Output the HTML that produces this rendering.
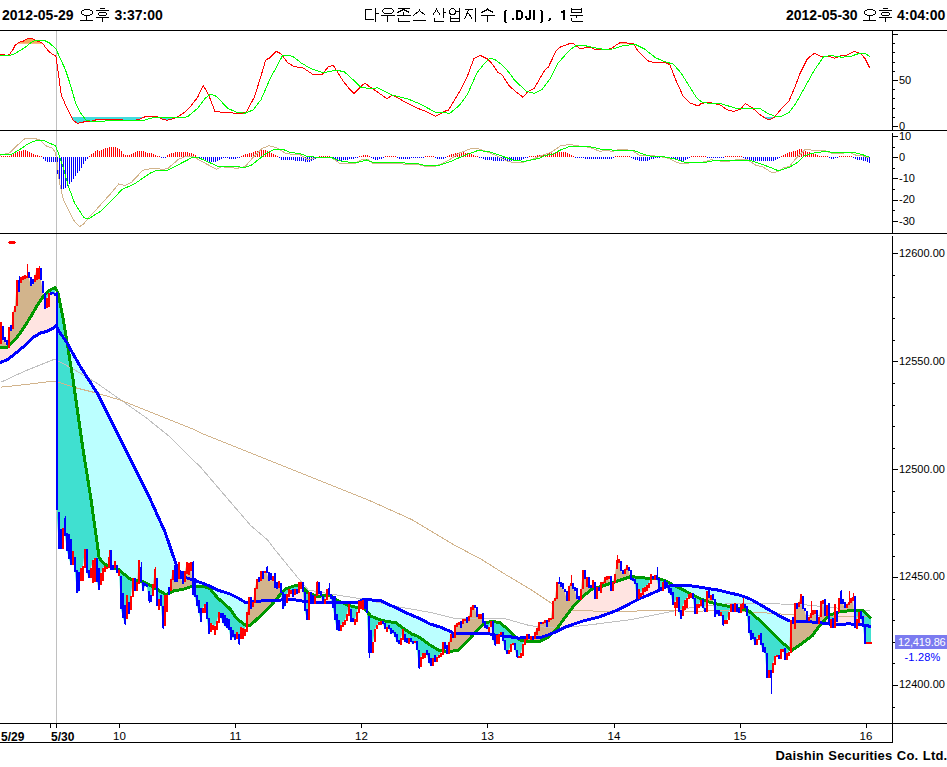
<!DOCTYPE html>
<html><head><meta charset="utf-8">
<style>
html,body{margin:0;padding:0;background:#fff;}
body{width:947px;height:767px;position:relative;overflow:hidden;font-family:"Liberation Sans",sans-serif;}
svg{position:absolute;left:0;top:0;}
.t{position:absolute;white-space:nowrap;line-height:1;}
.c{text-align:center;}
</style></head><body>
<svg width="947" height="767" viewBox="0 0 947 767">
<polygon points="0.0,54.8 0.5,54.8 1.0,54.7 1.5,54.7 2.0,54.6 2.5,54.6 3.0,54.6 3.5,54.5 4.0,54.5 4.5,54.8 5.0,55.0 5.5,55.2 6.0,55.5 6.5,55.7 7.0,55.9 7.5,55.8 8.0,55.4 8.5,55.0 9.0,54.6 9.5,54.2 10.0,53.7 10.5,53.0 11.0,52.4 11.5,51.7 12.0,51.0 12.5,50.3 13.0,49.6 13.5,48.6 14.0,47.6 14.5,46.6 15.0,45.6 15.5,45.1 16.0,44.7 16.5,44.2 17.0,43.8 17.0,43.8 16.5,43.8 16.0,43.8 15.5,43.8 15.0,43.8 14.5,43.8 14.0,43.8 13.5,43.8 13.0,43.8 12.5,43.8 12.0,43.8 11.5,43.8 11.0,43.8 10.5,43.8 10.0,43.8 9.5,43.8 9.0,43.8 8.5,43.8 8.0,43.8 7.5,43.8 7.0,43.8 6.5,43.8 6.0,43.8 5.5,43.8 5.0,43.8 4.5,43.8 4.0,43.8 3.5,43.8 3.0,43.8 2.5,43.8 2.0,43.8 1.5,43.8 1.0,43.8 0.5,43.8 0.0,43.8" fill="none" stroke="none"/>
<polygon points="17.0,43.8 17.0,43.8 17.5,43.3 18.0,42.9 18.5,42.5 19.0,42.4 19.5,42.2 20.0,42.1 20.5,41.9 21.0,41.8 21.5,41.6 22.0,41.5 22.5,41.3 23.0,41.2 23.5,41.0 24.0,40.7 24.5,40.4 25.0,40.2 25.5,39.9 26.0,39.6 26.5,39.3 27.0,39.1 27.5,38.8 28.0,38.5 28.5,38.5 29.0,38.5 29.5,38.5 30.0,38.5 30.5,38.5 31.0,38.5 31.5,38.5 32.0,38.5 32.5,38.5 33.0,38.8 33.5,39.2 34.0,39.5 34.5,39.9 35.0,40.3 35.5,40.5 36.0,40.6 36.5,40.8 37.0,40.9 37.5,41.0 38.0,41.2 38.5,41.3 39.0,41.5 39.5,41.6 40.0,41.8 40.5,42.1 41.0,42.5 41.5,42.8 42.0,43.1 42.5,43.4 43.0,43.7 43.1,43.8 43.1,43.8 43.0,43.8 42.5,43.8 42.0,43.8 41.5,43.8 41.0,43.8 40.5,43.8 40.0,43.8 39.5,43.8 39.0,43.8 38.5,43.8 38.0,43.8 37.5,43.8 37.0,43.8 36.5,43.8 36.0,43.8 35.5,43.8 35.0,43.8 34.5,43.8 34.0,43.8 33.5,43.8 33.0,43.8 32.5,43.8 32.0,43.8 31.5,43.8 31.0,43.8 30.5,43.8 30.0,43.8 29.5,43.8 29.0,43.8 28.5,43.8 28.0,43.8 27.5,43.8 27.0,43.8 26.5,43.8 26.0,43.8 25.5,43.8 25.0,43.8 24.5,43.8 24.0,43.8 23.5,43.8 23.0,43.8 22.5,43.8 22.0,43.8 21.5,43.8 21.0,43.8 20.5,43.8 20.0,43.8 19.5,43.8 19.0,43.8 18.5,43.8 18.0,43.8 17.5,43.8 17.0,43.8 17.0,43.8" fill="#F8A65C"/>
<polygon points="43.1,43.8 43.5,44.5 44.0,45.2 44.5,46.0 45.0,46.7 45.5,47.5 46.0,48.1 46.5,48.7 47.0,49.3 47.5,49.8 48.0,50.4 48.5,51.0 49.0,51.6 49.5,52.2 50.0,52.5 50.5,52.9 51.0,53.2 51.5,53.5 52.0,53.8 52.5,54.1 53.0,54.5 53.5,54.8 54.0,55.1 54.5,55.3 55.0,55.6 55.5,55.8 56.0,57.3 56.5,60.6 57.0,63.9 57.5,67.2 58.0,70.9 58.5,74.6 59.0,78.3 59.5,82.0 60.0,85.6 60.5,89.3 61.0,93.0 61.5,95.7 62.0,96.8 62.5,97.9 63.0,99.1 63.5,100.2 64.0,101.3 64.5,102.5 65.0,103.6 65.5,104.7 66.0,105.9 66.5,107.0 67.0,108.0 67.5,109.0 68.0,110.0 68.5,111.0 69.0,112.0 69.5,113.0 70.0,114.0 70.5,115.0 71.0,116.0 71.5,117.0 72.0,118.0 72.5,119.0 73.0,120.0 73.5,120.4 74.0,120.8 74.5,121.2 75.0,121.6 75.5,122.0 76.0,122.4 76.5,122.8 77.0,123.2 77.5,123.1 78.0,123.1 78.5,123.0 79.0,123.0 79.5,122.9 80.0,122.9 80.5,122.8 81.0,122.7 81.5,122.6 82.0,122.5 82.5,122.3 83.0,122.2 83.5,122.0 84.0,121.9 84.5,121.7 85.0,121.6 85.5,121.4 86.0,121.3 86.5,121.3 87.0,121.3 87.5,121.3 88.0,121.3 88.5,121.3 89.0,121.3 89.5,121.3 90.0,121.3 90.5,121.3 91.0,121.3 91.5,121.2 92.0,121.1 92.5,120.9 93.0,120.8 93.5,120.6 94.0,120.5 94.5,120.3 95.0,120.2 95.5,120.0 96.0,119.9 96.5,119.7 97.0,119.7 97.5,119.7 98.0,119.7 98.5,119.7 99.0,119.7 99.5,119.7 100.0,119.7 100.5,119.7 101.0,119.7 101.5,119.7 102.0,119.7 102.5,119.7 103.0,119.7 103.5,119.7 104.0,119.7 104.5,119.7 105.0,119.7 105.5,119.8 106.0,119.8 106.5,119.8 107.0,119.9 107.5,119.9 108.0,119.9 108.5,119.9 109.0,120.0 109.5,120.0 110.0,120.0 110.5,120.0 111.0,119.9 111.5,119.9 112.0,119.9 112.5,119.9 113.0,119.8 113.5,119.8 114.0,119.8 114.5,119.8 115.0,119.7 115.5,119.7 116.0,119.7 116.5,119.7 117.0,119.6 117.5,119.6 118.0,119.6 118.5,119.6 119.0,119.5 119.5,119.5 120.0,119.5 120.5,119.6 121.0,119.7 121.5,119.7 122.0,119.8 122.5,119.9 123.0,120.0 123.5,120.1 124.0,120.1 124.5,120.2 125.0,120.3 125.5,120.4 126.0,120.4 126.5,120.5 127.0,120.6 127.5,120.7 128.0,120.8 128.5,120.8 129.0,120.9 129.5,121.0 130.0,120.9 130.5,120.8 131.0,120.8 131.5,120.7 132.0,120.6 132.5,120.5 133.0,120.4 133.5,120.4 134.0,120.3 134.5,120.2 135.0,120.1 135.5,120.1 136.0,120.0 136.5,119.9 137.0,119.8 137.5,119.7 138.0,119.7 138.5,119.6 139.0,119.5 139.5,119.3 140.0,119.0 140.5,118.8 141.0,118.6 141.5,118.3 142.0,118.1 142.5,117.9 143.0,117.7 143.5,117.4 144.0,117.2 144.5,117.0 145.0,116.7 145.5,116.6 146.0,116.6 146.5,116.6 147.0,116.6 147.5,116.5 148.0,116.5 148.5,116.5 149.0,116.5 149.5,116.5 150.0,116.5 150.5,116.5 151.0,116.4 151.5,116.4 152.0,116.4 152.5,116.4 153.0,116.4 153.5,116.4 154.0,116.4 154.5,116.4 155.0,116.3 155.5,116.3 156.0,116.3 156.5,116.3 157.0,116.6 157.5,116.8 158.0,117.1 158.5,117.3 159.0,117.6 159.5,117.9 160.0,118.1 160.5,118.4 161.0,118.6 161.5,118.8 162.0,118.9 162.5,119.1 163.0,119.2 163.5,119.4 164.0,119.5 164.5,119.7 165.0,119.8 165.5,120.0 166.0,120.1 166.5,120.2 167.0,120.2 167.5,120.1 168.0,120.0 168.5,119.9 169.0,119.8 169.5,119.7 170.0,119.5 170.5,119.4 171.0,119.3 171.5,119.2 172.0,119.1 172.5,118.9 173.0,118.7 173.5,118.5 174.0,118.3 174.5,118.1 175.0,117.9 175.5,117.7 176.0,117.5 176.5,117.3 177.0,117.1 177.5,116.8 178.0,116.5 178.5,116.2 179.0,115.9 179.5,115.6 180.0,115.3 180.5,115.0 181.0,114.7 181.5,114.4 182.0,114.1 182.5,113.7 183.0,113.4 183.5,113.1 184.0,112.7 184.5,112.2 185.0,111.8 185.5,111.3 186.0,110.9 186.5,110.4 187.0,110.0 187.5,109.6 188.0,109.1 188.5,108.7 189.0,108.2 189.5,107.8 190.0,107.2 190.5,106.6 191.0,105.9 191.5,105.3 192.0,104.6 192.5,103.9 193.0,103.3 193.5,102.6 194.0,102.0 194.5,101.3 195.0,100.7 195.5,100.0 196.0,99.4 196.5,98.7 197.0,98.1 197.5,97.4 198.0,96.4 198.5,95.4 199.0,94.3 199.5,93.3 200.0,92.2 200.5,91.1 201.0,90.1 201.5,89.0 202.0,87.9 202.5,86.9 203.0,85.8 203.5,85.9 204.0,86.8 204.5,87.7 205.0,88.5 205.5,89.4 206.0,90.3 206.5,91.2 207.0,92.0 207.5,92.9 208.0,93.8 208.5,94.7 209.0,95.8 209.5,97.1 210.0,98.4 210.5,99.7 211.0,101.1 211.5,102.4 212.0,103.7 212.5,105.0 213.0,106.3 213.5,107.6 214.0,109.0 214.5,110.3 215.0,111.6 215.5,111.6 216.0,111.7 216.5,111.7 217.0,111.8 217.5,111.8 218.0,111.9 218.5,111.9 219.0,111.9 219.5,112.0 220.0,112.0 220.5,112.1 221.0,112.1 221.5,112.2 222.0,112.2 222.5,112.2 223.0,112.3 223.5,112.3 224.0,112.4 224.5,112.4 225.0,112.5 225.5,112.5 226.0,112.6 226.5,112.6 227.0,112.6 227.5,112.7 228.0,112.7 228.5,112.8 229.0,112.8 229.5,112.8 230.0,112.8 230.5,112.9 231.0,112.9 231.5,112.9 232.0,113.0 232.5,113.0 233.0,113.0 233.5,113.1 234.0,113.1 234.5,113.1 235.0,113.2 235.5,113.2 236.0,113.2 236.5,113.3 237.0,113.3 237.5,113.3 238.0,113.3 238.5,113.4 239.0,113.4 239.5,113.4 240.0,113.5 240.5,113.5 241.0,113.5 241.5,113.6 242.0,113.6 242.5,113.4 243.0,113.2 243.5,113.0 244.0,112.7 244.5,112.5 245.0,112.3 245.5,112.1 246.0,111.9 246.5,111.7 247.0,111.0 247.5,110.1 248.0,109.1 248.5,108.2 249.0,107.2 249.5,106.2 250.0,105.3 250.5,104.3 251.0,103.4 251.5,102.4 252.0,101.5 252.5,100.5 253.0,99.6 253.5,98.6 254.0,97.6 254.5,96.7 255.0,95.2 255.5,93.6 256.0,92.0 256.5,90.4 257.0,88.8 257.5,87.2 258.0,85.6 258.5,84.0 259.0,82.4 259.5,80.8 260.0,79.2 260.5,77.6 261.0,76.0 261.5,74.3 262.0,72.6 262.5,70.9 263.0,69.2 263.5,67.5 264.0,65.8 264.5,64.1 265.0,62.4 265.5,60.7 266.0,59.8 266.5,59.6 267.0,59.3 267.5,59.0 268.0,58.8 268.5,58.5 269.0,58.2 269.5,58.0 270.0,57.7 270.5,57.2 271.0,56.7 271.5,56.2 272.0,55.7 272.5,55.2 273.0,54.7 273.5,54.2 274.0,53.7 274.5,53.2 275.0,52.7 275.5,52.2 276.0,51.7 276.5,51.5 277.0,51.8 277.5,52.0 278.0,52.3 278.5,52.5 279.0,52.8 279.5,53.0 280.0,53.3 280.5,53.5 281.0,53.8 281.5,54.5 282.0,55.2 282.5,55.8 283.0,56.5 283.5,57.2 284.0,57.9 284.5,58.6 285.0,59.2 285.5,59.9 286.0,60.6 286.5,61.3 287.0,62.0 287.5,62.6 288.0,62.9 288.5,63.2 289.0,63.5 289.5,63.8 290.0,64.1 290.5,64.4 291.0,64.7 291.5,65.0 292.0,65.3 292.5,65.6 293.0,65.9 293.5,66.2 294.0,66.4 294.5,66.5 295.0,66.6 295.5,66.7 296.0,66.8 296.5,66.9 297.0,66.9 297.5,67.0 298.0,67.1 298.5,67.2 299.0,67.3 299.5,67.4 300.0,67.4 300.5,67.5 301.0,67.6 301.5,67.7 302.0,67.8 302.5,67.9 303.0,67.9 303.5,68.1 304.0,68.5 304.5,68.8 305.0,69.1 305.5,69.5 306.0,69.8 306.5,70.2 307.0,70.5 307.5,70.8 308.0,71.2 308.5,71.5 309.0,71.8 309.5,72.2 310.0,72.5 310.5,72.9 311.0,73.2 311.5,73.5 312.0,73.9 312.5,74.2 313.0,74.4 313.5,74.4 314.0,74.4 314.5,74.4 315.0,74.4 315.5,74.4 316.0,74.4 316.5,74.4 317.0,74.4 317.5,74.4 318.0,74.4 318.5,74.4 319.0,74.4 319.5,74.4 320.0,74.4 320.5,74.4 321.0,74.4 321.5,74.4 322.0,74.4 322.5,74.1 323.0,73.5 323.5,72.9 324.0,72.2 324.5,71.6 325.0,71.0 325.5,70.3 326.0,69.7 326.5,69.1 327.0,68.4 327.5,67.8 328.0,67.2 328.5,66.5 329.0,66.3 329.5,66.2 330.0,66.2 330.5,66.1 331.0,66.0 331.5,65.9 332.0,65.8 332.5,65.8 333.0,65.7 333.5,65.8 334.0,66.5 334.5,67.3 335.0,68.1 335.5,68.9 336.0,69.7 336.5,70.5 337.0,71.2 337.5,72.0 338.0,72.8 338.5,73.6 339.0,74.4 339.5,75.2 340.0,76.0 340.5,76.8 341.0,77.6 341.5,78.4 342.0,79.2 342.5,80.1 343.0,80.8 343.5,81.5 344.0,82.1 344.5,82.7 345.0,83.3 345.5,84.0 346.0,84.6 346.5,85.2 347.0,85.8 347.5,86.5 348.0,87.1 348.5,87.7 349.0,88.3 349.5,88.9 350.0,89.4 350.5,89.9 351.0,90.4 351.5,90.9 352.0,91.4 352.5,91.9 353.0,92.4 353.5,92.9 354.0,93.4 354.5,92.9 355.0,92.4 355.5,91.9 356.0,91.4 356.5,90.9 357.0,90.4 357.5,89.8 358.0,89.3 358.5,88.8 359.0,88.3 359.5,87.8 360.0,87.3 360.5,86.8 361.0,86.4 361.5,86.0 362.0,85.6 362.5,85.1 363.0,84.7 363.5,84.3 364.0,83.9 364.5,83.4 365.0,83.0 365.5,83.4 366.0,83.8 366.5,84.2 367.0,84.7 367.5,85.1 368.0,85.5 368.5,85.9 369.0,86.3 369.5,86.7 370.0,87.1 370.5,87.4 371.0,87.8 371.5,88.1 372.0,88.4 372.5,88.7 373.0,89.0 373.5,89.3 374.0,89.7 374.5,90.0 375.0,90.3 375.5,90.6 376.0,90.9 376.5,91.3 377.0,91.6 377.5,92.0 378.0,92.4 378.5,92.7 379.0,93.1 379.5,93.4 380.0,93.8 380.5,94.1 381.0,94.5 381.5,94.8 382.0,95.2 382.5,95.6 383.0,95.9 383.5,96.3 384.0,96.6 384.5,97.0 385.0,97.3 385.5,97.7 386.0,98.0 386.5,98.4 387.0,98.8 387.5,98.7 388.0,98.2 388.5,97.8 389.0,97.4 389.5,97.0 390.0,96.6 390.5,96.2 391.0,95.8 391.5,95.4 392.0,95.0 392.5,95.2 393.0,95.5 393.5,95.7 394.0,96.0 394.5,96.2 395.0,96.5 395.5,96.7 396.0,97.0 396.5,97.2 397.0,97.5 397.5,97.7 398.0,98.0 398.5,98.3 399.0,98.6 399.5,98.9 400.0,99.1 400.5,99.4 401.0,99.7 401.5,100.0 402.0,100.3 402.5,100.5 403.0,100.8 403.5,101.1 404.0,101.4 404.5,101.7 405.0,101.9 405.5,102.2 406.0,102.5 406.5,102.8 407.0,103.1 407.5,103.3 408.0,103.6 408.5,103.9 409.0,104.2 409.5,104.4 410.0,104.7 410.5,104.9 411.0,105.1 411.5,105.4 412.0,105.6 412.5,105.8 413.0,106.0 413.5,106.3 414.0,106.5 414.5,106.7 415.0,106.9 415.5,107.2 416.0,107.4 416.5,107.6 417.0,107.8 417.5,108.1 418.0,108.3 418.5,108.5 419.0,108.7 419.5,109.0 420.0,109.2 420.5,109.4 421.0,109.6 421.5,109.8 422.0,110.0 422.5,110.2 423.0,110.3 423.5,110.5 424.0,110.7 424.5,110.9 425.0,111.1 425.5,111.3 426.0,111.5 426.5,111.7 427.0,111.9 427.5,112.2 428.0,112.4 428.5,112.7 429.0,112.9 429.5,113.2 430.0,113.4 430.5,113.7 431.0,113.9 431.5,114.2 432.0,114.4 432.5,114.7 433.0,114.9 433.5,115.2 434.0,115.4 434.5,115.7 435.0,115.9 435.5,116.2 436.0,116.2 436.5,115.9 437.0,115.6 437.5,115.3 438.0,115.0 438.5,114.7 439.0,114.4 439.5,114.1 440.0,113.8 440.5,113.5 441.0,113.2 441.5,113.0 442.0,112.7 442.5,112.4 443.0,112.1 443.5,111.8 444.0,111.5 444.5,111.4 445.0,111.2 445.5,111.0 446.0,110.9 446.5,110.7 447.0,110.5 447.5,110.3 448.0,110.2 448.5,110.0 449.0,109.2 449.5,108.4 450.0,107.5 450.5,106.7 451.0,105.9 451.5,105.1 452.0,104.3 452.5,103.5 453.0,102.6 453.5,101.8 454.0,101.0 454.5,100.2 455.0,99.4 455.5,98.5 456.0,97.6 456.5,96.8 457.0,95.9 457.5,95.0 458.0,94.2 458.5,93.3 459.0,92.4 459.5,91.5 460.0,90.7 460.5,89.8 461.0,88.9 461.5,88.0 462.0,87.0 462.5,86.0 463.0,85.0 463.5,84.0 464.0,83.0 464.5,82.0 465.0,81.0 465.5,80.0 466.0,79.0 466.5,78.0 467.0,77.0 467.5,76.0 468.0,74.6 468.5,73.3 469.0,71.9 469.5,70.5 470.0,69.2 470.5,67.8 471.0,66.4 471.5,65.1 472.0,63.7 472.5,62.3 473.0,61.0 473.5,59.6 474.0,58.4 474.5,58.2 475.0,57.9 475.5,57.7 476.0,57.4 476.5,57.2 477.0,56.9 477.5,56.7 478.0,56.4 478.5,56.2 479.0,55.9 479.5,55.7 480.0,55.4 480.5,55.5 481.0,55.7 481.5,56.0 482.0,56.2 482.5,56.5 483.0,56.7 483.5,57.0 484.0,57.2 484.5,57.5 485.0,57.7 485.5,58.0 486.0,58.2 486.5,58.5 487.0,58.7 487.5,59.0 488.0,59.2 488.5,59.8 489.0,60.3 489.5,60.9 490.0,61.5 490.5,62.0 491.0,62.6 491.5,63.2 492.0,63.8 492.5,64.3 493.0,65.0 493.5,65.7 494.0,66.5 494.5,67.3 495.0,68.0 495.5,68.8 496.0,69.5 496.5,70.3 497.0,71.1 497.5,71.8 498.0,72.3 498.5,72.6 499.0,72.9 499.5,73.2 500.0,73.5 500.5,73.9 501.0,74.2 501.5,74.5 502.0,74.8 502.5,75.3 503.0,76.1 503.5,76.9 504.0,77.7 504.5,78.5 505.0,79.4 505.5,80.2 506.0,81.0 506.5,81.8 507.0,82.6 507.5,83.4 508.0,84.3 508.5,85.1 509.0,85.7 509.5,86.1 510.0,86.6 510.5,87.0 511.0,87.4 511.5,87.9 512.0,88.3 512.5,88.8 513.0,89.2 513.5,89.7 514.0,90.1 514.5,90.6 515.0,91.0 515.5,91.4 516.0,91.8 516.5,92.2 517.0,92.6 517.5,93.0 518.0,93.4 518.5,93.8 519.0,94.2 519.5,94.5 520.0,94.9 520.5,95.3 521.0,95.7 521.5,96.1 522.0,96.5 522.5,96.9 523.0,97.3 523.5,96.7 524.0,96.1 524.5,95.5 525.0,95.0 525.5,94.4 526.0,93.8 526.5,93.2 527.0,92.6 527.5,92.0 528.0,91.6 528.5,91.4 529.0,91.1 529.5,90.9 530.0,90.6 530.5,90.4 531.0,90.1 531.5,89.9 532.0,89.6 532.5,89.4 533.0,89.1 533.5,88.9 534.0,88.6 534.5,87.7 535.0,86.9 535.5,86.0 536.0,85.2 536.5,84.3 537.0,83.5 537.5,82.6 538.0,81.8 538.5,80.9 539.0,80.0 539.5,79.2 540.0,78.3 540.5,77.5 541.0,76.6 541.5,75.8 542.0,74.9 542.5,74.1 543.0,73.2 543.5,72.3 544.0,71.5 544.5,70.6 545.0,69.8 545.5,69.3 546.0,68.9 546.5,68.5 547.0,68.2 547.5,67.8 548.0,67.4 548.5,66.8 549.0,65.7 549.5,64.7 550.0,63.6 550.5,62.6 551.0,61.5 551.5,60.5 552.0,59.4 552.5,58.4 553.0,57.3 553.5,56.3 554.0,55.2 554.5,54.2 555.0,53.1 555.5,52.1 556.0,51.0 556.5,50.4 557.0,49.9 557.5,49.5 558.0,49.1 558.5,48.7 559.0,48.3 559.5,47.9 560.0,47.4 560.5,47.0 561.0,46.6 561.5,46.4 562.0,46.3 562.5,46.1 563.0,45.9 563.5,45.7 564.0,45.6 564.5,45.4 565.0,45.2 565.5,45.1 566.0,44.9 566.5,44.7 567.0,44.5 567.5,44.4 568.0,44.2 568.5,44.0 569.0,43.8 569.1,43.8 569.1,43.8 569.0,43.8 568.5,43.8 568.0,43.8 567.5,43.8 567.0,43.8 566.5,43.8 566.0,43.8 565.5,43.8 565.0,43.8 564.5,43.8 564.0,43.8 563.5,43.8 563.0,43.8 562.5,43.8 562.0,43.8 561.5,43.8 561.0,43.8 560.5,43.8 560.0,43.8 559.5,43.8 559.0,43.8 558.5,43.8 558.0,43.8 557.5,43.8 557.0,43.8 556.5,43.8 556.0,43.8 555.5,43.8 555.0,43.8 554.5,43.8 554.0,43.8 553.5,43.8 553.0,43.8 552.5,43.8 552.0,43.8 551.5,43.8 551.0,43.8 550.5,43.8 550.0,43.8 549.5,43.8 549.0,43.8 548.5,43.8 548.0,43.8 547.5,43.8 547.0,43.8 546.5,43.8 546.0,43.8 545.5,43.8 545.0,43.8 544.5,43.8 544.0,43.8 543.5,43.8 543.0,43.8 542.5,43.8 542.0,43.8 541.5,43.8 541.0,43.8 540.5,43.8 540.0,43.8 539.5,43.8 539.0,43.8 538.5,43.8 538.0,43.8 537.5,43.8 537.0,43.8 536.5,43.8 536.0,43.8 535.5,43.8 535.0,43.8 534.5,43.8 534.0,43.8 533.5,43.8 533.0,43.8 532.5,43.8 532.0,43.8 531.5,43.8 531.0,43.8 530.5,43.8 530.0,43.8 529.5,43.8 529.0,43.8 528.5,43.8 528.0,43.8 527.5,43.8 527.0,43.8 526.5,43.8 526.0,43.8 525.5,43.8 525.0,43.8 524.5,43.8 524.0,43.8 523.5,43.8 523.0,43.8 522.5,43.8 522.0,43.8 521.5,43.8 521.0,43.8 520.5,43.8 520.0,43.8 519.5,43.8 519.0,43.8 518.5,43.8 518.0,43.8 517.5,43.8 517.0,43.8 516.5,43.8 516.0,43.8 515.5,43.8 515.0,43.8 514.5,43.8 514.0,43.8 513.5,43.8 513.0,43.8 512.5,43.8 512.0,43.8 511.5,43.8 511.0,43.8 510.5,43.8 510.0,43.8 509.5,43.8 509.0,43.8 508.5,43.8 508.0,43.8 507.5,43.8 507.0,43.8 506.5,43.8 506.0,43.8 505.5,43.8 505.0,43.8 504.5,43.8 504.0,43.8 503.5,43.8 503.0,43.8 502.5,43.8 502.0,43.8 501.5,43.8 501.0,43.8 500.5,43.8 500.0,43.8 499.5,43.8 499.0,43.8 498.5,43.8 498.0,43.8 497.5,43.8 497.0,43.8 496.5,43.8 496.0,43.8 495.5,43.8 495.0,43.8 494.5,43.8 494.0,43.8 493.5,43.8 493.0,43.8 492.5,43.8 492.0,43.8 491.5,43.8 491.0,43.8 490.5,43.8 490.0,43.8 489.5,43.8 489.0,43.8 488.5,43.8 488.0,43.8 487.5,43.8 487.0,43.8 486.5,43.8 486.0,43.8 485.5,43.8 485.0,43.8 484.5,43.8 484.0,43.8 483.5,43.8 483.0,43.8 482.5,43.8 482.0,43.8 481.5,43.8 481.0,43.8 480.5,43.8 480.0,43.8 479.5,43.8 479.0,43.8 478.5,43.8 478.0,43.8 477.5,43.8 477.0,43.8 476.5,43.8 476.0,43.8 475.5,43.8 475.0,43.8 474.5,43.8 474.0,43.8 473.5,43.8 473.0,43.8 472.5,43.8 472.0,43.8 471.5,43.8 471.0,43.8 470.5,43.8 470.0,43.8 469.5,43.8 469.0,43.8 468.5,43.8 468.0,43.8 467.5,43.8 467.0,43.8 466.5,43.8 466.0,43.8 465.5,43.8 465.0,43.8 464.5,43.8 464.0,43.8 463.5,43.8 463.0,43.8 462.5,43.8 462.0,43.8 461.5,43.8 461.0,43.8 460.5,43.8 460.0,43.8 459.5,43.8 459.0,43.8 458.5,43.8 458.0,43.8 457.5,43.8 457.0,43.8 456.5,43.8 456.0,43.8 455.5,43.8 455.0,43.8 454.5,43.8 454.0,43.8 453.5,43.8 453.0,43.8 452.5,43.8 452.0,43.8 451.5,43.8 451.0,43.8 450.5,43.8 450.0,43.8 449.5,43.8 449.0,43.8 448.5,43.8 448.0,43.8 447.5,43.8 447.0,43.8 446.5,43.8 446.0,43.8 445.5,43.8 445.0,43.8 444.5,43.8 444.0,43.8 443.5,43.8 443.0,43.8 442.5,43.8 442.0,43.8 441.5,43.8 441.0,43.8 440.5,43.8 440.0,43.8 439.5,43.8 439.0,43.8 438.5,43.8 438.0,43.8 437.5,43.8 437.0,43.8 436.5,43.8 436.0,43.8 435.5,43.8 435.0,43.8 434.5,43.8 434.0,43.8 433.5,43.8 433.0,43.8 432.5,43.8 432.0,43.8 431.5,43.8 431.0,43.8 430.5,43.8 430.0,43.8 429.5,43.8 429.0,43.8 428.5,43.8 428.0,43.8 427.5,43.8 427.0,43.8 426.5,43.8 426.0,43.8 425.5,43.8 425.0,43.8 424.5,43.8 424.0,43.8 423.5,43.8 423.0,43.8 422.5,43.8 422.0,43.8 421.5,43.8 421.0,43.8 420.5,43.8 420.0,43.8 419.5,43.8 419.0,43.8 418.5,43.8 418.0,43.8 417.5,43.8 417.0,43.8 416.5,43.8 416.0,43.8 415.5,43.8 415.0,43.8 414.5,43.8 414.0,43.8 413.5,43.8 413.0,43.8 412.5,43.8 412.0,43.8 411.5,43.8 411.0,43.8 410.5,43.8 410.0,43.8 409.5,43.8 409.0,43.8 408.5,43.8 408.0,43.8 407.5,43.8 407.0,43.8 406.5,43.8 406.0,43.8 405.5,43.8 405.0,43.8 404.5,43.8 404.0,43.8 403.5,43.8 403.0,43.8 402.5,43.8 402.0,43.8 401.5,43.8 401.0,43.8 400.5,43.8 400.0,43.8 399.5,43.8 399.0,43.8 398.5,43.8 398.0,43.8 397.5,43.8 397.0,43.8 396.5,43.8 396.0,43.8 395.5,43.8 395.0,43.8 394.5,43.8 394.0,43.8 393.5,43.8 393.0,43.8 392.5,43.8 392.0,43.8 391.5,43.8 391.0,43.8 390.5,43.8 390.0,43.8 389.5,43.8 389.0,43.8 388.5,43.8 388.0,43.8 387.5,43.8 387.0,43.8 386.5,43.8 386.0,43.8 385.5,43.8 385.0,43.8 384.5,43.8 384.0,43.8 383.5,43.8 383.0,43.8 382.5,43.8 382.0,43.8 381.5,43.8 381.0,43.8 380.5,43.8 380.0,43.8 379.5,43.8 379.0,43.8 378.5,43.8 378.0,43.8 377.5,43.8 377.0,43.8 376.5,43.8 376.0,43.8 375.5,43.8 375.0,43.8 374.5,43.8 374.0,43.8 373.5,43.8 373.0,43.8 372.5,43.8 372.0,43.8 371.5,43.8 371.0,43.8 370.5,43.8 370.0,43.8 369.5,43.8 369.0,43.8 368.5,43.8 368.0,43.8 367.5,43.8 367.0,43.8 366.5,43.8 366.0,43.8 365.5,43.8 365.0,43.8 364.5,43.8 364.0,43.8 363.5,43.8 363.0,43.8 362.5,43.8 362.0,43.8 361.5,43.8 361.0,43.8 360.5,43.8 360.0,43.8 359.5,43.8 359.0,43.8 358.5,43.8 358.0,43.8 357.5,43.8 357.0,43.8 356.5,43.8 356.0,43.8 355.5,43.8 355.0,43.8 354.5,43.8 354.0,43.8 353.5,43.8 353.0,43.8 352.5,43.8 352.0,43.8 351.5,43.8 351.0,43.8 350.5,43.8 350.0,43.8 349.5,43.8 349.0,43.8 348.5,43.8 348.0,43.8 347.5,43.8 347.0,43.8 346.5,43.8 346.0,43.8 345.5,43.8 345.0,43.8 344.5,43.8 344.0,43.8 343.5,43.8 343.0,43.8 342.5,43.8 342.0,43.8 341.5,43.8 341.0,43.8 340.5,43.8 340.0,43.8 339.5,43.8 339.0,43.8 338.5,43.8 338.0,43.8 337.5,43.8 337.0,43.8 336.5,43.8 336.0,43.8 335.5,43.8 335.0,43.8 334.5,43.8 334.0,43.8 333.5,43.8 333.0,43.8 332.5,43.8 332.0,43.8 331.5,43.8 331.0,43.8 330.5,43.8 330.0,43.8 329.5,43.8 329.0,43.8 328.5,43.8 328.0,43.8 327.5,43.8 327.0,43.8 326.5,43.8 326.0,43.8 325.5,43.8 325.0,43.8 324.5,43.8 324.0,43.8 323.5,43.8 323.0,43.8 322.5,43.8 322.0,43.8 321.5,43.8 321.0,43.8 320.5,43.8 320.0,43.8 319.5,43.8 319.0,43.8 318.5,43.8 318.0,43.8 317.5,43.8 317.0,43.8 316.5,43.8 316.0,43.8 315.5,43.8 315.0,43.8 314.5,43.8 314.0,43.8 313.5,43.8 313.0,43.8 312.5,43.8 312.0,43.8 311.5,43.8 311.0,43.8 310.5,43.8 310.0,43.8 309.5,43.8 309.0,43.8 308.5,43.8 308.0,43.8 307.5,43.8 307.0,43.8 306.5,43.8 306.0,43.8 305.5,43.8 305.0,43.8 304.5,43.8 304.0,43.8 303.5,43.8 303.0,43.8 302.5,43.8 302.0,43.8 301.5,43.8 301.0,43.8 300.5,43.8 300.0,43.8 299.5,43.8 299.0,43.8 298.5,43.8 298.0,43.8 297.5,43.8 297.0,43.8 296.5,43.8 296.0,43.8 295.5,43.8 295.0,43.8 294.5,43.8 294.0,43.8 293.5,43.8 293.0,43.8 292.5,43.8 292.0,43.8 291.5,43.8 291.0,43.8 290.5,43.8 290.0,43.8 289.5,43.8 289.0,43.8 288.5,43.8 288.0,43.8 287.5,43.8 287.0,43.8 286.5,43.8 286.0,43.8 285.5,43.8 285.0,43.8 284.5,43.8 284.0,43.8 283.5,43.8 283.0,43.8 282.5,43.8 282.0,43.8 281.5,43.8 281.0,43.8 280.5,43.8 280.0,43.8 279.5,43.8 279.0,43.8 278.5,43.8 278.0,43.8 277.5,43.8 277.0,43.8 276.5,43.8 276.0,43.8 275.5,43.8 275.0,43.8 274.5,43.8 274.0,43.8 273.5,43.8 273.0,43.8 272.5,43.8 272.0,43.8 271.5,43.8 271.0,43.8 270.5,43.8 270.0,43.8 269.5,43.8 269.0,43.8 268.5,43.8 268.0,43.8 267.5,43.8 267.0,43.8 266.5,43.8 266.0,43.8 265.5,43.8 265.0,43.8 264.5,43.8 264.0,43.8 263.5,43.8 263.0,43.8 262.5,43.8 262.0,43.8 261.5,43.8 261.0,43.8 260.5,43.8 260.0,43.8 259.5,43.8 259.0,43.8 258.5,43.8 258.0,43.8 257.5,43.8 257.0,43.8 256.5,43.8 256.0,43.8 255.5,43.8 255.0,43.8 254.5,43.8 254.0,43.8 253.5,43.8 253.0,43.8 252.5,43.8 252.0,43.8 251.5,43.8 251.0,43.8 250.5,43.8 250.0,43.8 249.5,43.8 249.0,43.8 248.5,43.8 248.0,43.8 247.5,43.8 247.0,43.8 246.5,43.8 246.0,43.8 245.5,43.8 245.0,43.8 244.5,43.8 244.0,43.8 243.5,43.8 243.0,43.8 242.5,43.8 242.0,43.8 241.5,43.8 241.0,43.8 240.5,43.8 240.0,43.8 239.5,43.8 239.0,43.8 238.5,43.8 238.0,43.8 237.5,43.8 237.0,43.8 236.5,43.8 236.0,43.8 235.5,43.8 235.0,43.8 234.5,43.8 234.0,43.8 233.5,43.8 233.0,43.8 232.5,43.8 232.0,43.8 231.5,43.8 231.0,43.8 230.5,43.8 230.0,43.8 229.5,43.8 229.0,43.8 228.5,43.8 228.0,43.8 227.5,43.8 227.0,43.8 226.5,43.8 226.0,43.8 225.5,43.8 225.0,43.8 224.5,43.8 224.0,43.8 223.5,43.8 223.0,43.8 222.5,43.8 222.0,43.8 221.5,43.8 221.0,43.8 220.5,43.8 220.0,43.8 219.5,43.8 219.0,43.8 218.5,43.8 218.0,43.8 217.5,43.8 217.0,43.8 216.5,43.8 216.0,43.8 215.5,43.8 215.0,43.8 214.5,43.8 214.0,43.8 213.5,43.8 213.0,43.8 212.5,43.8 212.0,43.8 211.5,43.8 211.0,43.8 210.5,43.8 210.0,43.8 209.5,43.8 209.0,43.8 208.5,43.8 208.0,43.8 207.5,43.8 207.0,43.8 206.5,43.8 206.0,43.8 205.5,43.8 205.0,43.8 204.5,43.8 204.0,43.8 203.5,43.8 203.0,43.8 202.5,43.8 202.0,43.8 201.5,43.8 201.0,43.8 200.5,43.8 200.0,43.8 199.5,43.8 199.0,43.8 198.5,43.8 198.0,43.8 197.5,43.8 197.0,43.8 196.5,43.8 196.0,43.8 195.5,43.8 195.0,43.8 194.5,43.8 194.0,43.8 193.5,43.8 193.0,43.8 192.5,43.8 192.0,43.8 191.5,43.8 191.0,43.8 190.5,43.8 190.0,43.8 189.5,43.8 189.0,43.8 188.5,43.8 188.0,43.8 187.5,43.8 187.0,43.8 186.5,43.8 186.0,43.8 185.5,43.8 185.0,43.8 184.5,43.8 184.0,43.8 183.5,43.8 183.0,43.8 182.5,43.8 182.0,43.8 181.5,43.8 181.0,43.8 180.5,43.8 180.0,43.8 179.5,43.8 179.0,43.8 178.5,43.8 178.0,43.8 177.5,43.8 177.0,43.8 176.5,43.8 176.0,43.8 175.5,43.8 175.0,43.8 174.5,43.8 174.0,43.8 173.5,43.8 173.0,43.8 172.5,43.8 172.0,43.8 171.5,43.8 171.0,43.8 170.5,43.8 170.0,43.8 169.5,43.8 169.0,43.8 168.5,43.8 168.0,43.8 167.5,43.8 167.0,43.8 166.5,43.8 166.0,43.8 165.5,43.8 165.0,43.8 164.5,43.8 164.0,43.8 163.5,43.8 163.0,43.8 162.5,43.8 162.0,43.8 161.5,43.8 161.0,43.8 160.5,43.8 160.0,43.8 159.5,43.8 159.0,43.8 158.5,43.8 158.0,43.8 157.5,43.8 157.0,43.8 156.5,43.8 156.0,43.8 155.5,43.8 155.0,43.8 154.5,43.8 154.0,43.8 153.5,43.8 153.0,43.8 152.5,43.8 152.0,43.8 151.5,43.8 151.0,43.8 150.5,43.8 150.0,43.8 149.5,43.8 149.0,43.8 148.5,43.8 148.0,43.8 147.5,43.8 147.0,43.8 146.5,43.8 146.0,43.8 145.5,43.8 145.0,43.8 144.5,43.8 144.0,43.8 143.5,43.8 143.0,43.8 142.5,43.8 142.0,43.8 141.5,43.8 141.0,43.8 140.5,43.8 140.0,43.8 139.5,43.8 139.0,43.8 138.5,43.8 138.0,43.8 137.5,43.8 137.0,43.8 136.5,43.8 136.0,43.8 135.5,43.8 135.0,43.8 134.5,43.8 134.0,43.8 133.5,43.8 133.0,43.8 132.5,43.8 132.0,43.8 131.5,43.8 131.0,43.8 130.5,43.8 130.0,43.8 129.5,43.8 129.0,43.8 128.5,43.8 128.0,43.8 127.5,43.8 127.0,43.8 126.5,43.8 126.0,43.8 125.5,43.8 125.0,43.8 124.5,43.8 124.0,43.8 123.5,43.8 123.0,43.8 122.5,43.8 122.0,43.8 121.5,43.8 121.0,43.8 120.5,43.8 120.0,43.8 119.5,43.8 119.0,43.8 118.5,43.8 118.0,43.8 117.5,43.8 117.0,43.8 116.5,43.8 116.0,43.8 115.5,43.8 115.0,43.8 114.5,43.8 114.0,43.8 113.5,43.8 113.0,43.8 112.5,43.8 112.0,43.8 111.5,43.8 111.0,43.8 110.5,43.8 110.0,43.8 109.5,43.8 109.0,43.8 108.5,43.8 108.0,43.8 107.5,43.8 107.0,43.8 106.5,43.8 106.0,43.8 105.5,43.8 105.0,43.8 104.5,43.8 104.0,43.8 103.5,43.8 103.0,43.8 102.5,43.8 102.0,43.8 101.5,43.8 101.0,43.8 100.5,43.8 100.0,43.8 99.5,43.8 99.0,43.8 98.5,43.8 98.0,43.8 97.5,43.8 97.0,43.8 96.5,43.8 96.0,43.8 95.5,43.8 95.0,43.8 94.5,43.8 94.0,43.8 93.5,43.8 93.0,43.8 92.5,43.8 92.0,43.8 91.5,43.8 91.0,43.8 90.5,43.8 90.0,43.8 89.5,43.8 89.0,43.8 88.5,43.8 88.0,43.8 87.5,43.8 87.0,43.8 86.5,43.8 86.0,43.8 85.5,43.8 85.0,43.8 84.5,43.8 84.0,43.8 83.5,43.8 83.0,43.8 82.5,43.8 82.0,43.8 81.5,43.8 81.0,43.8 80.5,43.8 80.0,43.8 79.5,43.8 79.0,43.8 78.5,43.8 78.0,43.8 77.5,43.8 77.0,43.8 76.5,43.8 76.0,43.8 75.5,43.8 75.0,43.8 74.5,43.8 74.0,43.8 73.5,43.8 73.0,43.8 72.5,43.8 72.0,43.8 71.5,43.8 71.0,43.8 70.5,43.8 70.0,43.8 69.5,43.8 69.0,43.8 68.5,43.8 68.0,43.8 67.5,43.8 67.0,43.8 66.5,43.8 66.0,43.8 65.5,43.8 65.0,43.8 64.5,43.8 64.0,43.8 63.5,43.8 63.0,43.8 62.5,43.8 62.0,43.8 61.5,43.8 61.0,43.8 60.5,43.8 60.0,43.8 59.5,43.8 59.0,43.8 58.5,43.8 58.0,43.8 57.5,43.8 57.0,43.8 56.5,43.8 56.0,43.8 55.5,43.8 55.0,43.8 54.5,43.8 54.0,43.8 53.5,43.8 53.0,43.8 52.5,43.8 52.0,43.8 51.5,43.8 51.0,43.8 50.5,43.8 50.0,43.8 49.5,43.8 49.0,43.8 48.5,43.8 48.0,43.8 47.5,43.8 47.0,43.8 46.5,43.8 46.0,43.8 45.5,43.8 45.0,43.8 44.5,43.8 44.0,43.8 43.5,43.8 43.1,43.8" fill="none" stroke="none"/>
<polygon points="569.1,43.8 569.5,43.7 570.0,43.5 570.5,43.5 571.0,43.5 571.5,43.5 572.0,43.5 572.5,43.5 573.0,43.5 573.5,43.7 573.6,43.8 573.6,43.8 573.5,43.8 573.0,43.8 572.5,43.8 572.0,43.8 571.5,43.8 571.0,43.8 570.5,43.8 570.0,43.8 569.5,43.8 569.1,43.8" fill="#F8A65C"/>
<polygon points="573.6,43.8 574.0,44.1 574.5,44.5 575.0,44.9 575.5,45.3 576.0,45.7 576.5,46.1 577.0,46.4 577.5,46.8 578.0,47.2 578.5,47.6 579.0,48.0 579.5,48.4 580.0,48.8 580.5,48.9 581.0,48.8 581.5,48.7 582.0,48.5 582.5,48.4 583.0,48.2 583.5,48.1 584.0,47.9 584.5,47.8 585.0,47.6 585.5,47.5 586.0,47.4 586.5,47.4 587.0,47.4 587.5,47.4 588.0,47.4 588.5,47.4 589.0,47.4 589.5,47.4 590.0,47.4 590.5,47.4 591.0,47.6 591.5,47.9 592.0,48.1 592.5,48.4 593.0,48.6 593.5,48.9 594.0,49.1 594.5,49.4 595.0,49.6 595.5,49.8 596.0,49.8 596.5,49.8 597.0,49.8 597.5,49.8 598.0,49.8 598.5,49.8 599.0,49.8 599.5,49.8 600.0,49.8 600.5,49.8 601.0,49.8 601.5,49.8 602.0,49.8 602.5,49.8 603.0,49.8 603.5,49.8 604.0,49.8 604.5,49.7 605.0,49.6 605.5,49.6 606.0,49.5 606.5,49.4 607.0,49.3 607.5,49.3 608.0,49.2 608.5,49.1 609.0,49.0 609.5,49.0 610.0,48.9 610.5,48.8 611.0,48.7 611.5,48.5 612.0,48.1 612.5,47.7 613.0,47.3 613.5,46.9 614.0,46.5 614.5,46.2 615.0,45.8 615.5,45.4 616.0,45.0 616.5,44.7 617.0,44.4 617.5,44.2 618.0,43.9 618.2,43.8 618.2,43.8 618.0,43.8 617.5,43.8 617.0,43.8 616.5,43.8 616.0,43.8 615.5,43.8 615.0,43.8 614.5,43.8 614.0,43.8 613.5,43.8 613.0,43.8 612.5,43.8 612.0,43.8 611.5,43.8 611.0,43.8 610.5,43.8 610.0,43.8 609.5,43.8 609.0,43.8 608.5,43.8 608.0,43.8 607.5,43.8 607.0,43.8 606.5,43.8 606.0,43.8 605.5,43.8 605.0,43.8 604.5,43.8 604.0,43.8 603.5,43.8 603.0,43.8 602.5,43.8 602.0,43.8 601.5,43.8 601.0,43.8 600.5,43.8 600.0,43.8 599.5,43.8 599.0,43.8 598.5,43.8 598.0,43.8 597.5,43.8 597.0,43.8 596.5,43.8 596.0,43.8 595.5,43.8 595.0,43.8 594.5,43.8 594.0,43.8 593.5,43.8 593.0,43.8 592.5,43.8 592.0,43.8 591.5,43.8 591.0,43.8 590.5,43.8 590.0,43.8 589.5,43.8 589.0,43.8 588.5,43.8 588.0,43.8 587.5,43.8 587.0,43.8 586.5,43.8 586.0,43.8 585.5,43.8 585.0,43.8 584.5,43.8 584.0,43.8 583.5,43.8 583.0,43.8 582.5,43.8 582.0,43.8 581.5,43.8 581.0,43.8 580.5,43.8 580.0,43.8 579.5,43.8 579.0,43.8 578.5,43.8 578.0,43.8 577.5,43.8 577.0,43.8 576.5,43.8 576.0,43.8 575.5,43.8 575.0,43.8 574.5,43.8 574.0,43.8 573.6,43.8" fill="none" stroke="none"/>
<polygon points="618.2,43.8 618.5,43.6 619.0,43.3 619.5,43.1 620.0,42.8 620.5,42.5 621.0,42.4 621.5,42.5 622.0,42.5 622.5,42.6 623.0,42.6 623.5,42.7 624.0,42.7 624.5,42.8 625.0,42.8 625.5,42.9 626.0,42.9 626.5,43.0 627.0,43.0 627.5,43.0 628.0,43.1 628.5,43.1 629.0,43.2 629.5,43.2 630.0,43.2 630.5,43.3 631.0,43.3 631.5,43.4 632.0,43.4 632.5,43.4 633.0,43.5 633.5,43.7 633.6,43.8 633.6,43.8 633.5,43.8 633.0,43.8 632.5,43.8 632.0,43.8 631.5,43.8 631.0,43.8 630.5,43.8 630.0,43.8 629.5,43.8 629.0,43.8 628.5,43.8 628.0,43.8 627.5,43.8 627.0,43.8 626.5,43.8 626.0,43.8 625.5,43.8 625.0,43.8 624.5,43.8 624.0,43.8 623.5,43.8 623.0,43.8 622.5,43.8 622.0,43.8 621.5,43.8 621.0,43.8 620.5,43.8 620.0,43.8 619.5,43.8 619.0,43.8 618.5,43.8 618.2,43.8" fill="#F8A65C"/>
<polygon points="633.6,43.8 634.0,44.5 634.5,45.3 635.0,46.2 635.5,47.0 636.0,47.9 636.5,48.7 637.0,49.6 637.5,50.4 638.0,51.2 638.5,51.8 639.0,52.3 639.5,52.8 640.0,53.3 640.5,53.8 641.0,54.2 641.5,54.7 642.0,55.2 642.5,55.7 643.0,56.2 643.5,56.6 644.0,57.1 644.5,57.5 645.0,58.0 645.5,58.4 646.0,58.9 646.5,59.3 647.0,59.7 647.5,60.2 648.0,60.6 648.5,61.1 649.0,61.5 649.5,61.7 650.0,61.8 650.5,61.9 651.0,61.9 651.5,62.0 652.0,62.1 652.5,62.1 653.0,62.2 653.5,62.2 654.0,62.3 654.5,62.4 655.0,62.4 655.5,62.5 656.0,62.5 656.5,62.5 657.0,62.6 657.5,62.6 658.0,62.6 658.5,62.6 659.0,62.7 659.5,62.7 660.0,62.7 660.5,62.7 661.0,62.7 661.5,62.8 662.0,62.8 662.5,62.8 663.0,62.8 663.5,62.9 664.0,62.9 664.5,62.9 665.0,62.9 665.5,63.0 666.0,63.0 666.5,63.0 667.0,63.2 667.5,63.5 668.0,63.8 668.5,64.1 669.0,64.4 669.5,64.6 670.0,65.3 670.5,66.6 671.0,67.8 671.5,69.1 672.0,70.4 672.5,71.6 673.0,72.9 673.5,74.1 674.0,75.4 674.5,76.7 675.0,77.9 675.5,79.2 676.0,80.4 676.5,81.6 677.0,82.7 677.5,83.8 678.0,84.9 678.5,86.0 679.0,87.1 679.5,88.2 680.0,89.3 680.5,90.4 681.0,91.5 681.5,92.6 682.0,93.6 682.5,94.7 683.0,95.8 683.5,96.7 684.0,97.2 684.5,97.6 685.0,98.1 685.5,98.6 686.0,99.0 686.5,99.5 687.0,100.0 687.5,100.5 688.0,100.9 688.5,101.4 689.0,101.9 689.5,102.4 690.0,102.8 690.5,103.2 691.0,103.4 691.5,103.6 692.0,103.8 692.5,103.9 693.0,104.1 693.5,104.3 694.0,104.5 694.5,104.7 695.0,104.8 695.5,105.0 696.0,105.2 696.5,105.4 697.0,105.5 697.5,105.7 698.0,105.9 698.5,105.8 699.0,105.4 699.5,104.9 700.0,104.5 700.5,104.1 701.0,103.6 701.5,103.2 702.0,103.2 702.5,103.1 703.0,103.1 703.5,103.0 704.0,103.0 704.5,102.9 705.0,102.9 705.5,102.8 706.0,102.8 706.5,102.8 707.0,102.7 707.5,102.7 708.0,102.6 708.5,102.6 709.0,102.5 709.5,102.5 710.0,102.6 710.5,102.7 711.0,102.8 711.5,103.0 712.0,103.1 712.5,103.2 713.0,103.3 713.5,103.4 714.0,103.5 714.5,103.6 715.0,103.7 715.5,103.8 716.0,103.9 716.5,104.0 717.0,104.1 717.5,104.3 718.0,104.4 718.5,104.5 719.0,104.6 719.5,104.7 720.0,104.8 720.5,105.1 721.0,105.5 721.5,105.8 722.0,106.2 722.5,106.5 723.0,106.9 723.5,107.2 724.0,107.6 724.5,107.9 725.0,108.3 725.5,108.6 726.0,109.0 726.5,109.3 727.0,109.7 727.5,109.9 728.0,110.1 728.5,110.2 729.0,110.3 729.5,110.4 730.0,110.5 730.5,110.7 731.0,110.8 731.5,110.9 732.0,111.0 732.5,111.1 733.0,111.3 733.5,111.4 734.0,111.3 734.5,111.1 735.0,111.0 735.5,110.8 736.0,110.7 736.5,110.5 737.0,110.4 737.5,110.2 738.0,110.1 738.5,109.9 739.0,109.8 739.5,109.6 740.0,109.5 740.5,109.0 741.0,108.4 741.5,107.9 742.0,107.3 742.5,106.8 743.0,106.2 743.5,105.7 744.0,105.1 744.5,104.6 745.0,104.0 745.5,103.7 746.0,104.0 746.5,104.3 747.0,104.6 747.5,104.9 748.0,105.2 748.5,105.5 749.0,105.8 749.5,106.1 750.0,106.4 750.5,106.7 751.0,107.1 751.5,107.4 752.0,107.7 752.5,108.0 753.0,108.4 753.5,108.9 754.0,109.3 754.5,109.8 755.0,110.3 755.5,110.7 756.0,111.2 756.5,111.7 757.0,112.2 757.5,112.6 758.0,113.1 758.5,113.5 759.0,113.9 759.5,114.2 760.0,114.6 760.5,114.9 761.0,115.3 761.5,115.7 762.0,116.0 762.5,116.4 763.0,116.8 763.5,117.1 764.0,117.4 764.5,117.7 765.0,117.9 765.5,118.2 766.0,118.4 766.5,118.7 767.0,119.0 767.5,119.2 768.0,119.5 768.5,119.7 769.0,120.0 769.5,119.7 770.0,119.5 770.5,119.2 771.0,119.0 771.5,118.7 772.0,118.5 772.5,118.2 773.0,118.0 773.5,117.7 774.0,117.5 774.5,117.2 775.0,116.6 775.5,116.0 776.0,115.3 776.5,114.7 777.0,114.1 777.5,113.5 778.0,112.8 778.5,112.2 779.0,111.6 779.5,111.0 780.0,110.3 780.5,109.7 781.0,109.1 781.5,108.5 782.0,107.9 782.5,107.4 783.0,106.9 783.5,106.4 784.0,105.9 784.5,105.4 785.0,104.9 785.5,104.3 786.0,103.8 786.5,103.3 787.0,102.8 787.5,102.3 788.0,101.8 788.5,101.3 789.0,100.8 789.5,99.6 790.0,98.5 790.5,97.3 791.0,96.2 791.5,95.0 792.0,93.9 792.5,92.7 793.0,91.6 793.5,90.4 794.0,89.3 794.5,88.1 795.0,86.8 795.5,85.5 796.0,84.1 796.5,82.8 797.0,81.5 797.5,80.2 798.0,78.9 798.5,77.6 799.0,76.2 799.5,74.9 800.0,73.6 800.5,72.6 801.0,71.6 801.5,70.6 802.0,69.5 802.5,68.5 803.0,67.5 803.5,66.5 804.0,65.5 804.5,64.5 805.0,63.5 805.5,62.4 806.0,61.4 806.5,60.4 807.0,59.4 807.5,58.8 808.0,58.4 808.5,58.0 809.0,57.6 809.5,57.1 810.0,56.7 810.5,56.3 811.0,55.9 811.5,55.5 812.0,55.1 812.5,54.7 813.0,54.3 813.5,53.9 814.0,53.5 814.5,53.3 815.0,53.5 815.5,53.8 816.0,54.0 816.5,54.3 817.0,54.5 817.5,54.8 818.0,55.0 818.5,55.3 819.0,55.5 819.5,55.8 820.0,56.0 820.5,56.3 821.0,56.5 821.5,56.8 822.0,56.9 822.5,56.8 823.0,56.8 823.5,56.8 824.0,56.7 824.5,56.7 825.0,56.6 825.5,56.6 826.0,56.5 826.5,56.5 827.0,56.5 827.5,56.4 828.0,56.4 828.5,56.3 829.0,56.3 829.5,56.5 830.0,56.7 830.5,56.8 831.0,57.0 831.5,57.2 832.0,57.4 832.5,57.5 833.0,57.7 833.5,57.9 834.0,58.1 834.5,58.2 835.0,58.0 835.5,57.8 836.0,57.6 836.5,57.4 837.0,57.2 837.5,57.0 838.0,56.8 838.5,56.6 839.0,56.4 839.5,56.2 840.0,56.1 840.5,55.9 841.0,55.7 841.5,55.5 842.0,55.4 842.5,55.3 843.0,55.3 843.5,55.3 844.0,55.2 844.5,55.2 845.0,55.2 845.5,55.1 846.0,55.1 846.5,55.0 847.0,55.0 847.5,54.8 848.0,54.6 848.5,54.3 849.0,54.1 849.5,53.8 850.0,53.6 850.5,53.3 851.0,53.1 851.5,52.8 852.0,52.6 852.5,52.3 853.0,52.1 853.5,51.8 854.0,51.6 854.5,51.4 855.0,51.6 855.5,51.8 856.0,52.0 856.5,52.1 857.0,52.3 857.5,52.5 858.0,52.6 858.5,52.8 859.0,53.0 859.5,53.2 860.0,53.3 860.5,53.5 861.0,53.8 861.5,54.4 862.0,55.0 862.5,55.6 863.0,56.2 863.5,56.8 864.0,57.4 864.5,58.0 865.0,58.6 865.5,59.4 866.0,60.4 866.5,61.4 867.0,62.4 867.5,63.4 868.0,64.5 868.5,65.5 869.0,66.5 869.5,67.5 869.5,43.8 869.0,43.8 868.5,43.8 868.0,43.8 867.5,43.8 867.0,43.8 866.5,43.8 866.0,43.8 865.5,43.8 865.0,43.8 864.5,43.8 864.0,43.8 863.5,43.8 863.0,43.8 862.5,43.8 862.0,43.8 861.5,43.8 861.0,43.8 860.5,43.8 860.0,43.8 859.5,43.8 859.0,43.8 858.5,43.8 858.0,43.8 857.5,43.8 857.0,43.8 856.5,43.8 856.0,43.8 855.5,43.8 855.0,43.8 854.5,43.8 854.0,43.8 853.5,43.8 853.0,43.8 852.5,43.8 852.0,43.8 851.5,43.8 851.0,43.8 850.5,43.8 850.0,43.8 849.5,43.8 849.0,43.8 848.5,43.8 848.0,43.8 847.5,43.8 847.0,43.8 846.5,43.8 846.0,43.8 845.5,43.8 845.0,43.8 844.5,43.8 844.0,43.8 843.5,43.8 843.0,43.8 842.5,43.8 842.0,43.8 841.5,43.8 841.0,43.8 840.5,43.8 840.0,43.8 839.5,43.8 839.0,43.8 838.5,43.8 838.0,43.8 837.5,43.8 837.0,43.8 836.5,43.8 836.0,43.8 835.5,43.8 835.0,43.8 834.5,43.8 834.0,43.8 833.5,43.8 833.0,43.8 832.5,43.8 832.0,43.8 831.5,43.8 831.0,43.8 830.5,43.8 830.0,43.8 829.5,43.8 829.0,43.8 828.5,43.8 828.0,43.8 827.5,43.8 827.0,43.8 826.5,43.8 826.0,43.8 825.5,43.8 825.0,43.8 824.5,43.8 824.0,43.8 823.5,43.8 823.0,43.8 822.5,43.8 822.0,43.8 821.5,43.8 821.0,43.8 820.5,43.8 820.0,43.8 819.5,43.8 819.0,43.8 818.5,43.8 818.0,43.8 817.5,43.8 817.0,43.8 816.5,43.8 816.0,43.8 815.5,43.8 815.0,43.8 814.5,43.8 814.0,43.8 813.5,43.8 813.0,43.8 812.5,43.8 812.0,43.8 811.5,43.8 811.0,43.8 810.5,43.8 810.0,43.8 809.5,43.8 809.0,43.8 808.5,43.8 808.0,43.8 807.5,43.8 807.0,43.8 806.5,43.8 806.0,43.8 805.5,43.8 805.0,43.8 804.5,43.8 804.0,43.8 803.5,43.8 803.0,43.8 802.5,43.8 802.0,43.8 801.5,43.8 801.0,43.8 800.5,43.8 800.0,43.8 799.5,43.8 799.0,43.8 798.5,43.8 798.0,43.8 797.5,43.8 797.0,43.8 796.5,43.8 796.0,43.8 795.5,43.8 795.0,43.8 794.5,43.8 794.0,43.8 793.5,43.8 793.0,43.8 792.5,43.8 792.0,43.8 791.5,43.8 791.0,43.8 790.5,43.8 790.0,43.8 789.5,43.8 789.0,43.8 788.5,43.8 788.0,43.8 787.5,43.8 787.0,43.8 786.5,43.8 786.0,43.8 785.5,43.8 785.0,43.8 784.5,43.8 784.0,43.8 783.5,43.8 783.0,43.8 782.5,43.8 782.0,43.8 781.5,43.8 781.0,43.8 780.5,43.8 780.0,43.8 779.5,43.8 779.0,43.8 778.5,43.8 778.0,43.8 777.5,43.8 777.0,43.8 776.5,43.8 776.0,43.8 775.5,43.8 775.0,43.8 774.5,43.8 774.0,43.8 773.5,43.8 773.0,43.8 772.5,43.8 772.0,43.8 771.5,43.8 771.0,43.8 770.5,43.8 770.0,43.8 769.5,43.8 769.0,43.8 768.5,43.8 768.0,43.8 767.5,43.8 767.0,43.8 766.5,43.8 766.0,43.8 765.5,43.8 765.0,43.8 764.5,43.8 764.0,43.8 763.5,43.8 763.0,43.8 762.5,43.8 762.0,43.8 761.5,43.8 761.0,43.8 760.5,43.8 760.0,43.8 759.5,43.8 759.0,43.8 758.5,43.8 758.0,43.8 757.5,43.8 757.0,43.8 756.5,43.8 756.0,43.8 755.5,43.8 755.0,43.8 754.5,43.8 754.0,43.8 753.5,43.8 753.0,43.8 752.5,43.8 752.0,43.8 751.5,43.8 751.0,43.8 750.5,43.8 750.0,43.8 749.5,43.8 749.0,43.8 748.5,43.8 748.0,43.8 747.5,43.8 747.0,43.8 746.5,43.8 746.0,43.8 745.5,43.8 745.0,43.8 744.5,43.8 744.0,43.8 743.5,43.8 743.0,43.8 742.5,43.8 742.0,43.8 741.5,43.8 741.0,43.8 740.5,43.8 740.0,43.8 739.5,43.8 739.0,43.8 738.5,43.8 738.0,43.8 737.5,43.8 737.0,43.8 736.5,43.8 736.0,43.8 735.5,43.8 735.0,43.8 734.5,43.8 734.0,43.8 733.5,43.8 733.0,43.8 732.5,43.8 732.0,43.8 731.5,43.8 731.0,43.8 730.5,43.8 730.0,43.8 729.5,43.8 729.0,43.8 728.5,43.8 728.0,43.8 727.5,43.8 727.0,43.8 726.5,43.8 726.0,43.8 725.5,43.8 725.0,43.8 724.5,43.8 724.0,43.8 723.5,43.8 723.0,43.8 722.5,43.8 722.0,43.8 721.5,43.8 721.0,43.8 720.5,43.8 720.0,43.8 719.5,43.8 719.0,43.8 718.5,43.8 718.0,43.8 717.5,43.8 717.0,43.8 716.5,43.8 716.0,43.8 715.5,43.8 715.0,43.8 714.5,43.8 714.0,43.8 713.5,43.8 713.0,43.8 712.5,43.8 712.0,43.8 711.5,43.8 711.0,43.8 710.5,43.8 710.0,43.8 709.5,43.8 709.0,43.8 708.5,43.8 708.0,43.8 707.5,43.8 707.0,43.8 706.5,43.8 706.0,43.8 705.5,43.8 705.0,43.8 704.5,43.8 704.0,43.8 703.5,43.8 703.0,43.8 702.5,43.8 702.0,43.8 701.5,43.8 701.0,43.8 700.5,43.8 700.0,43.8 699.5,43.8 699.0,43.8 698.5,43.8 698.0,43.8 697.5,43.8 697.0,43.8 696.5,43.8 696.0,43.8 695.5,43.8 695.0,43.8 694.5,43.8 694.0,43.8 693.5,43.8 693.0,43.8 692.5,43.8 692.0,43.8 691.5,43.8 691.0,43.8 690.5,43.8 690.0,43.8 689.5,43.8 689.0,43.8 688.5,43.8 688.0,43.8 687.5,43.8 687.0,43.8 686.5,43.8 686.0,43.8 685.5,43.8 685.0,43.8 684.5,43.8 684.0,43.8 683.5,43.8 683.0,43.8 682.5,43.8 682.0,43.8 681.5,43.8 681.0,43.8 680.5,43.8 680.0,43.8 679.5,43.8 679.0,43.8 678.5,43.8 678.0,43.8 677.5,43.8 677.0,43.8 676.5,43.8 676.0,43.8 675.5,43.8 675.0,43.8 674.5,43.8 674.0,43.8 673.5,43.8 673.0,43.8 672.5,43.8 672.0,43.8 671.5,43.8 671.0,43.8 670.5,43.8 670.0,43.8 669.5,43.8 669.0,43.8 668.5,43.8 668.0,43.8 667.5,43.8 667.0,43.8 666.5,43.8 666.0,43.8 665.5,43.8 665.0,43.8 664.5,43.8 664.0,43.8 663.5,43.8 663.0,43.8 662.5,43.8 662.0,43.8 661.5,43.8 661.0,43.8 660.5,43.8 660.0,43.8 659.5,43.8 659.0,43.8 658.5,43.8 658.0,43.8 657.5,43.8 657.0,43.8 656.5,43.8 656.0,43.8 655.5,43.8 655.0,43.8 654.5,43.8 654.0,43.8 653.5,43.8 653.0,43.8 652.5,43.8 652.0,43.8 651.5,43.8 651.0,43.8 650.5,43.8 650.0,43.8 649.5,43.8 649.0,43.8 648.5,43.8 648.0,43.8 647.5,43.8 647.0,43.8 646.5,43.8 646.0,43.8 645.5,43.8 645.0,43.8 644.5,43.8 644.0,43.8 643.5,43.8 643.0,43.8 642.5,43.8 642.0,43.8 641.5,43.8 641.0,43.8 640.5,43.8 640.0,43.8 639.5,43.8 639.0,43.8 638.5,43.8 638.0,43.8 637.5,43.8 637.0,43.8 636.5,43.8 636.0,43.8 635.5,43.8 635.0,43.8 634.5,43.8 634.0,43.8 633.6,43.8" fill="none" stroke="none"/>
<polygon points="0.0,117.0 0.5,117.0 1.0,117.0 1.5,117.0 2.0,117.0 2.5,117.0 3.0,117.0 3.5,117.0 4.0,117.0 4.5,117.0 5.0,117.0 5.5,117.0 6.0,117.0 6.5,117.0 7.0,117.0 7.5,117.0 8.0,117.0 8.5,117.0 9.0,117.0 9.5,117.0 10.0,117.0 10.5,117.0 11.0,117.0 11.5,117.0 12.0,117.0 12.5,117.0 13.0,117.0 13.5,117.0 14.0,117.0 14.5,117.0 15.0,117.0 15.5,117.0 16.0,117.0 16.5,117.0 17.0,117.0 17.5,117.0 18.0,117.0 18.5,117.0 19.0,117.0 19.5,117.0 20.0,117.0 20.5,117.0 21.0,117.0 21.5,117.0 22.0,117.0 22.5,117.0 23.0,117.0 23.5,117.0 24.0,117.0 24.5,117.0 25.0,117.0 25.5,117.0 26.0,117.0 26.5,117.0 27.0,117.0 27.5,117.0 28.0,117.0 28.5,117.0 29.0,117.0 29.5,117.0 30.0,117.0 30.5,117.0 31.0,117.0 31.5,117.0 32.0,117.0 32.5,117.0 33.0,117.0 33.5,117.0 34.0,117.0 34.5,117.0 35.0,117.0 35.5,117.0 36.0,117.0 36.5,117.0 37.0,117.0 37.5,117.0 38.0,117.0 38.5,117.0 39.0,117.0 39.5,117.0 40.0,117.0 40.5,117.0 41.0,117.0 41.5,117.0 42.0,117.0 42.5,117.0 43.0,117.0 43.5,117.0 44.0,117.0 44.5,117.0 45.0,117.0 45.5,117.0 46.0,117.0 46.5,117.0 47.0,117.0 47.5,117.0 48.0,117.0 48.5,117.0 49.0,117.0 49.5,117.0 50.0,117.0 50.5,117.0 51.0,117.0 51.5,117.0 52.0,117.0 52.5,117.0 53.0,117.0 53.5,117.0 54.0,117.0 54.5,117.0 55.0,117.0 55.5,117.0 56.0,117.0 56.5,117.0 57.0,117.0 57.5,117.0 58.0,117.0 58.5,117.0 59.0,117.0 59.5,117.0 60.0,117.0 60.5,117.0 61.0,117.0 61.5,117.0 62.0,117.0 62.5,117.0 63.0,117.0 63.5,117.0 64.0,117.0 64.5,117.0 65.0,117.0 65.5,117.0 66.0,117.0 66.5,117.0 67.0,117.0 67.5,117.0 68.0,117.0 68.5,117.0 69.0,117.0 69.5,117.0 70.0,117.0 70.5,117.0 71.0,117.0 71.5,117.0 71.5,117.0 71.5,117.0 71.5,117.0 71.0,116.0 70.5,115.0 70.0,114.0 69.5,113.0 69.0,112.0 68.5,111.0 68.0,110.0 67.5,109.0 67.0,108.0 66.5,107.0 66.0,105.9 65.5,104.7 65.0,103.6 64.5,102.5 64.0,101.3 63.5,100.2 63.0,99.1 62.5,97.9 62.0,96.8 61.5,95.7 61.0,93.0 60.5,89.3 60.0,85.6 59.5,82.0 59.0,78.3 58.5,74.6 58.0,70.9 57.5,67.2 57.0,63.9 56.5,60.6 56.0,57.3 55.5,55.8 55.0,55.6 54.5,55.3 54.0,55.1 53.5,54.8 53.0,54.5 52.5,54.1 52.0,53.8 51.5,53.5 51.0,53.2 50.5,52.9 50.0,52.5 49.5,52.2 49.0,51.6 48.5,51.0 48.0,50.4 47.5,49.8 47.0,49.3 46.5,48.7 46.0,48.1 45.5,47.5 45.0,46.7 44.5,46.0 44.0,45.2 43.5,44.5 43.0,43.7 42.5,43.4 42.0,43.1 41.5,42.8 41.0,42.5 40.5,42.1 40.0,41.8 39.5,41.6 39.0,41.5 38.5,41.3 38.0,41.2 37.5,41.0 37.0,40.9 36.5,40.8 36.0,40.6 35.5,40.5 35.0,40.3 34.5,39.9 34.0,39.5 33.5,39.2 33.0,38.8 32.5,38.5 32.0,38.5 31.5,38.5 31.0,38.5 30.5,38.5 30.0,38.5 29.5,38.5 29.0,38.5 28.5,38.5 28.0,38.5 27.5,38.8 27.0,39.1 26.5,39.3 26.0,39.6 25.5,39.9 25.0,40.2 24.5,40.4 24.0,40.7 23.5,41.0 23.0,41.2 22.5,41.3 22.0,41.5 21.5,41.6 21.0,41.8 20.5,41.9 20.0,42.1 19.5,42.2 19.0,42.4 18.5,42.5 18.0,42.9 17.5,43.3 17.0,43.8 16.5,44.2 16.0,44.7 15.5,45.1 15.0,45.6 14.5,46.6 14.0,47.6 13.5,48.6 13.0,49.6 12.5,50.3 12.0,51.0 11.5,51.7 11.0,52.4 10.5,53.0 10.0,53.7 9.5,54.2 9.0,54.6 8.5,55.0 8.0,55.4 7.5,55.8 7.0,55.9 6.5,55.7 6.0,55.5 5.5,55.2 5.0,55.0 4.5,54.8 4.0,54.5 3.5,54.5 3.0,54.6 2.5,54.6 2.0,54.6 1.5,54.7 1.0,54.7 0.5,54.8 0.0,54.8" fill="none" stroke="none"/>
<polygon points="71.5,117.0 72.0,117.0 72.5,117.0 73.0,117.0 73.5,117.0 74.0,117.0 74.5,117.0 75.0,117.0 75.5,117.0 76.0,117.0 76.5,117.0 77.0,117.0 77.5,117.0 78.0,117.0 78.5,117.0 79.0,117.0 79.5,117.0 80.0,117.0 80.5,117.0 81.0,117.0 81.5,117.0 82.0,117.0 82.5,117.0 83.0,117.0 83.5,117.0 84.0,117.0 84.5,117.0 85.0,117.0 85.5,117.0 86.0,117.0 86.5,117.0 87.0,117.0 87.5,117.0 88.0,117.0 88.5,117.0 89.0,117.0 89.5,117.0 90.0,117.0 90.5,117.0 91.0,117.0 91.5,117.0 92.0,117.0 92.5,117.0 93.0,117.0 93.5,117.0 94.0,117.0 94.5,117.0 95.0,117.0 95.5,117.0 96.0,117.0 96.5,117.0 97.0,117.0 97.5,117.0 98.0,117.0 98.5,117.0 99.0,117.0 99.5,117.0 100.0,117.0 100.5,117.0 101.0,117.0 101.5,117.0 102.0,117.0 102.5,117.0 103.0,117.0 103.5,117.0 104.0,117.0 104.5,117.0 105.0,117.0 105.5,117.0 106.0,117.0 106.5,117.0 107.0,117.0 107.5,117.0 108.0,117.0 108.5,117.0 109.0,117.0 109.5,117.0 110.0,117.0 110.5,117.0 111.0,117.0 111.5,117.0 112.0,117.0 112.5,117.0 113.0,117.0 113.5,117.0 114.0,117.0 114.5,117.0 115.0,117.0 115.5,117.0 116.0,117.0 116.5,117.0 117.0,117.0 117.5,117.0 118.0,117.0 118.5,117.0 119.0,117.0 119.5,117.0 120.0,117.0 120.5,117.0 121.0,117.0 121.5,117.0 122.0,117.0 122.5,117.0 123.0,117.0 123.5,117.0 124.0,117.0 124.5,117.0 125.0,117.0 125.5,117.0 126.0,117.0 126.5,117.0 127.0,117.0 127.5,117.0 128.0,117.0 128.5,117.0 129.0,117.0 129.5,117.0 130.0,117.0 130.5,117.0 131.0,117.0 131.5,117.0 132.0,117.0 132.5,117.0 133.0,117.0 133.5,117.0 134.0,117.0 134.5,117.0 135.0,117.0 135.5,117.0 136.0,117.0 136.5,117.0 137.0,117.0 137.5,117.0 138.0,117.0 138.5,117.0 139.0,117.0 139.5,117.0 140.0,117.0 140.5,117.0 141.0,117.0 141.5,117.0 142.0,117.0 142.5,117.0 143.0,117.0 143.5,117.0 144.0,117.0 144.4,117.0 144.4,117.0 144.0,117.2 143.5,117.4 143.0,117.7 142.5,117.9 142.0,118.1 141.5,118.3 141.0,118.6 140.5,118.8 140.0,119.0 139.5,119.3 139.0,119.5 138.5,119.6 138.0,119.7 137.5,119.7 137.0,119.8 136.5,119.9 136.0,120.0 135.5,120.1 135.0,120.1 134.5,120.2 134.0,120.3 133.5,120.4 133.0,120.4 132.5,120.5 132.0,120.6 131.5,120.7 131.0,120.8 130.5,120.8 130.0,120.9 129.5,121.0 129.0,120.9 128.5,120.8 128.0,120.8 127.5,120.7 127.0,120.6 126.5,120.5 126.0,120.4 125.5,120.4 125.0,120.3 124.5,120.2 124.0,120.1 123.5,120.1 123.0,120.0 122.5,119.9 122.0,119.8 121.5,119.7 121.0,119.7 120.5,119.6 120.0,119.5 119.5,119.5 119.0,119.5 118.5,119.6 118.0,119.6 117.5,119.6 117.0,119.6 116.5,119.7 116.0,119.7 115.5,119.7 115.0,119.7 114.5,119.8 114.0,119.8 113.5,119.8 113.0,119.8 112.5,119.9 112.0,119.9 111.5,119.9 111.0,119.9 110.5,120.0 110.0,120.0 109.5,120.0 109.0,120.0 108.5,119.9 108.0,119.9 107.5,119.9 107.0,119.9 106.5,119.8 106.0,119.8 105.5,119.8 105.0,119.7 104.5,119.7 104.0,119.7 103.5,119.7 103.0,119.7 102.5,119.7 102.0,119.7 101.5,119.7 101.0,119.7 100.5,119.7 100.0,119.7 99.5,119.7 99.0,119.7 98.5,119.7 98.0,119.7 97.5,119.7 97.0,119.7 96.5,119.7 96.0,119.9 95.5,120.0 95.0,120.2 94.5,120.3 94.0,120.5 93.5,120.6 93.0,120.8 92.5,120.9 92.0,121.1 91.5,121.2 91.0,121.3 90.5,121.3 90.0,121.3 89.5,121.3 89.0,121.3 88.5,121.3 88.0,121.3 87.5,121.3 87.0,121.3 86.5,121.3 86.0,121.3 85.5,121.4 85.0,121.6 84.5,121.7 84.0,121.9 83.5,122.0 83.0,122.2 82.5,122.3 82.0,122.5 81.5,122.6 81.0,122.7 80.5,122.8 80.0,122.9 79.5,122.9 79.0,123.0 78.5,123.0 78.0,123.1 77.5,123.1 77.0,123.2 76.5,122.8 76.0,122.4 75.5,122.0 75.0,121.6 74.5,121.2 74.0,120.8 73.5,120.4 73.0,120.0 72.5,119.0 72.0,118.0 71.5,117.0" fill="#44DCDC"/>
<polygon points="144.4,117.0 144.5,117.0 145.0,117.0 145.5,117.0 146.0,117.0 146.5,117.0 147.0,117.0 147.5,117.0 148.0,117.0 148.5,117.0 149.0,117.0 149.5,117.0 150.0,117.0 150.5,117.0 151.0,117.0 151.5,117.0 152.0,117.0 152.5,117.0 153.0,117.0 153.5,117.0 154.0,117.0 154.5,117.0 155.0,117.0 155.5,117.0 156.0,117.0 156.5,117.0 157.0,117.0 157.5,117.0 157.8,117.0 157.8,117.0 157.5,116.8 157.0,116.6 156.5,116.3 156.0,116.3 155.5,116.3 155.0,116.3 154.5,116.4 154.0,116.4 153.5,116.4 153.0,116.4 152.5,116.4 152.0,116.4 151.5,116.4 151.0,116.4 150.5,116.5 150.0,116.5 149.5,116.5 149.0,116.5 148.5,116.5 148.0,116.5 147.5,116.5 147.0,116.6 146.5,116.6 146.0,116.6 145.5,116.6 145.0,116.7 144.5,117.0 144.4,117.0" fill="none" stroke="none"/>
<polygon points="157.8,117.0 158.0,117.0 158.5,117.0 159.0,117.0 159.5,117.0 160.0,117.0 160.5,117.0 161.0,117.0 161.5,117.0 162.0,117.0 162.5,117.0 163.0,117.0 163.5,117.0 164.0,117.0 164.5,117.0 165.0,117.0 165.5,117.0 166.0,117.0 166.5,117.0 167.0,117.0 167.5,117.0 168.0,117.0 168.5,117.0 169.0,117.0 169.5,117.0 170.0,117.0 170.5,117.0 171.0,117.0 171.5,117.0 172.0,117.0 172.5,117.0 173.0,117.0 173.5,117.0 174.0,117.0 174.5,117.0 175.0,117.0 175.5,117.0 176.0,117.0 176.5,117.0 177.0,117.0 177.2,117.0 177.2,117.0 177.0,117.1 176.5,117.3 176.0,117.5 175.5,117.7 175.0,117.9 174.5,118.1 174.0,118.3 173.5,118.5 173.0,118.7 172.5,118.9 172.0,119.1 171.5,119.2 171.0,119.3 170.5,119.4 170.0,119.5 169.5,119.7 169.0,119.8 168.5,119.9 168.0,120.0 167.5,120.1 167.0,120.2 166.5,120.2 166.0,120.1 165.5,120.0 165.0,119.8 164.5,119.7 164.0,119.5 163.5,119.4 163.0,119.2 162.5,119.1 162.0,118.9 161.5,118.8 161.0,118.6 160.5,118.4 160.0,118.1 159.5,117.9 159.0,117.6 158.5,117.3 158.0,117.1 157.8,117.0" fill="#44DCDC"/>
<polygon points="177.2,117.0 177.5,117.0 178.0,117.0 178.5,117.0 179.0,117.0 179.5,117.0 180.0,117.0 180.5,117.0 181.0,117.0 181.5,117.0 182.0,117.0 182.5,117.0 183.0,117.0 183.5,117.0 184.0,117.0 184.5,117.0 185.0,117.0 185.5,117.0 186.0,117.0 186.5,117.0 187.0,117.0 187.5,117.0 188.0,117.0 188.5,117.0 189.0,117.0 189.5,117.0 190.0,117.0 190.5,117.0 191.0,117.0 191.5,117.0 192.0,117.0 192.5,117.0 193.0,117.0 193.5,117.0 194.0,117.0 194.5,117.0 195.0,117.0 195.5,117.0 196.0,117.0 196.5,117.0 197.0,117.0 197.5,117.0 198.0,117.0 198.5,117.0 199.0,117.0 199.5,117.0 200.0,117.0 200.5,117.0 201.0,117.0 201.5,117.0 202.0,117.0 202.5,117.0 203.0,117.0 203.5,117.0 204.0,117.0 204.5,117.0 205.0,117.0 205.5,117.0 206.0,117.0 206.5,117.0 207.0,117.0 207.5,117.0 208.0,117.0 208.5,117.0 209.0,117.0 209.5,117.0 210.0,117.0 210.5,117.0 211.0,117.0 211.5,117.0 212.0,117.0 212.5,117.0 213.0,117.0 213.5,117.0 214.0,117.0 214.5,117.0 215.0,117.0 215.5,117.0 216.0,117.0 216.5,117.0 217.0,117.0 217.5,117.0 218.0,117.0 218.5,117.0 219.0,117.0 219.5,117.0 220.0,117.0 220.5,117.0 221.0,117.0 221.5,117.0 222.0,117.0 222.5,117.0 223.0,117.0 223.5,117.0 224.0,117.0 224.5,117.0 225.0,117.0 225.5,117.0 226.0,117.0 226.5,117.0 227.0,117.0 227.5,117.0 228.0,117.0 228.5,117.0 229.0,117.0 229.5,117.0 230.0,117.0 230.5,117.0 231.0,117.0 231.5,117.0 232.0,117.0 232.5,117.0 233.0,117.0 233.5,117.0 234.0,117.0 234.5,117.0 235.0,117.0 235.5,117.0 236.0,117.0 236.5,117.0 237.0,117.0 237.5,117.0 238.0,117.0 238.5,117.0 239.0,117.0 239.5,117.0 240.0,117.0 240.5,117.0 241.0,117.0 241.5,117.0 242.0,117.0 242.5,117.0 243.0,117.0 243.5,117.0 244.0,117.0 244.5,117.0 245.0,117.0 245.5,117.0 246.0,117.0 246.5,117.0 247.0,117.0 247.5,117.0 248.0,117.0 248.5,117.0 249.0,117.0 249.5,117.0 250.0,117.0 250.5,117.0 251.0,117.0 251.5,117.0 252.0,117.0 252.5,117.0 253.0,117.0 253.5,117.0 254.0,117.0 254.5,117.0 255.0,117.0 255.5,117.0 256.0,117.0 256.5,117.0 257.0,117.0 257.5,117.0 258.0,117.0 258.5,117.0 259.0,117.0 259.5,117.0 260.0,117.0 260.5,117.0 261.0,117.0 261.5,117.0 262.0,117.0 262.5,117.0 263.0,117.0 263.5,117.0 264.0,117.0 264.5,117.0 265.0,117.0 265.5,117.0 266.0,117.0 266.5,117.0 267.0,117.0 267.5,117.0 268.0,117.0 268.5,117.0 269.0,117.0 269.5,117.0 270.0,117.0 270.5,117.0 271.0,117.0 271.5,117.0 272.0,117.0 272.5,117.0 273.0,117.0 273.5,117.0 274.0,117.0 274.5,117.0 275.0,117.0 275.5,117.0 276.0,117.0 276.5,117.0 277.0,117.0 277.5,117.0 278.0,117.0 278.5,117.0 279.0,117.0 279.5,117.0 280.0,117.0 280.5,117.0 281.0,117.0 281.5,117.0 282.0,117.0 282.5,117.0 283.0,117.0 283.5,117.0 284.0,117.0 284.5,117.0 285.0,117.0 285.5,117.0 286.0,117.0 286.5,117.0 287.0,117.0 287.5,117.0 288.0,117.0 288.5,117.0 289.0,117.0 289.5,117.0 290.0,117.0 290.5,117.0 291.0,117.0 291.5,117.0 292.0,117.0 292.5,117.0 293.0,117.0 293.5,117.0 294.0,117.0 294.5,117.0 295.0,117.0 295.5,117.0 296.0,117.0 296.5,117.0 297.0,117.0 297.5,117.0 298.0,117.0 298.5,117.0 299.0,117.0 299.5,117.0 300.0,117.0 300.5,117.0 301.0,117.0 301.5,117.0 302.0,117.0 302.5,117.0 303.0,117.0 303.5,117.0 304.0,117.0 304.5,117.0 305.0,117.0 305.5,117.0 306.0,117.0 306.5,117.0 307.0,117.0 307.5,117.0 308.0,117.0 308.5,117.0 309.0,117.0 309.5,117.0 310.0,117.0 310.5,117.0 311.0,117.0 311.5,117.0 312.0,117.0 312.5,117.0 313.0,117.0 313.5,117.0 314.0,117.0 314.5,117.0 315.0,117.0 315.5,117.0 316.0,117.0 316.5,117.0 317.0,117.0 317.5,117.0 318.0,117.0 318.5,117.0 319.0,117.0 319.5,117.0 320.0,117.0 320.5,117.0 321.0,117.0 321.5,117.0 322.0,117.0 322.5,117.0 323.0,117.0 323.5,117.0 324.0,117.0 324.5,117.0 325.0,117.0 325.5,117.0 326.0,117.0 326.5,117.0 327.0,117.0 327.5,117.0 328.0,117.0 328.5,117.0 329.0,117.0 329.5,117.0 330.0,117.0 330.5,117.0 331.0,117.0 331.5,117.0 332.0,117.0 332.5,117.0 333.0,117.0 333.5,117.0 334.0,117.0 334.5,117.0 335.0,117.0 335.5,117.0 336.0,117.0 336.5,117.0 337.0,117.0 337.5,117.0 338.0,117.0 338.5,117.0 339.0,117.0 339.5,117.0 340.0,117.0 340.5,117.0 341.0,117.0 341.5,117.0 342.0,117.0 342.5,117.0 343.0,117.0 343.5,117.0 344.0,117.0 344.5,117.0 345.0,117.0 345.5,117.0 346.0,117.0 346.5,117.0 347.0,117.0 347.5,117.0 348.0,117.0 348.5,117.0 349.0,117.0 349.5,117.0 350.0,117.0 350.5,117.0 351.0,117.0 351.5,117.0 352.0,117.0 352.5,117.0 353.0,117.0 353.5,117.0 354.0,117.0 354.5,117.0 355.0,117.0 355.5,117.0 356.0,117.0 356.5,117.0 357.0,117.0 357.5,117.0 358.0,117.0 358.5,117.0 359.0,117.0 359.5,117.0 360.0,117.0 360.5,117.0 361.0,117.0 361.5,117.0 362.0,117.0 362.5,117.0 363.0,117.0 363.5,117.0 364.0,117.0 364.5,117.0 365.0,117.0 365.5,117.0 366.0,117.0 366.5,117.0 367.0,117.0 367.5,117.0 368.0,117.0 368.5,117.0 369.0,117.0 369.5,117.0 370.0,117.0 370.5,117.0 371.0,117.0 371.5,117.0 372.0,117.0 372.5,117.0 373.0,117.0 373.5,117.0 374.0,117.0 374.5,117.0 375.0,117.0 375.5,117.0 376.0,117.0 376.5,117.0 377.0,117.0 377.5,117.0 378.0,117.0 378.5,117.0 379.0,117.0 379.5,117.0 380.0,117.0 380.5,117.0 381.0,117.0 381.5,117.0 382.0,117.0 382.5,117.0 383.0,117.0 383.5,117.0 384.0,117.0 384.5,117.0 385.0,117.0 385.5,117.0 386.0,117.0 386.5,117.0 387.0,117.0 387.5,117.0 388.0,117.0 388.5,117.0 389.0,117.0 389.5,117.0 390.0,117.0 390.5,117.0 391.0,117.0 391.5,117.0 392.0,117.0 392.5,117.0 393.0,117.0 393.5,117.0 394.0,117.0 394.5,117.0 395.0,117.0 395.5,117.0 396.0,117.0 396.5,117.0 397.0,117.0 397.5,117.0 398.0,117.0 398.5,117.0 399.0,117.0 399.5,117.0 400.0,117.0 400.5,117.0 401.0,117.0 401.5,117.0 402.0,117.0 402.5,117.0 403.0,117.0 403.5,117.0 404.0,117.0 404.5,117.0 405.0,117.0 405.5,117.0 406.0,117.0 406.5,117.0 407.0,117.0 407.5,117.0 408.0,117.0 408.5,117.0 409.0,117.0 409.5,117.0 410.0,117.0 410.5,117.0 411.0,117.0 411.5,117.0 412.0,117.0 412.5,117.0 413.0,117.0 413.5,117.0 414.0,117.0 414.5,117.0 415.0,117.0 415.5,117.0 416.0,117.0 416.5,117.0 417.0,117.0 417.5,117.0 418.0,117.0 418.5,117.0 419.0,117.0 419.5,117.0 420.0,117.0 420.5,117.0 421.0,117.0 421.5,117.0 422.0,117.0 422.5,117.0 423.0,117.0 423.5,117.0 424.0,117.0 424.5,117.0 425.0,117.0 425.5,117.0 426.0,117.0 426.5,117.0 427.0,117.0 427.5,117.0 428.0,117.0 428.5,117.0 429.0,117.0 429.5,117.0 430.0,117.0 430.5,117.0 431.0,117.0 431.5,117.0 432.0,117.0 432.5,117.0 433.0,117.0 433.5,117.0 434.0,117.0 434.5,117.0 435.0,117.0 435.5,117.0 436.0,117.0 436.5,117.0 437.0,117.0 437.5,117.0 438.0,117.0 438.5,117.0 439.0,117.0 439.5,117.0 440.0,117.0 440.5,117.0 441.0,117.0 441.5,117.0 442.0,117.0 442.5,117.0 443.0,117.0 443.5,117.0 444.0,117.0 444.5,117.0 445.0,117.0 445.5,117.0 446.0,117.0 446.5,117.0 447.0,117.0 447.5,117.0 448.0,117.0 448.5,117.0 449.0,117.0 449.5,117.0 450.0,117.0 450.5,117.0 451.0,117.0 451.5,117.0 452.0,117.0 452.5,117.0 453.0,117.0 453.5,117.0 454.0,117.0 454.5,117.0 455.0,117.0 455.5,117.0 456.0,117.0 456.5,117.0 457.0,117.0 457.5,117.0 458.0,117.0 458.5,117.0 459.0,117.0 459.5,117.0 460.0,117.0 460.5,117.0 461.0,117.0 461.5,117.0 462.0,117.0 462.5,117.0 463.0,117.0 463.5,117.0 464.0,117.0 464.5,117.0 465.0,117.0 465.5,117.0 466.0,117.0 466.5,117.0 467.0,117.0 467.5,117.0 468.0,117.0 468.5,117.0 469.0,117.0 469.5,117.0 470.0,117.0 470.5,117.0 471.0,117.0 471.5,117.0 472.0,117.0 472.5,117.0 473.0,117.0 473.5,117.0 474.0,117.0 474.5,117.0 475.0,117.0 475.5,117.0 476.0,117.0 476.5,117.0 477.0,117.0 477.5,117.0 478.0,117.0 478.5,117.0 479.0,117.0 479.5,117.0 480.0,117.0 480.5,117.0 481.0,117.0 481.5,117.0 482.0,117.0 482.5,117.0 483.0,117.0 483.5,117.0 484.0,117.0 484.5,117.0 485.0,117.0 485.5,117.0 486.0,117.0 486.5,117.0 487.0,117.0 487.5,117.0 488.0,117.0 488.5,117.0 489.0,117.0 489.5,117.0 490.0,117.0 490.5,117.0 491.0,117.0 491.5,117.0 492.0,117.0 492.5,117.0 493.0,117.0 493.5,117.0 494.0,117.0 494.5,117.0 495.0,117.0 495.5,117.0 496.0,117.0 496.5,117.0 497.0,117.0 497.5,117.0 498.0,117.0 498.5,117.0 499.0,117.0 499.5,117.0 500.0,117.0 500.5,117.0 501.0,117.0 501.5,117.0 502.0,117.0 502.5,117.0 503.0,117.0 503.5,117.0 504.0,117.0 504.5,117.0 505.0,117.0 505.5,117.0 506.0,117.0 506.5,117.0 507.0,117.0 507.5,117.0 508.0,117.0 508.5,117.0 509.0,117.0 509.5,117.0 510.0,117.0 510.5,117.0 511.0,117.0 511.5,117.0 512.0,117.0 512.5,117.0 513.0,117.0 513.5,117.0 514.0,117.0 514.5,117.0 515.0,117.0 515.5,117.0 516.0,117.0 516.5,117.0 517.0,117.0 517.5,117.0 518.0,117.0 518.5,117.0 519.0,117.0 519.5,117.0 520.0,117.0 520.5,117.0 521.0,117.0 521.5,117.0 522.0,117.0 522.5,117.0 523.0,117.0 523.5,117.0 524.0,117.0 524.5,117.0 525.0,117.0 525.5,117.0 526.0,117.0 526.5,117.0 527.0,117.0 527.5,117.0 528.0,117.0 528.5,117.0 529.0,117.0 529.5,117.0 530.0,117.0 530.5,117.0 531.0,117.0 531.5,117.0 532.0,117.0 532.5,117.0 533.0,117.0 533.5,117.0 534.0,117.0 534.5,117.0 535.0,117.0 535.5,117.0 536.0,117.0 536.5,117.0 537.0,117.0 537.5,117.0 538.0,117.0 538.5,117.0 539.0,117.0 539.5,117.0 540.0,117.0 540.5,117.0 541.0,117.0 541.5,117.0 542.0,117.0 542.5,117.0 543.0,117.0 543.5,117.0 544.0,117.0 544.5,117.0 545.0,117.0 545.5,117.0 546.0,117.0 546.5,117.0 547.0,117.0 547.5,117.0 548.0,117.0 548.5,117.0 549.0,117.0 549.5,117.0 550.0,117.0 550.5,117.0 551.0,117.0 551.5,117.0 552.0,117.0 552.5,117.0 553.0,117.0 553.5,117.0 554.0,117.0 554.5,117.0 555.0,117.0 555.5,117.0 556.0,117.0 556.5,117.0 557.0,117.0 557.5,117.0 558.0,117.0 558.5,117.0 559.0,117.0 559.5,117.0 560.0,117.0 560.5,117.0 561.0,117.0 561.5,117.0 562.0,117.0 562.5,117.0 563.0,117.0 563.5,117.0 564.0,117.0 564.5,117.0 565.0,117.0 565.5,117.0 566.0,117.0 566.5,117.0 567.0,117.0 567.5,117.0 568.0,117.0 568.5,117.0 569.0,117.0 569.5,117.0 570.0,117.0 570.5,117.0 571.0,117.0 571.5,117.0 572.0,117.0 572.5,117.0 573.0,117.0 573.5,117.0 574.0,117.0 574.5,117.0 575.0,117.0 575.5,117.0 576.0,117.0 576.5,117.0 577.0,117.0 577.5,117.0 578.0,117.0 578.5,117.0 579.0,117.0 579.5,117.0 580.0,117.0 580.5,117.0 581.0,117.0 581.5,117.0 582.0,117.0 582.5,117.0 583.0,117.0 583.5,117.0 584.0,117.0 584.5,117.0 585.0,117.0 585.5,117.0 586.0,117.0 586.5,117.0 587.0,117.0 587.5,117.0 588.0,117.0 588.5,117.0 589.0,117.0 589.5,117.0 590.0,117.0 590.5,117.0 591.0,117.0 591.5,117.0 592.0,117.0 592.5,117.0 593.0,117.0 593.5,117.0 594.0,117.0 594.5,117.0 595.0,117.0 595.5,117.0 596.0,117.0 596.5,117.0 597.0,117.0 597.5,117.0 598.0,117.0 598.5,117.0 599.0,117.0 599.5,117.0 600.0,117.0 600.5,117.0 601.0,117.0 601.5,117.0 602.0,117.0 602.5,117.0 603.0,117.0 603.5,117.0 604.0,117.0 604.5,117.0 605.0,117.0 605.5,117.0 606.0,117.0 606.5,117.0 607.0,117.0 607.5,117.0 608.0,117.0 608.5,117.0 609.0,117.0 609.5,117.0 610.0,117.0 610.5,117.0 611.0,117.0 611.5,117.0 612.0,117.0 612.5,117.0 613.0,117.0 613.5,117.0 614.0,117.0 614.5,117.0 615.0,117.0 615.5,117.0 616.0,117.0 616.5,117.0 617.0,117.0 617.5,117.0 618.0,117.0 618.5,117.0 619.0,117.0 619.5,117.0 620.0,117.0 620.5,117.0 621.0,117.0 621.5,117.0 622.0,117.0 622.5,117.0 623.0,117.0 623.5,117.0 624.0,117.0 624.5,117.0 625.0,117.0 625.5,117.0 626.0,117.0 626.5,117.0 627.0,117.0 627.5,117.0 628.0,117.0 628.5,117.0 629.0,117.0 629.5,117.0 630.0,117.0 630.5,117.0 631.0,117.0 631.5,117.0 632.0,117.0 632.5,117.0 633.0,117.0 633.5,117.0 634.0,117.0 634.5,117.0 635.0,117.0 635.5,117.0 636.0,117.0 636.5,117.0 637.0,117.0 637.5,117.0 638.0,117.0 638.5,117.0 639.0,117.0 639.5,117.0 640.0,117.0 640.5,117.0 641.0,117.0 641.5,117.0 642.0,117.0 642.5,117.0 643.0,117.0 643.5,117.0 644.0,117.0 644.5,117.0 645.0,117.0 645.5,117.0 646.0,117.0 646.5,117.0 647.0,117.0 647.5,117.0 648.0,117.0 648.5,117.0 649.0,117.0 649.5,117.0 650.0,117.0 650.5,117.0 651.0,117.0 651.5,117.0 652.0,117.0 652.5,117.0 653.0,117.0 653.5,117.0 654.0,117.0 654.5,117.0 655.0,117.0 655.5,117.0 656.0,117.0 656.5,117.0 657.0,117.0 657.5,117.0 658.0,117.0 658.5,117.0 659.0,117.0 659.5,117.0 660.0,117.0 660.5,117.0 661.0,117.0 661.5,117.0 662.0,117.0 662.5,117.0 663.0,117.0 663.5,117.0 664.0,117.0 664.5,117.0 665.0,117.0 665.5,117.0 666.0,117.0 666.5,117.0 667.0,117.0 667.5,117.0 668.0,117.0 668.5,117.0 669.0,117.0 669.5,117.0 670.0,117.0 670.5,117.0 671.0,117.0 671.5,117.0 672.0,117.0 672.5,117.0 673.0,117.0 673.5,117.0 674.0,117.0 674.5,117.0 675.0,117.0 675.5,117.0 676.0,117.0 676.5,117.0 677.0,117.0 677.5,117.0 678.0,117.0 678.5,117.0 679.0,117.0 679.5,117.0 680.0,117.0 680.5,117.0 681.0,117.0 681.5,117.0 682.0,117.0 682.5,117.0 683.0,117.0 683.5,117.0 684.0,117.0 684.5,117.0 685.0,117.0 685.5,117.0 686.0,117.0 686.5,117.0 687.0,117.0 687.5,117.0 688.0,117.0 688.5,117.0 689.0,117.0 689.5,117.0 690.0,117.0 690.5,117.0 691.0,117.0 691.5,117.0 692.0,117.0 692.5,117.0 693.0,117.0 693.5,117.0 694.0,117.0 694.5,117.0 695.0,117.0 695.5,117.0 696.0,117.0 696.5,117.0 697.0,117.0 697.5,117.0 698.0,117.0 698.5,117.0 699.0,117.0 699.5,117.0 700.0,117.0 700.5,117.0 701.0,117.0 701.5,117.0 702.0,117.0 702.5,117.0 703.0,117.0 703.5,117.0 704.0,117.0 704.5,117.0 705.0,117.0 705.5,117.0 706.0,117.0 706.5,117.0 707.0,117.0 707.5,117.0 708.0,117.0 708.5,117.0 709.0,117.0 709.5,117.0 710.0,117.0 710.5,117.0 711.0,117.0 711.5,117.0 712.0,117.0 712.5,117.0 713.0,117.0 713.5,117.0 714.0,117.0 714.5,117.0 715.0,117.0 715.5,117.0 716.0,117.0 716.5,117.0 717.0,117.0 717.5,117.0 718.0,117.0 718.5,117.0 719.0,117.0 719.5,117.0 720.0,117.0 720.5,117.0 721.0,117.0 721.5,117.0 722.0,117.0 722.5,117.0 723.0,117.0 723.5,117.0 724.0,117.0 724.5,117.0 725.0,117.0 725.5,117.0 726.0,117.0 726.5,117.0 727.0,117.0 727.5,117.0 728.0,117.0 728.5,117.0 729.0,117.0 729.5,117.0 730.0,117.0 730.5,117.0 731.0,117.0 731.5,117.0 732.0,117.0 732.5,117.0 733.0,117.0 733.5,117.0 734.0,117.0 734.5,117.0 735.0,117.0 735.5,117.0 736.0,117.0 736.5,117.0 737.0,117.0 737.5,117.0 738.0,117.0 738.5,117.0 739.0,117.0 739.5,117.0 740.0,117.0 740.5,117.0 741.0,117.0 741.5,117.0 742.0,117.0 742.5,117.0 743.0,117.0 743.5,117.0 744.0,117.0 744.5,117.0 745.0,117.0 745.5,117.0 746.0,117.0 746.5,117.0 747.0,117.0 747.5,117.0 748.0,117.0 748.5,117.0 749.0,117.0 749.5,117.0 750.0,117.0 750.5,117.0 751.0,117.0 751.5,117.0 752.0,117.0 752.5,117.0 753.0,117.0 753.5,117.0 754.0,117.0 754.5,117.0 755.0,117.0 755.5,117.0 756.0,117.0 756.5,117.0 757.0,117.0 757.5,117.0 758.0,117.0 758.5,117.0 759.0,117.0 759.5,117.0 760.0,117.0 760.5,117.0 761.0,117.0 761.5,117.0 762.0,117.0 762.5,117.0 763.0,117.0 763.3,117.0 763.3,117.0 763.0,116.8 762.5,116.4 762.0,116.0 761.5,115.7 761.0,115.3 760.5,114.9 760.0,114.6 759.5,114.2 759.0,113.9 758.5,113.5 758.0,113.1 757.5,112.6 757.0,112.2 756.5,111.7 756.0,111.2 755.5,110.7 755.0,110.3 754.5,109.8 754.0,109.3 753.5,108.9 753.0,108.4 752.5,108.0 752.0,107.7 751.5,107.4 751.0,107.1 750.5,106.7 750.0,106.4 749.5,106.1 749.0,105.8 748.5,105.5 748.0,105.2 747.5,104.9 747.0,104.6 746.5,104.3 746.0,104.0 745.5,103.7 745.0,104.0 744.5,104.6 744.0,105.1 743.5,105.7 743.0,106.2 742.5,106.8 742.0,107.3 741.5,107.9 741.0,108.4 740.5,109.0 740.0,109.5 739.5,109.6 739.0,109.8 738.5,109.9 738.0,110.1 737.5,110.2 737.0,110.4 736.5,110.5 736.0,110.7 735.5,110.8 735.0,111.0 734.5,111.1 734.0,111.3 733.5,111.4 733.0,111.3 732.5,111.1 732.0,111.0 731.5,110.9 731.0,110.8 730.5,110.7 730.0,110.5 729.5,110.4 729.0,110.3 728.5,110.2 728.0,110.1 727.5,109.9 727.0,109.7 726.5,109.3 726.0,109.0 725.5,108.6 725.0,108.3 724.5,107.9 724.0,107.6 723.5,107.2 723.0,106.9 722.5,106.5 722.0,106.2 721.5,105.8 721.0,105.5 720.5,105.1 720.0,104.8 719.5,104.7 719.0,104.6 718.5,104.5 718.0,104.4 717.5,104.3 717.0,104.1 716.5,104.0 716.0,103.9 715.5,103.8 715.0,103.7 714.5,103.6 714.0,103.5 713.5,103.4 713.0,103.3 712.5,103.2 712.0,103.1 711.5,103.0 711.0,102.8 710.5,102.7 710.0,102.6 709.5,102.5 709.0,102.5 708.5,102.6 708.0,102.6 707.5,102.7 707.0,102.7 706.5,102.8 706.0,102.8 705.5,102.8 705.0,102.9 704.5,102.9 704.0,103.0 703.5,103.0 703.0,103.1 702.5,103.1 702.0,103.2 701.5,103.2 701.0,103.6 700.5,104.1 700.0,104.5 699.5,104.9 699.0,105.4 698.5,105.8 698.0,105.9 697.5,105.7 697.0,105.5 696.5,105.4 696.0,105.2 695.5,105.0 695.0,104.8 694.5,104.7 694.0,104.5 693.5,104.3 693.0,104.1 692.5,103.9 692.0,103.8 691.5,103.6 691.0,103.4 690.5,103.2 690.0,102.8 689.5,102.4 689.0,101.9 688.5,101.4 688.0,100.9 687.5,100.5 687.0,100.0 686.5,99.5 686.0,99.0 685.5,98.6 685.0,98.1 684.5,97.6 684.0,97.2 683.5,96.7 683.0,95.8 682.5,94.7 682.0,93.6 681.5,92.6 681.0,91.5 680.5,90.4 680.0,89.3 679.5,88.2 679.0,87.1 678.5,86.0 678.0,84.9 677.5,83.8 677.0,82.7 676.5,81.6 676.0,80.4 675.5,79.2 675.0,77.9 674.5,76.7 674.0,75.4 673.5,74.1 673.0,72.9 672.5,71.6 672.0,70.4 671.5,69.1 671.0,67.8 670.5,66.6 670.0,65.3 669.5,64.6 669.0,64.4 668.5,64.1 668.0,63.8 667.5,63.5 667.0,63.2 666.5,63.0 666.0,63.0 665.5,63.0 665.0,62.9 664.5,62.9 664.0,62.9 663.5,62.9 663.0,62.8 662.5,62.8 662.0,62.8 661.5,62.8 661.0,62.7 660.5,62.7 660.0,62.7 659.5,62.7 659.0,62.7 658.5,62.6 658.0,62.6 657.5,62.6 657.0,62.6 656.5,62.5 656.0,62.5 655.5,62.5 655.0,62.4 654.5,62.4 654.0,62.3 653.5,62.2 653.0,62.2 652.5,62.1 652.0,62.1 651.5,62.0 651.0,61.9 650.5,61.9 650.0,61.8 649.5,61.7 649.0,61.5 648.5,61.1 648.0,60.6 647.5,60.2 647.0,59.7 646.5,59.3 646.0,58.9 645.5,58.4 645.0,58.0 644.5,57.5 644.0,57.1 643.5,56.6 643.0,56.2 642.5,55.7 642.0,55.2 641.5,54.7 641.0,54.2 640.5,53.8 640.0,53.3 639.5,52.8 639.0,52.3 638.5,51.8 638.0,51.2 637.5,50.4 637.0,49.6 636.5,48.7 636.0,47.9 635.5,47.0 635.0,46.2 634.5,45.3 634.0,44.5 633.5,43.7 633.0,43.5 632.5,43.4 632.0,43.4 631.5,43.4 631.0,43.3 630.5,43.3 630.0,43.2 629.5,43.2 629.0,43.2 628.5,43.1 628.0,43.1 627.5,43.0 627.0,43.0 626.5,43.0 626.0,42.9 625.5,42.9 625.0,42.8 624.5,42.8 624.0,42.7 623.5,42.7 623.0,42.6 622.5,42.6 622.0,42.5 621.5,42.5 621.0,42.4 620.5,42.5 620.0,42.8 619.5,43.1 619.0,43.3 618.5,43.6 618.0,43.9 617.5,44.2 617.0,44.4 616.5,44.7 616.0,45.0 615.5,45.4 615.0,45.8 614.5,46.2 614.0,46.5 613.5,46.9 613.0,47.3 612.5,47.7 612.0,48.1 611.5,48.5 611.0,48.7 610.5,48.8 610.0,48.9 609.5,49.0 609.0,49.0 608.5,49.1 608.0,49.2 607.5,49.3 607.0,49.3 606.5,49.4 606.0,49.5 605.5,49.6 605.0,49.6 604.5,49.7 604.0,49.8 603.5,49.8 603.0,49.8 602.5,49.8 602.0,49.8 601.5,49.8 601.0,49.8 600.5,49.8 600.0,49.8 599.5,49.8 599.0,49.8 598.5,49.8 598.0,49.8 597.5,49.8 597.0,49.8 596.5,49.8 596.0,49.8 595.5,49.8 595.0,49.6 594.5,49.4 594.0,49.1 593.5,48.9 593.0,48.6 592.5,48.4 592.0,48.1 591.5,47.9 591.0,47.6 590.5,47.4 590.0,47.4 589.5,47.4 589.0,47.4 588.5,47.4 588.0,47.4 587.5,47.4 587.0,47.4 586.5,47.4 586.0,47.4 585.5,47.5 585.0,47.6 584.5,47.8 584.0,47.9 583.5,48.1 583.0,48.2 582.5,48.4 582.0,48.5 581.5,48.7 581.0,48.8 580.5,48.9 580.0,48.8 579.5,48.4 579.0,48.0 578.5,47.6 578.0,47.2 577.5,46.8 577.0,46.4 576.5,46.1 576.0,45.7 575.5,45.3 575.0,44.9 574.5,44.5 574.0,44.1 573.5,43.7 573.0,43.5 572.5,43.5 572.0,43.5 571.5,43.5 571.0,43.5 570.5,43.5 570.0,43.5 569.5,43.7 569.0,43.8 568.5,44.0 568.0,44.2 567.5,44.4 567.0,44.5 566.5,44.7 566.0,44.9 565.5,45.1 565.0,45.2 564.5,45.4 564.0,45.6 563.5,45.7 563.0,45.9 562.5,46.1 562.0,46.3 561.5,46.4 561.0,46.6 560.5,47.0 560.0,47.4 559.5,47.9 559.0,48.3 558.5,48.7 558.0,49.1 557.5,49.5 557.0,49.9 556.5,50.4 556.0,51.0 555.5,52.1 555.0,53.1 554.5,54.2 554.0,55.2 553.5,56.3 553.0,57.3 552.5,58.4 552.0,59.4 551.5,60.5 551.0,61.5 550.5,62.6 550.0,63.6 549.5,64.7 549.0,65.7 548.5,66.8 548.0,67.4 547.5,67.8 547.0,68.2 546.5,68.5 546.0,68.9 545.5,69.3 545.0,69.8 544.5,70.6 544.0,71.5 543.5,72.3 543.0,73.2 542.5,74.1 542.0,74.9 541.5,75.8 541.0,76.6 540.5,77.5 540.0,78.3 539.5,79.2 539.0,80.0 538.5,80.9 538.0,81.8 537.5,82.6 537.0,83.5 536.5,84.3 536.0,85.2 535.5,86.0 535.0,86.9 534.5,87.7 534.0,88.6 533.5,88.9 533.0,89.1 532.5,89.4 532.0,89.6 531.5,89.9 531.0,90.1 530.5,90.4 530.0,90.6 529.5,90.9 529.0,91.1 528.5,91.4 528.0,91.6 527.5,92.0 527.0,92.6 526.5,93.2 526.0,93.8 525.5,94.4 525.0,95.0 524.5,95.5 524.0,96.1 523.5,96.7 523.0,97.3 522.5,96.9 522.0,96.5 521.5,96.1 521.0,95.7 520.5,95.3 520.0,94.9 519.5,94.5 519.0,94.2 518.5,93.8 518.0,93.4 517.5,93.0 517.0,92.6 516.5,92.2 516.0,91.8 515.5,91.4 515.0,91.0 514.5,90.6 514.0,90.1 513.5,89.7 513.0,89.2 512.5,88.8 512.0,88.3 511.5,87.9 511.0,87.4 510.5,87.0 510.0,86.6 509.5,86.1 509.0,85.7 508.5,85.1 508.0,84.3 507.5,83.4 507.0,82.6 506.5,81.8 506.0,81.0 505.5,80.2 505.0,79.4 504.5,78.5 504.0,77.7 503.5,76.9 503.0,76.1 502.5,75.3 502.0,74.8 501.5,74.5 501.0,74.2 500.5,73.9 500.0,73.5 499.5,73.2 499.0,72.9 498.5,72.6 498.0,72.3 497.5,71.8 497.0,71.1 496.5,70.3 496.0,69.5 495.5,68.8 495.0,68.0 494.5,67.3 494.0,66.5 493.5,65.7 493.0,65.0 492.5,64.3 492.0,63.8 491.5,63.2 491.0,62.6 490.5,62.0 490.0,61.5 489.5,60.9 489.0,60.3 488.5,59.8 488.0,59.2 487.5,59.0 487.0,58.7 486.5,58.5 486.0,58.2 485.5,58.0 485.0,57.7 484.5,57.5 484.0,57.2 483.5,57.0 483.0,56.7 482.5,56.5 482.0,56.2 481.5,56.0 481.0,55.7 480.5,55.5 480.0,55.4 479.5,55.7 479.0,55.9 478.5,56.2 478.0,56.4 477.5,56.7 477.0,56.9 476.5,57.2 476.0,57.4 475.5,57.7 475.0,57.9 474.5,58.2 474.0,58.4 473.5,59.6 473.0,61.0 472.5,62.3 472.0,63.7 471.5,65.1 471.0,66.4 470.5,67.8 470.0,69.2 469.5,70.5 469.0,71.9 468.5,73.3 468.0,74.6 467.5,76.0 467.0,77.0 466.5,78.0 466.0,79.0 465.5,80.0 465.0,81.0 464.5,82.0 464.0,83.0 463.5,84.0 463.0,85.0 462.5,86.0 462.0,87.0 461.5,88.0 461.0,88.9 460.5,89.8 460.0,90.7 459.5,91.5 459.0,92.4 458.5,93.3 458.0,94.2 457.5,95.0 457.0,95.9 456.5,96.8 456.0,97.6 455.5,98.5 455.0,99.4 454.5,100.2 454.0,101.0 453.5,101.8 453.0,102.6 452.5,103.5 452.0,104.3 451.5,105.1 451.0,105.9 450.5,106.7 450.0,107.5 449.5,108.4 449.0,109.2 448.5,110.0 448.0,110.2 447.5,110.3 447.0,110.5 446.5,110.7 446.0,110.9 445.5,111.0 445.0,111.2 444.5,111.4 444.0,111.5 443.5,111.8 443.0,112.1 442.5,112.4 442.0,112.7 441.5,113.0 441.0,113.2 440.5,113.5 440.0,113.8 439.5,114.1 439.0,114.4 438.5,114.7 438.0,115.0 437.5,115.3 437.0,115.6 436.5,115.9 436.0,116.2 435.5,116.2 435.0,115.9 434.5,115.7 434.0,115.4 433.5,115.2 433.0,114.9 432.5,114.7 432.0,114.4 431.5,114.2 431.0,113.9 430.5,113.7 430.0,113.4 429.5,113.2 429.0,112.9 428.5,112.7 428.0,112.4 427.5,112.2 427.0,111.9 426.5,111.7 426.0,111.5 425.5,111.3 425.0,111.1 424.5,110.9 424.0,110.7 423.5,110.5 423.0,110.3 422.5,110.2 422.0,110.0 421.5,109.8 421.0,109.6 420.5,109.4 420.0,109.2 419.5,109.0 419.0,108.7 418.5,108.5 418.0,108.3 417.5,108.1 417.0,107.8 416.5,107.6 416.0,107.4 415.5,107.2 415.0,106.9 414.5,106.7 414.0,106.5 413.5,106.3 413.0,106.0 412.5,105.8 412.0,105.6 411.5,105.4 411.0,105.1 410.5,104.9 410.0,104.7 409.5,104.4 409.0,104.2 408.5,103.9 408.0,103.6 407.5,103.3 407.0,103.1 406.5,102.8 406.0,102.5 405.5,102.2 405.0,101.9 404.5,101.7 404.0,101.4 403.5,101.1 403.0,100.8 402.5,100.5 402.0,100.3 401.5,100.0 401.0,99.7 400.5,99.4 400.0,99.1 399.5,98.9 399.0,98.6 398.5,98.3 398.0,98.0 397.5,97.7 397.0,97.5 396.5,97.2 396.0,97.0 395.5,96.7 395.0,96.5 394.5,96.2 394.0,96.0 393.5,95.7 393.0,95.5 392.5,95.2 392.0,95.0 391.5,95.4 391.0,95.8 390.5,96.2 390.0,96.6 389.5,97.0 389.0,97.4 388.5,97.8 388.0,98.2 387.5,98.7 387.0,98.8 386.5,98.4 386.0,98.0 385.5,97.7 385.0,97.3 384.5,97.0 384.0,96.6 383.5,96.3 383.0,95.9 382.5,95.6 382.0,95.2 381.5,94.8 381.0,94.5 380.5,94.1 380.0,93.8 379.5,93.4 379.0,93.1 378.5,92.7 378.0,92.4 377.5,92.0 377.0,91.6 376.5,91.3 376.0,90.9 375.5,90.6 375.0,90.3 374.5,90.0 374.0,89.7 373.5,89.3 373.0,89.0 372.5,88.7 372.0,88.4 371.5,88.1 371.0,87.8 370.5,87.4 370.0,87.1 369.5,86.7 369.0,86.3 368.5,85.9 368.0,85.5 367.5,85.1 367.0,84.7 366.5,84.2 366.0,83.8 365.5,83.4 365.0,83.0 364.5,83.4 364.0,83.9 363.5,84.3 363.0,84.7 362.5,85.1 362.0,85.6 361.5,86.0 361.0,86.4 360.5,86.8 360.0,87.3 359.5,87.8 359.0,88.3 358.5,88.8 358.0,89.3 357.5,89.8 357.0,90.4 356.5,90.9 356.0,91.4 355.5,91.9 355.0,92.4 354.5,92.9 354.0,93.4 353.5,92.9 353.0,92.4 352.5,91.9 352.0,91.4 351.5,90.9 351.0,90.4 350.5,89.9 350.0,89.4 349.5,88.9 349.0,88.3 348.5,87.7 348.0,87.1 347.5,86.5 347.0,85.8 346.5,85.2 346.0,84.6 345.5,84.0 345.0,83.3 344.5,82.7 344.0,82.1 343.5,81.5 343.0,80.8 342.5,80.1 342.0,79.2 341.5,78.4 341.0,77.6 340.5,76.8 340.0,76.0 339.5,75.2 339.0,74.4 338.5,73.6 338.0,72.8 337.5,72.0 337.0,71.2 336.5,70.5 336.0,69.7 335.5,68.9 335.0,68.1 334.5,67.3 334.0,66.5 333.5,65.8 333.0,65.7 332.5,65.8 332.0,65.8 331.5,65.9 331.0,66.0 330.5,66.1 330.0,66.2 329.5,66.2 329.0,66.3 328.5,66.5 328.0,67.2 327.5,67.8 327.0,68.4 326.5,69.1 326.0,69.7 325.5,70.3 325.0,71.0 324.5,71.6 324.0,72.2 323.5,72.9 323.0,73.5 322.5,74.1 322.0,74.4 321.5,74.4 321.0,74.4 320.5,74.4 320.0,74.4 319.5,74.4 319.0,74.4 318.5,74.4 318.0,74.4 317.5,74.4 317.0,74.4 316.5,74.4 316.0,74.4 315.5,74.4 315.0,74.4 314.5,74.4 314.0,74.4 313.5,74.4 313.0,74.4 312.5,74.2 312.0,73.9 311.5,73.5 311.0,73.2 310.5,72.9 310.0,72.5 309.5,72.2 309.0,71.8 308.5,71.5 308.0,71.2 307.5,70.8 307.0,70.5 306.5,70.2 306.0,69.8 305.5,69.5 305.0,69.1 304.5,68.8 304.0,68.5 303.5,68.1 303.0,67.9 302.5,67.9 302.0,67.8 301.5,67.7 301.0,67.6 300.5,67.5 300.0,67.4 299.5,67.4 299.0,67.3 298.5,67.2 298.0,67.1 297.5,67.0 297.0,66.9 296.5,66.9 296.0,66.8 295.5,66.7 295.0,66.6 294.5,66.5 294.0,66.4 293.5,66.2 293.0,65.9 292.5,65.6 292.0,65.3 291.5,65.0 291.0,64.7 290.5,64.4 290.0,64.1 289.5,63.8 289.0,63.5 288.5,63.2 288.0,62.9 287.5,62.6 287.0,62.0 286.5,61.3 286.0,60.6 285.5,59.9 285.0,59.2 284.5,58.6 284.0,57.9 283.5,57.2 283.0,56.5 282.5,55.8 282.0,55.2 281.5,54.5 281.0,53.8 280.5,53.5 280.0,53.3 279.5,53.0 279.0,52.8 278.5,52.5 278.0,52.3 277.5,52.0 277.0,51.8 276.5,51.5 276.0,51.7 275.5,52.2 275.0,52.7 274.5,53.2 274.0,53.7 273.5,54.2 273.0,54.7 272.5,55.2 272.0,55.7 271.5,56.2 271.0,56.7 270.5,57.2 270.0,57.7 269.5,58.0 269.0,58.2 268.5,58.5 268.0,58.8 267.5,59.0 267.0,59.3 266.5,59.6 266.0,59.8 265.5,60.7 265.0,62.4 264.5,64.1 264.0,65.8 263.5,67.5 263.0,69.2 262.5,70.9 262.0,72.6 261.5,74.3 261.0,76.0 260.5,77.6 260.0,79.2 259.5,80.8 259.0,82.4 258.5,84.0 258.0,85.6 257.5,87.2 257.0,88.8 256.5,90.4 256.0,92.0 255.5,93.6 255.0,95.2 254.5,96.7 254.0,97.6 253.5,98.6 253.0,99.6 252.5,100.5 252.0,101.5 251.5,102.4 251.0,103.4 250.5,104.3 250.0,105.3 249.5,106.2 249.0,107.2 248.5,108.2 248.0,109.1 247.5,110.1 247.0,111.0 246.5,111.7 246.0,111.9 245.5,112.1 245.0,112.3 244.5,112.5 244.0,112.7 243.5,113.0 243.0,113.2 242.5,113.4 242.0,113.6 241.5,113.6 241.0,113.5 240.5,113.5 240.0,113.5 239.5,113.4 239.0,113.4 238.5,113.4 238.0,113.3 237.5,113.3 237.0,113.3 236.5,113.3 236.0,113.2 235.5,113.2 235.0,113.2 234.5,113.1 234.0,113.1 233.5,113.1 233.0,113.0 232.5,113.0 232.0,113.0 231.5,112.9 231.0,112.9 230.5,112.9 230.0,112.8 229.5,112.8 229.0,112.8 228.5,112.8 228.0,112.7 227.5,112.7 227.0,112.6 226.5,112.6 226.0,112.6 225.5,112.5 225.0,112.5 224.5,112.4 224.0,112.4 223.5,112.3 223.0,112.3 222.5,112.2 222.0,112.2 221.5,112.2 221.0,112.1 220.5,112.1 220.0,112.0 219.5,112.0 219.0,111.9 218.5,111.9 218.0,111.9 217.5,111.8 217.0,111.8 216.5,111.7 216.0,111.7 215.5,111.6 215.0,111.6 214.5,110.3 214.0,109.0 213.5,107.6 213.0,106.3 212.5,105.0 212.0,103.7 211.5,102.4 211.0,101.1 210.5,99.7 210.0,98.4 209.5,97.1 209.0,95.8 208.5,94.7 208.0,93.8 207.5,92.9 207.0,92.0 206.5,91.2 206.0,90.3 205.5,89.4 205.0,88.5 204.5,87.7 204.0,86.8 203.5,85.9 203.0,85.8 202.5,86.9 202.0,87.9 201.5,89.0 201.0,90.1 200.5,91.1 200.0,92.2 199.5,93.3 199.0,94.3 198.5,95.4 198.0,96.4 197.5,97.4 197.0,98.1 196.5,98.7 196.0,99.4 195.5,100.0 195.0,100.7 194.5,101.3 194.0,102.0 193.5,102.6 193.0,103.3 192.5,103.9 192.0,104.6 191.5,105.3 191.0,105.9 190.5,106.6 190.0,107.2 189.5,107.8 189.0,108.2 188.5,108.7 188.0,109.1 187.5,109.6 187.0,110.0 186.5,110.4 186.0,110.9 185.5,111.3 185.0,111.8 184.5,112.2 184.0,112.7 183.5,113.1 183.0,113.4 182.5,113.7 182.0,114.1 181.5,114.4 181.0,114.7 180.5,115.0 180.0,115.3 179.5,115.6 179.0,115.9 178.5,116.2 178.0,116.5 177.5,116.8 177.2,117.0" fill="none" stroke="none"/>
<polygon points="763.3,117.0 763.5,117.0 764.0,117.0 764.5,117.0 765.0,117.0 765.5,117.0 766.0,117.0 766.5,117.0 767.0,117.0 767.5,117.0 768.0,117.0 768.5,117.0 769.0,117.0 769.5,117.0 770.0,117.0 770.5,117.0 771.0,117.0 771.5,117.0 772.0,117.0 772.5,117.0 773.0,117.0 773.5,117.0 774.0,117.0 774.5,117.0 774.7,117.0 774.7,117.0 774.5,117.2 774.0,117.5 773.5,117.7 773.0,118.0 772.5,118.2 772.0,118.5 771.5,118.7 771.0,119.0 770.5,119.2 770.0,119.5 769.5,119.7 769.0,120.0 768.5,119.7 768.0,119.5 767.5,119.2 767.0,119.0 766.5,118.7 766.0,118.4 765.5,118.2 765.0,117.9 764.5,117.7 764.0,117.4 763.5,117.1 763.3,117.0" fill="#44DCDC"/>
<polygon points="774.7,117.0 775.0,117.0 775.5,117.0 776.0,117.0 776.5,117.0 777.0,117.0 777.5,117.0 778.0,117.0 778.5,117.0 779.0,117.0 779.5,117.0 780.0,117.0 780.5,117.0 781.0,117.0 781.5,117.0 782.0,117.0 782.5,117.0 783.0,117.0 783.5,117.0 784.0,117.0 784.5,117.0 785.0,117.0 785.5,117.0 786.0,117.0 786.5,117.0 787.0,117.0 787.5,117.0 788.0,117.0 788.5,117.0 789.0,117.0 789.5,117.0 790.0,117.0 790.5,117.0 791.0,117.0 791.5,117.0 792.0,117.0 792.5,117.0 793.0,117.0 793.5,117.0 794.0,117.0 794.5,117.0 795.0,117.0 795.5,117.0 796.0,117.0 796.5,117.0 797.0,117.0 797.5,117.0 798.0,117.0 798.5,117.0 799.0,117.0 799.5,117.0 800.0,117.0 800.5,117.0 801.0,117.0 801.5,117.0 802.0,117.0 802.5,117.0 803.0,117.0 803.5,117.0 804.0,117.0 804.5,117.0 805.0,117.0 805.5,117.0 806.0,117.0 806.5,117.0 807.0,117.0 807.5,117.0 808.0,117.0 808.5,117.0 809.0,117.0 809.5,117.0 810.0,117.0 810.5,117.0 811.0,117.0 811.5,117.0 812.0,117.0 812.5,117.0 813.0,117.0 813.5,117.0 814.0,117.0 814.5,117.0 815.0,117.0 815.5,117.0 816.0,117.0 816.5,117.0 817.0,117.0 817.5,117.0 818.0,117.0 818.5,117.0 819.0,117.0 819.5,117.0 820.0,117.0 820.5,117.0 821.0,117.0 821.5,117.0 822.0,117.0 822.5,117.0 823.0,117.0 823.5,117.0 824.0,117.0 824.5,117.0 825.0,117.0 825.5,117.0 826.0,117.0 826.5,117.0 827.0,117.0 827.5,117.0 828.0,117.0 828.5,117.0 829.0,117.0 829.5,117.0 830.0,117.0 830.5,117.0 831.0,117.0 831.5,117.0 832.0,117.0 832.5,117.0 833.0,117.0 833.5,117.0 834.0,117.0 834.5,117.0 835.0,117.0 835.5,117.0 836.0,117.0 836.5,117.0 837.0,117.0 837.5,117.0 838.0,117.0 838.5,117.0 839.0,117.0 839.5,117.0 840.0,117.0 840.5,117.0 841.0,117.0 841.5,117.0 842.0,117.0 842.5,117.0 843.0,117.0 843.5,117.0 844.0,117.0 844.5,117.0 845.0,117.0 845.5,117.0 846.0,117.0 846.5,117.0 847.0,117.0 847.5,117.0 848.0,117.0 848.5,117.0 849.0,117.0 849.5,117.0 850.0,117.0 850.5,117.0 851.0,117.0 851.5,117.0 852.0,117.0 852.5,117.0 853.0,117.0 853.5,117.0 854.0,117.0 854.5,117.0 855.0,117.0 855.5,117.0 856.0,117.0 856.5,117.0 857.0,117.0 857.5,117.0 858.0,117.0 858.5,117.0 859.0,117.0 859.5,117.0 860.0,117.0 860.5,117.0 861.0,117.0 861.5,117.0 862.0,117.0 862.5,117.0 863.0,117.0 863.5,117.0 864.0,117.0 864.5,117.0 865.0,117.0 865.5,117.0 866.0,117.0 866.5,117.0 867.0,117.0 867.5,117.0 868.0,117.0 868.5,117.0 869.0,117.0 869.5,117.0 869.5,67.5 869.0,66.5 868.5,65.5 868.0,64.5 867.5,63.4 867.0,62.4 866.5,61.4 866.0,60.4 865.5,59.4 865.0,58.6 864.5,58.0 864.0,57.4 863.5,56.8 863.0,56.2 862.5,55.6 862.0,55.0 861.5,54.4 861.0,53.8 860.5,53.5 860.0,53.3 859.5,53.2 859.0,53.0 858.5,52.8 858.0,52.6 857.5,52.5 857.0,52.3 856.5,52.1 856.0,52.0 855.5,51.8 855.0,51.6 854.5,51.4 854.0,51.6 853.5,51.8 853.0,52.1 852.5,52.3 852.0,52.6 851.5,52.8 851.0,53.1 850.5,53.3 850.0,53.6 849.5,53.8 849.0,54.1 848.5,54.3 848.0,54.6 847.5,54.8 847.0,55.0 846.5,55.0 846.0,55.1 845.5,55.1 845.0,55.2 844.5,55.2 844.0,55.2 843.5,55.3 843.0,55.3 842.5,55.3 842.0,55.4 841.5,55.5 841.0,55.7 840.5,55.9 840.0,56.1 839.5,56.2 839.0,56.4 838.5,56.6 838.0,56.8 837.5,57.0 837.0,57.2 836.5,57.4 836.0,57.6 835.5,57.8 835.0,58.0 834.5,58.2 834.0,58.1 833.5,57.9 833.0,57.7 832.5,57.5 832.0,57.4 831.5,57.2 831.0,57.0 830.5,56.8 830.0,56.7 829.5,56.5 829.0,56.3 828.5,56.3 828.0,56.4 827.5,56.4 827.0,56.5 826.5,56.5 826.0,56.5 825.5,56.6 825.0,56.6 824.5,56.7 824.0,56.7 823.5,56.8 823.0,56.8 822.5,56.8 822.0,56.9 821.5,56.8 821.0,56.5 820.5,56.3 820.0,56.0 819.5,55.8 819.0,55.5 818.5,55.3 818.0,55.0 817.5,54.8 817.0,54.5 816.5,54.3 816.0,54.0 815.5,53.8 815.0,53.5 814.5,53.3 814.0,53.5 813.5,53.9 813.0,54.3 812.5,54.7 812.0,55.1 811.5,55.5 811.0,55.9 810.5,56.3 810.0,56.7 809.5,57.1 809.0,57.6 808.5,58.0 808.0,58.4 807.5,58.8 807.0,59.4 806.5,60.4 806.0,61.4 805.5,62.4 805.0,63.5 804.5,64.5 804.0,65.5 803.5,66.5 803.0,67.5 802.5,68.5 802.0,69.5 801.5,70.6 801.0,71.6 800.5,72.6 800.0,73.6 799.5,74.9 799.0,76.2 798.5,77.6 798.0,78.9 797.5,80.2 797.0,81.5 796.5,82.8 796.0,84.1 795.5,85.5 795.0,86.8 794.5,88.1 794.0,89.3 793.5,90.4 793.0,91.6 792.5,92.7 792.0,93.9 791.5,95.0 791.0,96.2 790.5,97.3 790.0,98.5 789.5,99.6 789.0,100.8 788.5,101.3 788.0,101.8 787.5,102.3 787.0,102.8 786.5,103.3 786.0,103.8 785.5,104.3 785.0,104.9 784.5,105.4 784.0,105.9 783.5,106.4 783.0,106.9 782.5,107.4 782.0,107.9 781.5,108.5 781.0,109.1 780.5,109.7 780.0,110.3 779.5,111.0 779.0,111.6 778.5,112.2 778.0,112.8 777.5,113.5 777.0,114.1 776.5,114.7 776.0,115.3 775.5,116.0 775.0,116.6 774.7,117.0" fill="none" stroke="none"/>
<rect x="56" y="31" width="1" height="202" fill="#C0C0C0"/>
<polyline points="0.0,54.8 3.9,54.5 7.2,56.0 9.8,54.0 13.0,49.6 15.0,45.6 18.3,42.6 23.5,41.0 28.0,38.5 32.6,38.5 35.2,40.4 39.8,41.7 43.0,43.7 45.6,47.6 49.5,52.2 53.5,54.8 55.8,56.0 57.4,66.5 61.3,95.2 66.5,107.0 73.0,120.0 77.0,123.2 80.8,122.8 86.0,121.3 91.3,121.3 96.5,119.7 104.3,119.7 109.5,120.0 120.0,119.5 129.5,121.0 139.0,119.5 145.3,116.6 156.4,116.3 161.2,118.7 166.7,120.3 172.3,119.0 177.0,117.1 183.4,113.2 189.7,107.6 197.6,97.3 203.2,85.4 208.7,95.0 215.0,111.6 227.7,112.7 242.0,113.6 246.7,111.6 254.6,96.5 261.0,76.0 265.7,60.0 270.0,57.7 276.3,51.4 281.0,53.8 287.4,62.5 293.8,66.4 303.3,68.0 312.8,74.4 322.3,74.4 328.6,66.4 333.4,65.6 338.0,72.8 342.9,80.7 349.2,88.6 354.0,93.4 360.3,87.0 365.0,83.0 369.8,87.0 376.1,91.0 387.2,98.9 392.0,95.0 396.7,97.3 409.4,104.4 420.0,109.2 426.3,111.6 435.8,116.3 443.8,111.6 448.5,110.0 454.8,99.7 461.2,88.6 467.5,76.0 473.9,58.5 480.2,55.3 488.1,59.3 492.9,64.8 497.6,72.0 502.4,75.1 508.7,85.4 515.0,91.0 523.0,97.3 527.7,91.8 534.0,88.6 545.1,69.6 548.3,67.2 556.2,50.6 561.0,46.6 565.7,45.0 570.0,43.5 573.2,43.5 580.3,49.0 585.8,47.4 590.6,47.4 595.3,49.8 604.0,49.8 611.2,48.7 616.0,45.0 620.7,42.4 627.0,43.0 633.4,43.5 638.1,51.4 642.9,56.1 649.2,61.7 655.5,62.5 666.6,63.0 669.8,64.8 676.1,80.7 683.3,96.5 690.4,103.2 698.3,106.0 701.5,103.2 709.4,102.5 720.0,104.8 727.3,109.9 733.6,111.4 740.0,109.5 745.4,103.6 752.7,108.1 758.1,113.2 763.6,117.2 769.0,120.0 774.5,117.2 781.8,108.1 789.0,100.8 794.5,88.1 800.0,73.6 807.2,59.0 814.4,53.2 821.7,56.9 829.0,56.3 834.4,58.2 841.7,55.4 847.1,55.0 854.4,51.4 860.8,53.6 865.3,59.0 869.8,68.1" fill="none" stroke="#FF0000" stroke-width="1" shape-rendering="crispEdges"/>
<polyline points="0.0,55.4 7.8,55.4 13.0,54.8 18.3,51.5 24.8,47.6 31.3,42.4 35.2,40.4 44.3,40.4 49.5,43.0 56.0,48.9 60.0,58.0 65.2,69.0 70.4,84.8 75.6,103.0 80.8,113.4 86.0,120.0 91.3,121.3 93.9,122.0 99.0,121.3 103.0,121.3 108.0,120.6 120.0,120.3 143.8,120.3 154.8,117.1 183.4,118.0 188.0,116.3 197.6,108.4 205.5,98.0 211.0,94.0 216.6,96.5 227.7,108.4 237.2,112.4 245.0,113.2 253.0,110.0 261.0,99.7 270.0,79.0 282.7,55.3 292.2,56.1 301.7,63.3 311.2,68.8 323.9,72.8 330.2,71.2 338.0,70.4 344.5,72.0 352.4,79.1 360.3,87.0 369.8,88.6 377.7,87.8 392.0,95.0 407.8,98.9 420.0,104.0 435.8,112.4 450.0,113.2 459.6,105.2 467.5,94.2 477.0,72.8 483.4,64.8 489.7,58.5 494.5,59.3 500.8,64.0 508.7,72.0 515.0,80.7 526.1,91.0 534.0,93.4 542.0,89.4 549.9,79.1 557.8,63.3 570.0,49.8 576.3,45.5 584.3,45.5 593.8,47.7 603.3,49.3 612.8,49.0 622.3,45.8 635.0,44.3 644.5,49.0 655.5,57.7 665.0,61.7 673.0,64.0 681.0,72.8 688.8,85.4 696.7,98.0 703.0,102.9 720.0,103.4 738.2,109.0 749.0,108.5 760.0,108.5 767.2,113.2 776.3,116.8 781.8,116.3 789.0,112.6 796.3,102.6 805.4,86.3 814.4,70.0 823.5,56.9 830.8,55.4 841.7,57.2 850.8,56.3 859.8,53.2 865.3,53.6 869.8,56.3" fill="none" stroke="#00FF00" stroke-width="1" shape-rendering="crispEdges"/>
<g shape-rendering="crispEdges"><rect x="1" y="156.0" width="1" height="1.0" fill="#FF0000"/><rect x="3" y="156.0" width="1" height="1.0" fill="#FF0000"/><rect x="5" y="156.0" width="1" height="1.0" fill="#FF0000"/><rect x="7" y="156.0" width="1" height="1.0" fill="#FF0000"/><rect x="9" y="155.5" width="1" height="1.5" fill="#FF0000"/><rect x="11" y="154.5" width="1" height="2.5" fill="#FF0000"/><rect x="13" y="153.6" width="1" height="3.4" fill="#FF0000"/><rect x="15" y="152.9" width="1" height="4.1" fill="#FF0000"/><rect x="17" y="152.1" width="1" height="4.9" fill="#FF0000"/><rect x="19" y="151.4" width="1" height="5.6" fill="#FF0000"/><rect x="21" y="150.8" width="1" height="6.2" fill="#FF0000"/><rect x="23" y="150.2" width="1" height="6.8" fill="#FF0000"/><rect x="25" y="150.3" width="1" height="6.7" fill="#FF0000"/><rect x="27" y="151.0" width="1" height="6.0" fill="#FF0000"/><rect x="29" y="151.7" width="1" height="5.3" fill="#FF0000"/><rect x="31" y="152.8" width="1" height="4.2" fill="#FF0000"/><rect x="33" y="154.2" width="1" height="2.8" fill="#FF0000"/><rect x="35" y="155.1" width="1" height="1.9" fill="#FF0000"/><rect x="37" y="155.4" width="1" height="1.6" fill="#FF0000"/><rect x="39" y="155.7" width="1" height="1.3" fill="#FF0000"/><rect x="41" y="156.0" width="1" height="1.0" fill="#FF0000"/><rect x="43" y="157" width="1" height="1.8" fill="#0000FF"/><rect x="45" y="157" width="1" height="3.7" fill="#0000FF"/><rect x="47" y="157" width="1" height="4.5" fill="#0000FF"/><rect x="49" y="157" width="1" height="4.5" fill="#0000FF"/><rect x="51" y="157" width="1" height="4.5" fill="#0000FF"/><rect x="53" y="157" width="1" height="4.5" fill="#0000FF"/><rect x="55" y="157" width="1" height="4.5" fill="#0000FF"/><rect x="57" y="157" width="1" height="17.4" fill="#0000FF"/><rect x="59" y="157" width="1" height="26.4" fill="#0000FF"/><rect x="61" y="157" width="1" height="31.5" fill="#0000FF"/><rect x="63" y="157" width="1" height="32.0" fill="#0000FF"/><rect x="65" y="157" width="1" height="31.3" fill="#0000FF"/><rect x="67" y="157" width="1" height="29.4" fill="#0000FF"/><rect x="69" y="157" width="1" height="27.0" fill="#0000FF"/><rect x="71" y="157" width="1" height="24.6" fill="#0000FF"/><rect x="73" y="157" width="1" height="22.1" fill="#0000FF"/><rect x="75" y="157" width="1" height="19.2" fill="#0000FF"/><rect x="77" y="157" width="1" height="16.2" fill="#0000FF"/><rect x="79" y="157" width="1" height="13.7" fill="#0000FF"/><rect x="81" y="157" width="1" height="10.8" fill="#0000FF"/><rect x="83" y="157" width="1" height="7.1" fill="#0000FF"/><rect x="85" y="157" width="1" height="3.7" fill="#0000FF"/><rect x="87" y="157" width="1" height="1.8" fill="#0000FF"/><rect x="89" y="156.0" width="1" height="1.0" fill="#FF0000"/><rect x="91" y="154.0" width="1" height="3.0" fill="#FF0000"/><rect x="93" y="152.7" width="1" height="4.3" fill="#FF0000"/><rect x="95" y="151.3" width="1" height="5.7" fill="#FF0000"/><rect x="97" y="150.2" width="1" height="6.8" fill="#FF0000"/><rect x="99" y="150.5" width="1" height="6.5" fill="#FF0000"/><rect x="101" y="149.8" width="1" height="7.2" fill="#FF0000"/><rect x="103" y="149.1" width="1" height="7.9" fill="#FF0000"/><rect x="105" y="148.4" width="1" height="8.6" fill="#FF0000"/><rect x="107" y="147.7" width="1" height="9.3" fill="#FF0000"/><rect x="109" y="146.9" width="1" height="10.1" fill="#FF0000"/><rect x="111" y="146.7" width="1" height="10.3" fill="#FF0000"/><rect x="113" y="146.8" width="1" height="10.2" fill="#FF0000"/><rect x="115" y="146.9" width="1" height="10.1" fill="#FF0000"/><rect x="117" y="147.5" width="1" height="9.5" fill="#FF0000"/><rect x="119" y="148.5" width="1" height="8.5" fill="#FF0000"/><rect x="121" y="150.5" width="1" height="6.5" fill="#FF0000"/><rect x="123" y="153.5" width="1" height="3.5" fill="#FF0000"/><rect x="125" y="155.0" width="1" height="2.0" fill="#FF0000"/><rect x="127" y="155.0" width="1" height="2.0" fill="#FF0000"/><rect x="129" y="154.5" width="1" height="2.5" fill="#FF0000"/><rect x="131" y="153.5" width="1" height="3.5" fill="#FF0000"/><rect x="133" y="152.5" width="1" height="4.5" fill="#FF0000"/><rect x="135" y="151.5" width="1" height="5.5" fill="#FF0000"/><rect x="137" y="151.0" width="1" height="6.0" fill="#FF0000"/><rect x="139" y="151.0" width="1" height="6.0" fill="#FF0000"/><rect x="141" y="151.0" width="1" height="6.0" fill="#FF0000"/><rect x="143" y="151.3" width="1" height="5.7" fill="#FF0000"/><rect x="145" y="152.0" width="1" height="5.0" fill="#FF0000"/><rect x="147" y="152.7" width="1" height="4.3" fill="#FF0000"/><rect x="149" y="153.0" width="1" height="4.0" fill="#FF0000"/><rect x="151" y="153.0" width="1" height="4.0" fill="#FF0000"/><rect x="153" y="153.5" width="1" height="3.5" fill="#FF0000"/><rect x="155" y="154.5" width="1" height="2.5" fill="#FF0000"/><rect x="157" y="155.5" width="1" height="1.5" fill="#FF0000"/><rect x="159" y="156" width="1" height="1" fill="#FF0000"/><rect x="161" y="157" width="1" height="1" fill="#0000FF"/><rect x="163" y="157" width="1" height="0.8" fill="#0000FF"/><rect x="165" y="157" width="1" height="1" fill="#0000FF"/><rect x="167" y="155.2" width="1" height="1.8" fill="#FF0000"/><rect x="169" y="153.8" width="1" height="3.2" fill="#FF0000"/><rect x="171" y="153.2" width="1" height="3.8" fill="#FF0000"/><rect x="173" y="152.8" width="1" height="4.2" fill="#FF0000"/><rect x="175" y="152.2" width="1" height="4.8" fill="#FF0000"/><rect x="177" y="152.0" width="1" height="5.0" fill="#FF0000"/><rect x="179" y="152.0" width="1" height="5.0" fill="#FF0000"/><rect x="181" y="152.0" width="1" height="5.0" fill="#FF0000"/><rect x="183" y="152.0" width="1" height="5.0" fill="#FF0000"/><rect x="185" y="152.0" width="1" height="5.0" fill="#FF0000"/><rect x="187" y="152.2" width="1" height="4.8" fill="#FF0000"/><rect x="189" y="152.8" width="1" height="4.2" fill="#FF0000"/><rect x="191" y="153.2" width="1" height="3.8" fill="#FF0000"/><rect x="193" y="153.8" width="1" height="3.2" fill="#FF0000"/><rect x="195" y="155.3" width="1" height="1.7" fill="#FF0000"/><rect x="197" y="157" width="1" height="1.0" fill="#0000FF"/><rect x="199" y="157" width="1" height="1.8" fill="#0000FF"/><rect x="201" y="157" width="1" height="2.5" fill="#0000FF"/><rect x="203" y="157" width="1" height="3.2" fill="#0000FF"/><rect x="205" y="157" width="1" height="4.0" fill="#0000FF"/><rect x="207" y="157" width="1" height="4.4" fill="#0000FF"/><rect x="209" y="157" width="1" height="4.9" fill="#0000FF"/><rect x="211" y="157" width="1" height="5.3" fill="#0000FF"/><rect x="213" y="157" width="1" height="5.2" fill="#0000FF"/><rect x="215" y="157" width="1" height="4.6" fill="#0000FF"/><rect x="217" y="157" width="1" height="3.9" fill="#0000FF"/><rect x="219" y="157" width="1" height="3.3" fill="#0000FF"/><rect x="221" y="157" width="1" height="2.3" fill="#0000FF"/><rect x="223" y="157" width="1" height="1.0" fill="#0000FF"/><rect x="225" y="157" width="1" height="1.2" fill="#0000FF"/><rect x="227" y="157" width="1" height="1.4" fill="#0000FF"/><rect x="229" y="157" width="1" height="1.6" fill="#0000FF"/><rect x="231" y="157" width="1" height="1.9" fill="#0000FF"/><rect x="233" y="157" width="1" height="1.8" fill="#0000FF"/><rect x="235" y="157" width="1" height="1.5" fill="#0000FF"/><rect x="237" y="157" width="1" height="1.2" fill="#0000FF"/><rect x="239" y="157" width="1" height="1" fill="#0000FF"/><rect x="241" y="155.8" width="1" height="1.2" fill="#FF0000"/><rect x="243" y="154.8" width="1" height="2.2" fill="#FF0000"/><rect x="245" y="154.2" width="1" height="2.8" fill="#FF0000"/><rect x="247" y="153.8" width="1" height="3.2" fill="#FF0000"/><rect x="249" y="153.2" width="1" height="3.8" fill="#FF0000"/><rect x="251" y="152.7" width="1" height="4.3" fill="#FF0000"/><rect x="253" y="152.0" width="1" height="5.0" fill="#FF0000"/><rect x="255" y="151.3" width="1" height="5.7" fill="#FF0000"/><rect x="257" y="150.8" width="1" height="6.2" fill="#FF0000"/><rect x="259" y="150.4" width="1" height="6.6" fill="#FF0000"/><rect x="261" y="150.0" width="1" height="7.0" fill="#FF0000"/><rect x="263" y="150.0" width="1" height="7.0" fill="#FF0000"/><rect x="265" y="150.4" width="1" height="6.6" fill="#FF0000"/><rect x="267" y="150.8" width="1" height="6.2" fill="#FF0000"/><rect x="269" y="151.5" width="1" height="5.5" fill="#FF0000"/><rect x="271" y="152.5" width="1" height="4.5" fill="#FF0000"/><rect x="273" y="153.5" width="1" height="3.5" fill="#FF0000"/><rect x="275" y="154.5" width="1" height="2.5" fill="#FF0000"/><rect x="277" y="155.5" width="1" height="1.5" fill="#FF0000"/><rect x="279" y="157" width="1" height="1" fill="#0000FF"/><rect x="281" y="157" width="1" height="3.0" fill="#0000FF"/><rect x="283" y="157" width="1" height="3.0" fill="#0000FF"/><rect x="285" y="157" width="1" height="3.0" fill="#0000FF"/><rect x="287" y="157" width="1" height="3.0" fill="#0000FF"/><rect x="289" y="157" width="1" height="3.0" fill="#0000FF"/><rect x="291" y="157" width="1" height="3.1" fill="#0000FF"/><rect x="293" y="157" width="1" height="3.3" fill="#0000FF"/><rect x="295" y="157" width="1" height="3.5" fill="#0000FF"/><rect x="297" y="157" width="1" height="3.7" fill="#0000FF"/><rect x="299" y="157" width="1" height="3.9" fill="#0000FF"/><rect x="301" y="157" width="1" height="4.1" fill="#0000FF"/><rect x="303" y="157" width="1" height="4.4" fill="#0000FF"/><rect x="305" y="157" width="1" height="4.6" fill="#0000FF"/><rect x="307" y="157" width="1" height="4.9" fill="#0000FF"/><rect x="309" y="157" width="1" height="4.7" fill="#0000FF"/><rect x="311" y="157" width="1" height="4.0" fill="#0000FF"/><rect x="313" y="157" width="1" height="3.3" fill="#0000FF"/><rect x="315" y="157" width="1" height="2.0" fill="#0000FF"/><rect x="317" y="157" width="1" height="1" fill="#0000FF"/><rect x="319" y="156.0" width="1" height="1.0" fill="#FF0000"/><rect x="321" y="156.0" width="1" height="1.0" fill="#FF0000"/><rect x="323" y="156.0" width="1" height="1.0" fill="#FF0000"/><rect x="325" y="156.0" width="1" height="1.0" fill="#FF0000"/><rect x="327" y="156.0" width="1" height="1.0" fill="#FF0000"/><rect x="329" y="156.0" width="1" height="1.0" fill="#FF0000"/><rect x="331" y="157" width="1" height="1" fill="#0000FF"/><rect x="333" y="157" width="1" height="2.0" fill="#0000FF"/><rect x="335" y="157" width="1" height="2.8" fill="#0000FF"/><rect x="337" y="157" width="1" height="3.6" fill="#0000FF"/><rect x="339" y="157" width="1" height="3.9" fill="#0000FF"/><rect x="341" y="157" width="1" height="3.7" fill="#0000FF"/><rect x="343" y="157" width="1" height="3.4" fill="#0000FF"/><rect x="345" y="157" width="1" height="3.2" fill="#0000FF"/><rect x="347" y="157" width="1" height="3.0" fill="#0000FF"/><rect x="349" y="157" width="1" height="2.3" fill="#0000FF"/><rect x="351" y="157" width="1" height="1.9" fill="#0000FF"/><rect x="353" y="157" width="1" height="1.6" fill="#0000FF"/><rect x="355" y="157" width="1" height="1.3" fill="#0000FF"/><rect x="357" y="157" width="1" height="1.0" fill="#0000FF"/><rect x="359" y="156" width="1" height="1" fill="#FF0000"/><rect x="361" y="155.6" width="1" height="1.4" fill="#FF0000"/><rect x="363" y="155.0" width="1" height="2.0" fill="#FF0000"/><rect x="365" y="155.0" width="1" height="2.0" fill="#FF0000"/><rect x="367" y="155.0" width="1" height="2.0" fill="#FF0000"/><rect x="369" y="156.0" width="1" height="1.0" fill="#FF0000"/><rect x="371" y="157" width="1" height="1.0" fill="#0000FF"/><rect x="373" y="157" width="1" height="2.3" fill="#0000FF"/><rect x="375" y="157" width="1" height="2.9" fill="#0000FF"/><rect x="377" y="157" width="1" height="2.6" fill="#0000FF"/><rect x="379" y="157" width="1" height="2.4" fill="#0000FF"/><rect x="381" y="157" width="1" height="2.1" fill="#0000FF"/><rect x="383" y="157" width="1" height="1.2" fill="#0000FF"/><rect x="385" y="156" width="1" height="1" fill="#FF0000"/><rect x="387" y="156.0" width="1" height="1.0" fill="#FF0000"/><rect x="389" y="156.0" width="1" height="1.0" fill="#FF0000"/><rect x="391" y="156.0" width="1" height="1.0" fill="#FF0000"/><rect x="393" y="156.0" width="1" height="1.0" fill="#FF0000"/><rect x="395" y="156" width="1" height="1" fill="#FF0000"/><rect x="397" y="157" width="1" height="1" fill="#0000FF"/><rect x="399" y="157" width="1" height="1.5" fill="#0000FF"/><rect x="401" y="157" width="1" height="1.9" fill="#0000FF"/><rect x="403" y="157" width="1" height="1.8" fill="#0000FF"/><rect x="405" y="157" width="1" height="1.8" fill="#0000FF"/><rect x="407" y="157" width="1" height="1.7" fill="#0000FF"/><rect x="409" y="157" width="1" height="1.6" fill="#0000FF"/><rect x="411" y="157" width="1" height="1.4" fill="#0000FF"/><rect x="413" y="157" width="1" height="1.3" fill="#0000FF"/><rect x="415" y="157" width="1" height="1.2" fill="#0000FF"/><rect x="417" y="157" width="1" height="1.2" fill="#0000FF"/><rect x="419" y="157" width="1" height="1.1" fill="#0000FF"/><rect x="421" y="157" width="1" height="0.8" fill="#0000FF"/><rect x="423" y="157" width="1" height="1" fill="#0000FF"/><rect x="425" y="156" width="1" height="1" fill="#FF0000"/><rect x="427" y="156.2" width="1" height="0.8" fill="#FF0000"/><rect x="429" y="156.0" width="1" height="1.0" fill="#FF0000"/><rect x="431" y="156.0" width="1" height="1.0" fill="#FF0000"/><rect x="433" y="156" width="1" height="1" fill="#FF0000"/><rect x="435" y="157" width="1" height="1.2" fill="#0000FF"/><rect x="437" y="157" width="1" height="2.0" fill="#0000FF"/><rect x="439" y="157" width="1" height="2.0" fill="#0000FF"/><rect x="441" y="157" width="1" height="2.0" fill="#0000FF"/><rect x="443" y="157" width="1" height="2.0" fill="#0000FF"/><rect x="445" y="157" width="1" height="1.0" fill="#0000FF"/><rect x="447" y="156.0" width="1" height="1.0" fill="#FF0000"/><rect x="449" y="154.8" width="1" height="2.2" fill="#FF0000"/><rect x="451" y="154.2" width="1" height="2.8" fill="#FF0000"/><rect x="453" y="153.8" width="1" height="3.2" fill="#FF0000"/><rect x="455" y="153.2" width="1" height="3.8" fill="#FF0000"/><rect x="457" y="152.8" width="1" height="4.2" fill="#FF0000"/><rect x="459" y="152.2" width="1" height="4.8" fill="#FF0000"/><rect x="461" y="152.1" width="1" height="4.9" fill="#FF0000"/><rect x="463" y="152.4" width="1" height="4.6" fill="#FF0000"/><rect x="465" y="152.6" width="1" height="4.4" fill="#FF0000"/><rect x="467" y="152.9" width="1" height="4.1" fill="#FF0000"/><rect x="469" y="153.3" width="1" height="3.7" fill="#FF0000"/><rect x="471" y="154.0" width="1" height="3.0" fill="#FF0000"/><rect x="473" y="154.7" width="1" height="2.3" fill="#FF0000"/><rect x="475" y="155.5" width="1" height="1.5" fill="#FF0000"/><rect x="477" y="156" width="1" height="1" fill="#FF0000"/><rect x="479" y="157" width="1" height="1" fill="#0000FF"/><rect x="481" y="157" width="1" height="1.3" fill="#0000FF"/><rect x="483" y="157" width="1" height="2.0" fill="#0000FF"/><rect x="485" y="157" width="1" height="2.7" fill="#0000FF"/><rect x="487" y="157" width="1" height="3.1" fill="#0000FF"/><rect x="489" y="157" width="1" height="3.2" fill="#0000FF"/><rect x="491" y="157" width="1" height="3.4" fill="#0000FF"/><rect x="493" y="157" width="1" height="3.5" fill="#0000FF"/><rect x="495" y="157" width="1" height="3.6" fill="#0000FF"/><rect x="497" y="157" width="1" height="3.8" fill="#0000FF"/><rect x="499" y="157" width="1" height="3.9" fill="#0000FF"/><rect x="501" y="157" width="1" height="4.0" fill="#0000FF"/><rect x="503" y="157" width="1" height="4.0" fill="#0000FF"/><rect x="505" y="157" width="1" height="4.0" fill="#0000FF"/><rect x="507" y="157" width="1" height="4.0" fill="#0000FF"/><rect x="509" y="157" width="1" height="4.0" fill="#0000FF"/><rect x="511" y="157" width="1" height="3.9" fill="#0000FF"/><rect x="513" y="157" width="1" height="3.7" fill="#0000FF"/><rect x="515" y="157" width="1" height="3.5" fill="#0000FF"/><rect x="517" y="157" width="1" height="3.3" fill="#0000FF"/><rect x="519" y="157" width="1" height="3.1" fill="#0000FF"/><rect x="521" y="157" width="1" height="2.5" fill="#0000FF"/><rect x="523" y="157" width="1" height="1.5" fill="#0000FF"/><rect x="525" y="157" width="1" height="0.7" fill="#0000FF"/><rect x="527" y="157" width="1" height="1" fill="#0000FF"/><rect x="529" y="156.3" width="1" height="0.7" fill="#FF0000"/><rect x="531" y="155.9" width="1" height="1.1" fill="#FF0000"/><rect x="533" y="155.7" width="1" height="1.3" fill="#FF0000"/><rect x="535" y="155.5" width="1" height="1.5" fill="#FF0000"/><rect x="537" y="155.3" width="1" height="1.7" fill="#FF0000"/><rect x="539" y="155.1" width="1" height="1.9" fill="#FF0000"/><rect x="541" y="154.8" width="1" height="2.2" fill="#FF0000"/><rect x="543" y="154.4" width="1" height="2.6" fill="#FF0000"/><rect x="545" y="154.0" width="1" height="3.0" fill="#FF0000"/><rect x="547" y="153.6" width="1" height="3.4" fill="#FF0000"/><rect x="549" y="153.2" width="1" height="3.8" fill="#FF0000"/><rect x="551" y="152.8" width="1" height="4.2" fill="#FF0000"/><rect x="553" y="152.5" width="1" height="4.5" fill="#FF0000"/><rect x="555" y="152.2" width="1" height="4.8" fill="#FF0000"/><rect x="557" y="152.0" width="1" height="5.0" fill="#FF0000"/><rect x="559" y="151.9" width="1" height="5.1" fill="#FF0000"/><rect x="561" y="151.9" width="1" height="5.1" fill="#FF0000"/><rect x="563" y="152.1" width="1" height="4.9" fill="#FF0000"/><rect x="565" y="152.4" width="1" height="4.6" fill="#FF0000"/><rect x="567" y="152.8" width="1" height="4.2" fill="#FF0000"/><rect x="569" y="153.8" width="1" height="3.2" fill="#FF0000"/><rect x="571" y="155.2" width="1" height="1.8" fill="#FF0000"/><rect x="573" y="156.3" width="1" height="0.7" fill="#FF0000"/><rect x="575" y="157" width="1" height="1" fill="#0000FF"/><rect x="577" y="157" width="1" height="0.7" fill="#0000FF"/><rect x="579" y="157" width="1" height="1.1" fill="#0000FF"/><rect x="581" y="157" width="1" height="1.2" fill="#0000FF"/><rect x="583" y="157" width="1" height="1.4" fill="#0000FF"/><rect x="585" y="157" width="1" height="1.6" fill="#0000FF"/><rect x="587" y="157" width="1" height="1.8" fill="#0000FF"/><rect x="589" y="157" width="1" height="1.9" fill="#0000FF"/><rect x="591" y="157" width="1" height="2.0" fill="#0000FF"/><rect x="593" y="157" width="1" height="2.0" fill="#0000FF"/><rect x="595" y="157" width="1" height="2.0" fill="#0000FF"/><rect x="597" y="157" width="1" height="2.0" fill="#0000FF"/><rect x="599" y="157" width="1" height="2.0" fill="#0000FF"/><rect x="601" y="157" width="1" height="2.0" fill="#0000FF"/><rect x="603" y="157" width="1" height="2.0" fill="#0000FF"/><rect x="605" y="157" width="1" height="2.0" fill="#0000FF"/><rect x="607" y="157" width="1" height="2.0" fill="#0000FF"/><rect x="609" y="157" width="1" height="2.0" fill="#0000FF"/><rect x="611" y="157" width="1" height="1.6" fill="#0000FF"/><rect x="613" y="157" width="1" height="0.7" fill="#0000FF"/><rect x="615" y="156" width="1" height="1" fill="#FF0000"/><rect x="617" y="156.0" width="1" height="1.0" fill="#FF0000"/><rect x="619" y="156.0" width="1" height="1.0" fill="#FF0000"/><rect x="621" y="156.0" width="1" height="1.0" fill="#FF0000"/><rect x="623" y="156.0" width="1" height="1.0" fill="#FF0000"/><rect x="625" y="156.0" width="1" height="1.0" fill="#FF0000"/><rect x="627" y="156.0" width="1" height="1.0" fill="#FF0000"/><rect x="629" y="156" width="1" height="1" fill="#FF0000"/><rect x="631" y="157" width="1" height="1.2" fill="#0000FF"/><rect x="633" y="157" width="1" height="2.2" fill="#0000FF"/><rect x="635" y="157" width="1" height="2.8" fill="#0000FF"/><rect x="637" y="157" width="1" height="3.2" fill="#0000FF"/><rect x="639" y="157" width="1" height="3.8" fill="#0000FF"/><rect x="641" y="157" width="1" height="4.0" fill="#0000FF"/><rect x="643" y="157" width="1" height="4.0" fill="#0000FF"/><rect x="645" y="157" width="1" height="4.0" fill="#0000FF"/><rect x="647" y="157" width="1" height="3.7" fill="#0000FF"/><rect x="649" y="157" width="1" height="3.0" fill="#0000FF"/><rect x="651" y="157" width="1" height="2.3" fill="#0000FF"/><rect x="653" y="157" width="1" height="1.8" fill="#0000FF"/><rect x="655" y="157" width="1" height="1.2" fill="#0000FF"/><rect x="657" y="157" width="1" height="0.7" fill="#0000FF"/><rect x="659" y="157" width="1" height="1" fill="#0000FF"/><rect x="661" y="156.3" width="1" height="0.7" fill="#FF0000"/><rect x="663" y="156" width="1" height="1" fill="#FF0000"/><rect x="665" y="157" width="1" height="1" fill="#0000FF"/><rect x="667" y="157" width="1" height="0.9" fill="#0000FF"/><rect x="669" y="157" width="1" height="1.4" fill="#0000FF"/><rect x="671" y="157" width="1" height="1.8" fill="#0000FF"/><rect x="673" y="157" width="1" height="2.2" fill="#0000FF"/><rect x="675" y="157" width="1" height="2.8" fill="#0000FF"/><rect x="677" y="157" width="1" height="3.2" fill="#0000FF"/><rect x="679" y="157" width="1" height="3.8" fill="#0000FF"/><rect x="681" y="157" width="1" height="4.0" fill="#0000FF"/><rect x="683" y="157" width="1" height="4.0" fill="#0000FF"/><rect x="685" y="157" width="1" height="3.2" fill="#0000FF"/><rect x="687" y="157" width="1" height="1.8" fill="#0000FF"/><rect x="689" y="157" width="1" height="1" fill="#0000FF"/><rect x="691" y="156" width="1" height="1" fill="#FF0000"/><rect x="693" y="156.0" width="1" height="1.0" fill="#FF0000"/><rect x="695" y="156.0" width="1" height="1.0" fill="#FF0000"/><rect x="697" y="156.0" width="1" height="1.0" fill="#FF0000"/><rect x="699" y="156.0" width="1" height="1.0" fill="#FF0000"/><rect x="701" y="156.0" width="1" height="1.0" fill="#FF0000"/><rect x="703" y="156.0" width="1" height="1.0" fill="#FF0000"/><rect x="705" y="156" width="1" height="1" fill="#FF0000"/><rect x="707" y="157" width="1" height="1" fill="#0000FF"/><rect x="709" y="157" width="1" height="1.0" fill="#0000FF"/><rect x="711" y="157" width="1" height="0.9" fill="#0000FF"/><rect x="713" y="157" width="1" height="0.8" fill="#0000FF"/><rect x="715" y="157" width="1" height="0.8" fill="#0000FF"/><rect x="717" y="157" width="1" height="0.7" fill="#0000FF"/><rect x="719" y="157" width="1" height="0.6" fill="#0000FF"/><rect x="721" y="157" width="1" height="0.5" fill="#0000FF"/><rect x="723" y="157" width="1" height="1" fill="#0000FF"/><rect x="725" y="156" width="1" height="1" fill="#FF0000"/><rect x="727" y="156" width="1" height="1" fill="#FF0000"/><rect x="729" y="156.2" width="1" height="0.8" fill="#FF0000"/><rect x="731" y="156.0" width="1" height="1.0" fill="#FF0000"/><rect x="733" y="156.0" width="1" height="1.0" fill="#FF0000"/><rect x="735" y="156.0" width="1" height="1.0" fill="#FF0000"/><rect x="737" y="156.0" width="1" height="1.0" fill="#FF0000"/><rect x="739" y="156.0" width="1" height="1.0" fill="#FF0000"/><rect x="741" y="156" width="1" height="1" fill="#FF0000"/><rect x="743" y="157" width="1" height="0.9" fill="#0000FF"/><rect x="745" y="157" width="1" height="2.1" fill="#0000FF"/><rect x="747" y="157" width="1" height="3.4" fill="#0000FF"/><rect x="749" y="157" width="1" height="4.0" fill="#0000FF"/><rect x="751" y="157" width="1" height="4.0" fill="#0000FF"/><rect x="753" y="157" width="1" height="4.0" fill="#0000FF"/><rect x="755" y="157" width="1" height="4.0" fill="#0000FF"/><rect x="757" y="157" width="1" height="4.0" fill="#0000FF"/><rect x="759" y="157" width="1" height="4.0" fill="#0000FF"/><rect x="761" y="157" width="1" height="4.0" fill="#0000FF"/><rect x="763" y="157" width="1" height="4.0" fill="#0000FF"/><rect x="765" y="157" width="1" height="4.0" fill="#0000FF"/><rect x="767" y="157" width="1" height="4.0" fill="#0000FF"/><rect x="769" y="157" width="1" height="4.0" fill="#0000FF"/><rect x="771" y="157" width="1" height="4.0" fill="#0000FF"/><rect x="773" y="157" width="1" height="3.5" fill="#0000FF"/><rect x="775" y="157" width="1" height="2.5" fill="#0000FF"/><rect x="777" y="157" width="1" height="1.5" fill="#0000FF"/><rect x="779" y="157" width="1" height="1" fill="#0000FF"/><rect x="781" y="155.8" width="1" height="1.2" fill="#FF0000"/><rect x="783" y="154.6" width="1" height="2.4" fill="#FF0000"/><rect x="785" y="153.9" width="1" height="3.1" fill="#FF0000"/><rect x="787" y="153.1" width="1" height="3.9" fill="#FF0000"/><rect x="789" y="152.4" width="1" height="4.6" fill="#FF0000"/><rect x="791" y="151.7" width="1" height="5.3" fill="#FF0000"/><rect x="793" y="151.1" width="1" height="5.9" fill="#FF0000"/><rect x="795" y="150.5" width="1" height="6.5" fill="#FF0000"/><rect x="797" y="149.9" width="1" height="7.1" fill="#FF0000"/><rect x="799" y="149.3" width="1" height="7.7" fill="#FF0000"/><rect x="801" y="149.4" width="1" height="7.6" fill="#FF0000"/><rect x="803" y="150.1" width="1" height="6.9" fill="#FF0000"/><rect x="805" y="150.9" width="1" height="6.1" fill="#FF0000"/><rect x="807" y="151.6" width="1" height="5.4" fill="#FF0000"/><rect x="809" y="152.3" width="1" height="4.7" fill="#FF0000"/><rect x="811" y="153.0" width="1" height="4.0" fill="#FF0000"/><rect x="813" y="153.7" width="1" height="3.3" fill="#FF0000"/><rect x="815" y="154.3" width="1" height="2.7" fill="#FF0000"/><rect x="817" y="155.0" width="1" height="2.0" fill="#FF0000"/><rect x="819" y="155.7" width="1" height="1.3" fill="#FF0000"/><rect x="821" y="156.0" width="1" height="1.0" fill="#FF0000"/><rect x="823" y="156.0" width="1" height="1.0" fill="#FF0000"/><rect x="825" y="156.0" width="1" height="1.0" fill="#FF0000"/><rect x="827" y="156.0" width="1" height="1.0" fill="#FF0000"/><rect x="829" y="157" width="1" height="1" fill="#0000FF"/><rect x="831" y="157" width="1" height="1.9" fill="#0000FF"/><rect x="833" y="157" width="1" height="1.6" fill="#0000FF"/><rect x="835" y="157" width="1" height="1.3" fill="#0000FF"/><rect x="837" y="157" width="1" height="1.0" fill="#0000FF"/><rect x="839" y="156" width="1" height="1" fill="#FF0000"/><rect x="841" y="156.0" width="1" height="1.0" fill="#FF0000"/><rect x="843" y="156.0" width="1" height="1.0" fill="#FF0000"/><rect x="845" y="156.0" width="1" height="1.0" fill="#FF0000"/><rect x="847" y="156.0" width="1" height="1.0" fill="#FF0000"/><rect x="849" y="156.0" width="1" height="1.0" fill="#FF0000"/><rect x="851" y="156.0" width="1" height="1.0" fill="#FF0000"/><rect x="853" y="157" width="1" height="1" fill="#0000FF"/><rect x="855" y="157" width="1" height="2.2" fill="#0000FF"/><rect x="857" y="157" width="1" height="2.6" fill="#0000FF"/><rect x="859" y="157" width="1" height="3.0" fill="#0000FF"/><rect x="861" y="157" width="1" height="3.4" fill="#0000FF"/><rect x="863" y="157" width="1" height="3.8" fill="#0000FF"/><rect x="865" y="157" width="1" height="4.3" fill="#0000FF"/><rect x="867" y="157" width="1" height="4.9" fill="#0000FF"/><rect x="869" y="157" width="1" height="5.5" fill="#0000FF"/></g>
<polyline points="0.0,155.3 9.5,153.0 15.8,146.6 25.3,138.2 33.3,138.2 39.6,139.8 46.0,145.8 52.3,148.2 55.4,152.2 57.0,161.7 59.4,182.3 63.4,199.7 69.7,212.5 74.5,221.5 79.5,226.6 83.5,224.2 87.4,219.2 90.3,215.5 96.6,209.2 110.9,193.4 118.8,183.9 125.1,185.4 131.5,182.3 142.6,170.4 150.0,168.8 154.8,168.0 161.0,169.3 167.4,168.8 178.5,159.3 186.4,156.1 192.8,156.1 200.7,160.9 216.5,169.3 221.3,166.7 230.8,167.7 237.1,168.3 245.0,166.7 251.4,159.3 262.5,148.2 268.8,145.8 276.7,147.7 286.2,153.8 300.0,154.6 308.0,160.0 315.8,157.7 331.7,157.7 339.6,163.3 344.4,164.0 355.4,163.3 361.8,159.3 368.0,159.3 372.9,163.6 382.4,163.3 395.0,163.3 403.0,164.0 417.2,164.0 423.6,166.0 436.2,166.0 444.1,162.5 450.0,159.3 459.5,153.0 470.6,148.7 478.5,148.7 489.6,153.0 497.5,156.1 508.6,161.7 518.1,163.0 522.9,162.5 532.4,159.3 540.3,156.1 551.4,152.2 560.9,145.5 570.4,144.6 576.7,145.8 586.2,146.6 594.1,149.0 600.0,151.4 606.3,150.3 612.7,151.4 619.0,149.3 631.7,150.3 639.6,155.3 647.5,155.7 657.0,156.1 669.7,158.5 674.5,161.4 682.4,164.0 688.7,163.0 701.4,162.5 710.9,159.8 717.2,160.4 725.1,162.0 734.6,160.0 742.6,159.3 748.3,160.1 756.3,165.6 762.6,166.7 772.1,172.8 778.4,171.5 783.2,168.0 789.5,166.4 795.9,158.5 805.4,149.3 814.9,150.6 824.4,150.6 830.7,153.0 837.0,154.0 849.7,152.2 856.0,155.3 862.4,155.7 868.7,157.7" fill="none" stroke="#D2B48C" stroke-width="1" shape-rendering="crispEdges"/>
<polyline points="0.0,155.0 11.0,154.6 20.6,149.0 28.5,143.5 36.4,140.3 44.4,140.8 55.4,145.8 58.6,153.8 63.4,168.0 68.1,185.4 74.5,202.9 84.0,217.9 88.7,218.7 101.4,210.8 114.0,198.1 122.0,189.4 134.6,183.9 150.0,173.2 156.3,170.4 167.4,170.4 192.8,157.2 197.5,157.2 218.1,166.4 232.4,166.7 245.0,167.2 251.4,165.2 265.6,153.8 275.1,149.0 283.0,149.3 289.4,152.2 300.0,153.6 308.0,156.6 317.4,157.2 331.7,157.7 342.8,161.7 357.0,162.5 366.5,160.0 372.9,162.5 395.0,162.5 417.2,163.6 423.6,165.2 439.4,165.2 450.0,161.8 462.7,156.1 478.5,150.3 491.2,152.2 500.7,155.7 513.4,160.0 524.5,161.4 538.7,158.5 545.0,155.7 553.0,154.0 560.9,149.8 570.4,146.2 587.8,146.2 600.0,149.0 615.8,150.3 633.3,150.3 644.4,154.6 650.7,156.1 663.4,156.6 676.0,159.3 685.5,162.5 704.5,162.5 717.2,160.0 731.5,160.9 742.0,160.1 751.5,160.9 761.0,164.0 772.1,168.0 778.4,170.9 789.5,167.2 797.4,162.5 803.8,156.1 811.7,153.4 824.4,151.4 840.2,153.0 852.9,152.2 862.4,154.6 868.7,157.0" fill="none" stroke="#00FF00" stroke-width="1" shape-rendering="crispEdges"/>
<polygon points="0.0,347.0 0.5,347.0 1.0,347.0 1.5,347.0 2.0,347.0 2.5,347.0 3.0,347.0 3.5,347.0 4.0,347.0 4.5,347.0 5.0,347.0 5.5,347.0 6.0,347.0 6.5,347.0 7.0,347.0 7.5,347.0 8.0,346.8 8.5,346.3 9.0,345.8 9.5,345.3 10.0,344.8 10.5,344.3 11.0,343.8 11.5,343.3 12.0,342.8 12.5,342.3 13.0,341.8 13.5,341.3 14.0,340.8 14.5,340.3 15.0,339.8 15.5,339.3 16.0,338.6 16.5,337.9 17.0,337.3 17.5,336.6 18.0,335.9 18.5,335.2 19.0,334.5 19.5,333.8 20.0,333.1 20.5,332.4 21.0,331.7 21.5,331.0 22.0,330.3 22.5,329.6 23.0,328.9 23.5,328.2 24.0,327.4 24.5,326.6 25.0,325.8 25.5,325.0 26.0,324.2 26.5,323.4 27.0,322.6 27.5,321.8 28.0,321.0 28.5,320.2 29.0,319.4 29.5,318.6 30.0,317.8 30.5,317.0 31.0,316.2 31.5,315.4 32.0,314.5 32.5,313.6 33.0,312.8 33.5,311.9 34.0,311.0 34.5,310.2 35.0,309.3 35.5,308.4 36.0,307.6 36.5,306.7 37.0,305.8 37.5,305.0 38.0,304.2 38.5,303.4 39.0,302.7 39.5,301.9 40.0,301.2 40.5,300.4 41.0,299.6 41.5,298.9 42.0,298.1 42.5,297.4 43.0,296.6 43.5,295.9 44.0,295.2 44.5,294.8 45.0,294.4 45.5,293.9 46.0,293.5 46.5,293.0 47.0,292.6 47.5,292.2 48.0,291.7 48.5,291.3 49.0,290.9 49.5,290.4 50.0,290.0 50.5,289.7 51.0,289.5 51.5,289.2 52.0,289.0 52.5,288.7 53.0,288.5 53.5,288.2 54.0,288.0 54.5,287.7 55.0,287.9 55.5,288.7 56.0,289.4 56.5,290.2 57.0,290.9 57.5,291.7 58.0,292.8 58.5,295.3 59.0,297.8 59.5,300.3 60.0,302.8 60.5,305.2 61.0,307.7 61.5,310.2 62.0,312.7 62.5,315.2 63.0,318.1 63.5,321.1 64.0,324.1 64.5,327.1 65.0,330.1 65.5,333.1 66.0,336.1 66.5,339.1 67.0,342.1 67.2,343.5 67.2,343.5 67.0,343.1 66.5,342.2 66.0,341.3 65.5,340.5 65.0,339.8 64.5,339.1 64.0,338.4 63.5,337.7 63.0,337.0 62.5,336.3 62.0,335.6 61.5,334.9 61.0,334.2 60.5,333.5 60.0,332.8 59.5,332.1 59.0,331.4 58.5,330.6 58.0,329.9 57.5,328.8 57.0,327.6 56.5,326.3 56.0,325.1 55.5,325.7 55.0,326.2 54.5,326.8 54.0,327.3 53.5,327.9 53.0,328.3 52.5,328.6 52.0,328.8 51.5,329.1 51.0,329.3 50.5,329.6 50.0,329.8 49.5,330.1 49.0,330.3 48.5,330.6 48.0,330.8 47.5,331.1 47.0,331.3 46.5,331.5 46.0,331.6 45.5,331.7 45.0,331.9 44.5,332.0 44.0,332.1 43.5,332.2 43.0,332.3 42.5,332.5 42.0,332.6 41.5,332.7 41.0,332.8 40.5,333.0 40.0,333.3 39.5,333.6 39.0,333.9 38.5,334.2 38.0,334.5 37.5,334.8 37.0,335.1 36.5,335.4 36.0,335.7 35.5,336.0 35.0,336.3 34.5,336.6 34.0,336.9 33.5,337.2 33.0,337.5 32.5,338.0 32.0,338.5 31.5,339.0 31.0,339.5 30.5,340.0 30.0,340.5 29.5,341.0 29.0,341.5 28.5,342.0 28.0,342.5 27.5,343.0 27.0,343.5 26.5,344.0 26.0,344.5 25.5,345.0 25.0,345.5 24.5,345.9 24.0,346.3 23.5,346.7 23.0,347.2 22.5,347.6 22.0,348.0 21.5,348.4 21.0,348.8 20.5,349.2 20.0,349.6 19.5,350.1 19.0,350.5 18.5,350.9 18.0,351.3 17.5,351.7 17.0,352.1 16.5,352.6 16.0,353.0 15.5,353.4 15.0,353.8 14.5,354.2 14.0,354.6 13.5,355.0 13.0,355.4 12.5,355.8 12.0,356.2 11.5,356.6 11.0,357.0 10.5,357.4 10.0,357.8 9.5,358.1 9.0,358.5 8.5,358.9 8.0,359.3 7.5,359.6 7.0,359.8 6.5,360.0 6.0,360.2 5.5,360.4 5.0,360.6 4.5,360.9 4.0,361.1 3.5,361.3 3.0,361.5 2.5,361.7 2.0,361.9 1.5,362.1 1.0,362.3 0.5,362.5 0.0,362.7" fill="#FFE4E1"/>
<polygon points="67.2,343.5 67.5,345.1 68.0,348.2 68.5,351.3 69.0,354.4 69.5,357.5 70.0,360.6 70.5,363.7 71.0,366.8 71.5,369.9 72.0,373.0 72.5,376.1 73.0,379.3 73.5,382.8 74.0,386.3 74.5,389.8 75.0,393.3 75.5,396.8 76.0,400.3 76.5,403.8 77.0,407.3 77.5,410.8 78.0,414.4 78.5,417.9 79.0,421.4 79.5,424.9 80.0,428.4 80.5,431.9 81.0,435.4 81.5,438.9 82.0,442.4 82.5,445.9 83.0,449.1 83.5,452.3 84.0,455.4 84.5,458.5 85.0,461.7 85.5,464.8 86.0,468.0 86.5,471.1 87.0,474.2 87.5,477.4 88.0,480.5 88.5,483.7 89.0,486.8 89.5,489.9 90.0,493.1 90.5,496.2 91.0,499.4 91.5,502.9 92.0,506.4 92.5,510.0 93.0,513.6 93.5,517.2 94.0,520.8 94.5,524.3 95.0,527.9 95.5,531.5 96.0,535.1 96.5,538.7 97.0,542.2 97.5,545.8 98.0,549.4 98.5,553.0 99.0,556.6 99.5,558.3 100.0,558.9 100.5,559.5 101.0,560.1 101.5,560.6 102.0,561.2 102.5,561.8 103.0,562.3 103.5,562.9 104.0,563.5 104.5,564.1 105.0,564.5 105.5,564.7 106.0,564.9 106.5,565.0 107.0,565.2 107.5,565.4 108.0,565.6 108.5,565.8 109.0,566.0 109.5,566.2 110.0,566.4 110.5,566.5 111.0,566.7 111.5,566.9 112.0,567.1 112.5,567.3 113.0,567.5 113.5,567.7 114.0,567.9 114.5,568.0 115.0,568.2 115.5,568.4 116.0,568.6 116.5,568.8 117.0,569.0 117.5,569.2 118.0,569.4 118.5,569.6 119.0,570.0 119.5,570.4 120.0,570.8 120.5,571.2 121.0,571.6 121.5,572.0 122.0,572.4 122.5,572.9 123.0,573.3 123.5,573.7 124.0,574.1 124.5,574.5 125.0,574.9 125.5,575.3 126.0,575.7 126.5,576.1 127.0,576.5 127.5,577.0 128.0,577.4 128.5,577.8 129.0,578.2 129.5,578.6 130.0,579.0 130.5,579.1 131.0,579.2 131.5,579.3 132.0,579.4 132.5,579.5 133.0,579.6 133.5,579.7 134.0,579.8 134.5,579.9 135.0,580.0 135.5,580.1 136.0,580.2 136.5,580.3 137.0,580.4 137.5,580.5 138.0,580.6 138.5,580.7 139.0,580.8 139.5,580.9 140.0,581.0 140.5,581.1 141.0,581.2 141.5,581.3 142.0,581.4 142.5,581.5 143.0,581.8 143.5,582.0 144.0,582.2 144.5,582.5 145.0,582.8 145.5,583.0 146.0,583.2 146.5,583.5 147.0,583.8 147.5,584.0 148.0,584.2 148.5,584.5 149.0,584.8 149.5,585.0 150.0,585.2 150.5,585.5 151.0,585.8 151.5,586.1 152.0,586.4 152.5,586.7 153.0,587.0 153.5,587.3 154.0,587.6 154.5,587.8 155.0,588.1 155.5,588.4 156.0,588.7 156.5,589.0 157.0,589.3 157.5,589.6 158.0,589.9 158.5,590.2 159.0,590.5 159.5,590.8 160.0,591.1 160.5,591.4 161.0,591.7 161.5,592.0 162.0,592.3 162.5,592.6 163.0,593.0 163.5,593.3 164.0,593.6 164.5,593.9 165.0,594.2 165.5,594.5 166.0,594.8 166.5,594.5 167.0,594.3 167.5,594.0 168.0,593.8 168.5,593.5 169.0,593.3 169.5,593.0 170.0,592.8 170.5,592.5 171.0,592.3 171.5,592.0 172.0,591.8 172.5,591.5 173.0,591.3 173.5,591.0 174.0,590.9 174.5,590.8 175.0,590.7 175.5,590.6 176.0,590.5 176.5,590.4 177.0,590.4 177.5,590.3 178.0,590.2 178.5,590.1 179.0,590.0 179.5,589.9 180.0,589.8 180.5,589.8 181.0,589.7 181.5,589.6 182.0,589.5 182.5,589.4 183.0,589.3 183.5,589.2 184.0,589.0 184.5,588.9 185.0,588.7 185.5,588.5 186.0,588.4 186.5,588.2 187.0,588.0 187.5,587.9 188.0,587.7 188.5,587.6 189.0,587.4 189.5,587.2 190.0,587.1 190.5,586.9 191.0,586.7 191.5,586.6 192.0,586.4 192.5,586.2 193.0,586.2 193.5,586.2 194.0,586.2 194.5,586.2 195.0,586.2 195.5,586.2 196.0,586.2 196.5,586.2 197.0,586.2 197.5,586.2 198.0,586.2 198.5,586.2 199.0,586.2 199.5,586.2 200.0,586.2 200.5,586.2 201.0,586.2 201.5,586.2 202.0,586.2 202.5,586.3 203.0,586.5 203.5,586.6 204.0,586.8 204.5,586.9 205.0,587.1 205.5,587.2 206.0,587.4 206.5,587.5 207.0,587.7 207.5,587.8 208.0,588.0 208.5,588.1 209.0,588.3 209.5,588.4 210.0,588.7 210.5,589.3 211.0,589.9 211.5,590.5 212.0,591.2 212.5,591.8 213.0,592.4 213.5,593.0 214.0,593.6 214.5,594.2 215.0,594.8 215.5,595.4 216.0,596.0 216.5,596.6 217.0,597.2 217.5,597.8 218.0,598.3 218.5,598.7 219.0,599.1 219.5,599.6 220.0,600.0 220.5,600.5 221.0,600.9 221.5,601.4 222.0,601.8 222.5,602.2 223.0,602.7 223.5,603.1 224.0,603.6 224.5,604.0 225.0,604.5 225.5,604.9 226.0,605.4 226.5,605.8 227.0,606.2 227.5,606.7 228.0,607.1 228.5,607.6 229.0,608.0 229.5,608.5 230.0,608.9 230.5,609.6 231.0,610.4 231.5,611.1 232.0,611.9 232.5,612.6 233.0,613.3 233.5,614.1 234.0,614.8 234.5,615.5 235.0,616.3 235.5,617.0 236.0,617.8 236.5,618.4 237.0,618.7 237.5,619.1 238.0,619.5 238.5,619.9 239.0,620.3 239.5,620.6 240.0,621.0 240.5,621.4 241.0,621.8 241.5,622.2 242.0,622.6 242.5,622.9 243.0,623.3 243.5,623.7 244.0,624.1 244.5,624.5 245.0,624.8 245.5,625.2 246.0,625.3 246.5,625.3 247.0,625.3 247.5,625.3 248.0,625.3 248.5,625.3 249.0,625.3 249.5,625.3 250.0,625.3 250.5,625.1 251.0,624.7 251.5,624.2 252.0,623.7 252.5,623.3 253.0,622.8 253.5,622.3 254.0,621.9 254.5,621.4 255.0,620.9 255.5,620.5 256.0,620.0 256.5,619.6 257.0,619.1 257.5,618.6 258.0,618.2 258.5,617.7 259.0,617.2 259.5,616.8 260.0,616.3 260.5,615.8 261.0,615.4 261.5,614.9 262.0,614.4 262.5,613.9 263.0,613.4 263.5,612.9 264.0,612.4 264.5,611.9 265.0,611.4 265.5,610.9 266.0,610.4 266.5,609.9 267.0,609.4 267.5,608.9 268.0,608.4 268.5,607.9 269.0,607.4 269.5,606.9 270.0,606.4 270.5,605.9 271.0,605.3 271.5,604.8 272.0,604.2 272.5,603.6 273.0,603.0 273.5,602.4 274.0,601.8 274.5,601.2 275.0,600.7 275.3,600.3 275.3,600.3 275.0,600.3 274.5,600.3 274.0,600.4 273.5,600.4 273.0,600.4 272.5,600.4 272.0,600.5 271.5,600.5 271.0,600.5 270.5,600.5 270.0,600.6 269.5,600.6 269.0,600.6 268.5,600.6 268.0,600.7 267.5,600.7 267.0,600.7 266.5,600.7 266.0,600.8 265.5,600.8 265.0,600.8 264.5,600.8 264.0,600.9 263.5,600.9 263.0,600.9 262.5,600.9 262.0,601.0 261.5,601.0 261.0,601.0 260.5,601.1 260.0,601.1 259.5,601.2 259.0,601.2 258.5,601.3 258.0,601.3 257.5,601.4 257.0,601.4 256.5,601.5 256.0,601.5 255.5,601.6 255.0,601.6 254.5,601.7 254.0,601.7 253.5,601.8 253.0,601.8 252.5,601.9 252.0,601.9 251.5,602.0 251.0,602.0 250.5,602.1 250.0,602.2 249.5,602.2 249.0,602.3 248.5,602.3 248.0,602.4 247.5,602.4 247.0,602.5 246.5,602.5 246.0,602.6 245.5,602.5 245.0,602.2 244.5,601.9 244.0,601.6 243.5,601.3 243.0,601.0 242.5,600.7 242.0,600.4 241.5,600.1 241.0,599.8 240.5,599.5 240.0,599.2 239.5,598.9 239.0,598.6 238.5,598.3 238.0,598.0 237.5,597.8 237.0,597.5 236.5,597.2 236.0,597.0 235.5,596.8 235.0,596.5 234.5,596.2 234.0,596.0 233.5,595.8 233.0,595.5 232.5,595.2 232.0,595.0 231.5,594.8 231.0,594.5 230.5,594.2 230.0,594.0 229.5,593.8 229.0,593.7 228.5,593.5 228.0,593.4 227.5,593.2 227.0,593.0 226.5,592.9 226.0,592.7 225.5,592.5 225.0,592.4 224.5,592.2 224.0,592.1 223.5,591.9 223.0,591.7 222.5,591.6 222.0,591.4 221.5,591.3 221.0,591.1 220.5,590.9 220.0,590.8 219.5,590.6 219.0,590.5 218.5,590.3 218.0,590.1 217.5,590.0 217.0,589.7 216.5,589.5 216.0,589.2 215.5,589.0 215.0,588.7 214.5,588.5 214.0,588.2 213.5,588.0 213.0,587.7 212.5,587.5 212.0,587.3 211.5,587.0 211.0,586.8 210.5,586.5 210.0,586.3 209.5,586.0 209.0,585.8 208.5,585.5 208.0,585.3 207.5,585.1 207.0,584.9 206.5,584.8 206.0,584.6 205.5,584.4 205.0,584.2 204.5,584.0 204.0,583.8 203.5,583.6 203.0,583.4 202.5,583.3 202.0,583.1 201.5,582.9 201.0,582.7 200.5,582.5 200.0,582.3 199.5,582.1 199.0,581.9 198.5,581.8 198.0,581.6 197.5,581.4 197.0,581.2 196.5,581.0 196.0,580.8 195.5,580.6 195.0,580.5 194.5,580.3 194.0,580.2 193.5,580.0 193.0,579.9 192.5,579.7 192.0,579.6 191.5,579.4 191.0,579.3 190.5,579.1 190.0,578.9 189.5,578.8 189.0,578.6 188.5,578.5 188.0,578.3 187.5,578.2 187.0,578.0 186.5,577.8 186.0,577.6 185.5,577.4 185.0,577.2 184.5,577.1 184.0,576.9 183.5,576.7 183.0,576.5 182.5,576.3 182.0,576.1 181.5,575.8 181.0,574.7 180.5,573.6 180.0,572.6 179.5,571.5 179.0,570.4 178.5,569.4 178.0,568.3 177.5,567.2 177.0,566.1 176.5,565.1 176.0,564.0 175.5,562.5 175.0,561.1 174.5,559.6 174.0,558.2 173.5,556.7 173.0,555.3 172.5,553.8 172.0,552.4 171.5,550.9 171.0,549.5 170.5,548.0 170.0,546.5 169.5,545.1 169.0,543.6 168.5,542.2 168.0,540.7 167.5,539.3 167.0,537.8 166.5,536.4 166.0,534.9 165.5,533.5 165.0,532.0 164.5,530.9 164.0,529.8 163.5,528.7 163.0,527.6 162.5,526.4 162.0,525.3 161.5,524.2 161.0,523.1 160.5,522.0 160.0,520.9 159.5,519.8 159.0,518.7 158.5,517.6 158.0,516.4 157.5,515.3 157.0,514.2 156.5,513.1 156.0,512.0 155.5,510.9 155.0,509.8 154.5,508.7 154.0,507.6 153.5,506.4 153.0,505.3 152.5,504.2 152.0,503.1 151.5,502.0 151.0,500.9 150.5,499.8 150.0,498.8 149.5,497.8 149.0,496.8 148.5,495.8 148.0,494.8 147.5,493.8 147.0,492.8 146.5,491.8 146.0,490.8 145.5,489.8 145.0,488.8 144.5,487.8 144.0,486.8 143.5,485.8 143.0,484.8 142.5,483.8 142.0,482.8 141.5,481.8 141.0,480.8 140.5,479.8 140.0,478.8 139.5,477.8 139.0,476.8 138.5,475.8 138.0,474.8 137.5,473.8 137.0,472.8 136.5,471.8 136.0,470.8 135.5,469.8 135.0,468.8 134.5,467.8 134.0,466.8 133.5,465.8 133.0,464.8 132.5,463.8 132.0,462.8 131.5,461.8 131.0,460.8 130.5,459.8 130.0,458.8 129.5,457.8 129.0,456.8 128.5,455.8 128.0,454.8 127.5,453.8 127.0,452.8 126.5,451.8 126.0,450.8 125.5,449.8 125.0,448.8 124.5,447.8 124.0,446.8 123.5,445.8 123.0,444.8 122.5,443.8 122.0,442.8 121.5,441.8 121.0,440.8 120.5,439.8 120.0,438.8 119.5,437.8 119.0,436.8 118.5,435.8 118.0,434.8 117.5,433.8 117.0,432.8 116.5,431.8 116.0,430.8 115.5,429.8 115.0,428.8 114.5,427.8 114.0,426.8 113.5,425.8 113.0,424.8 112.5,423.8 112.0,422.8 111.5,421.8 111.0,420.8 110.5,419.8 110.0,418.8 109.5,417.8 109.0,416.8 108.5,415.8 108.0,414.8 107.5,413.8 107.0,412.8 106.5,411.8 106.0,410.8 105.5,409.8 105.0,408.8 104.5,407.8 104.0,406.8 103.5,405.8 103.0,404.8 102.5,403.8 102.0,402.8 101.5,401.8 101.0,400.8 100.5,399.8 100.0,398.8 99.5,397.8 99.0,396.8 98.5,395.8 98.0,394.8 97.5,393.8 97.0,392.9 96.5,392.1 96.0,391.3 95.5,390.5 95.0,389.7 94.5,388.9 94.0,388.2 93.5,387.4 93.0,386.6 92.5,385.8 92.0,385.0 91.5,384.2 91.0,383.4 90.5,382.6 90.0,381.8 89.5,381.1 89.0,380.3 88.5,379.5 88.0,378.7 87.5,377.9 87.0,377.1 86.5,376.3 86.0,375.5 85.5,374.8 85.0,374.0 84.5,373.2 84.0,372.4 83.5,371.6 83.0,370.8 82.5,370.0 82.0,369.2 81.5,368.4 81.0,367.7 80.5,366.9 80.0,366.0 79.5,365.2 79.0,364.3 78.5,363.4 78.0,362.5 77.5,361.6 77.0,360.8 76.5,359.9 76.0,359.0 75.5,358.1 75.0,357.2 74.5,356.3 74.0,355.5 73.5,354.6 73.0,353.7 72.5,352.8 72.0,351.9 71.5,351.0 71.0,350.2 70.5,349.3 70.0,348.4 69.5,347.5 69.0,346.6 68.5,345.7 68.0,344.9 67.5,344.0 67.2,343.5" fill="#BBFFFF"/>
<polygon points="275.3,600.3 275.5,600.1 276.0,599.5 276.5,598.9 277.0,598.3 277.5,597.7 278.0,597.1 278.5,596.6 279.0,596.0 279.5,595.4 280.0,594.8 280.5,594.3 281.0,593.8 281.5,593.3 282.0,592.8 282.5,592.3 283.0,591.8 283.5,591.3 284.0,590.8 284.5,590.3 285.0,589.8 285.5,589.3 286.0,588.8 286.5,588.4 287.0,588.3 287.5,588.1 288.0,587.9 288.5,587.8 289.0,587.6 289.5,587.4 290.0,587.3 290.5,587.1 291.0,587.0 291.5,586.8 292.0,586.6 292.5,586.5 293.0,586.3 293.5,586.1 294.0,586.0 294.5,585.8 295.0,585.6 295.5,585.5 296.0,585.5 296.5,585.6 297.0,585.7 297.5,585.9 298.0,586.0 298.5,586.1 299.0,586.2 299.5,586.4 300.0,586.5 300.5,586.6 301.0,586.7 301.5,586.9 302.0,587.0 302.5,587.5 303.0,588.0 303.5,588.5 304.0,589.0 304.5,589.5 305.0,590.0 305.5,590.5 306.0,591.0 306.5,591.5 307.0,592.0 307.5,592.5 308.0,593.0 308.5,593.3 309.0,593.5 309.5,593.6 310.0,593.8 310.5,594.0 311.0,594.1 311.5,594.3 312.0,594.5 312.5,594.6 313.0,594.8 313.5,594.9 314.0,595.1 314.5,595.3 315.0,595.4 315.5,595.6 316.0,595.8 316.5,595.9 317.0,596.1 317.5,596.3 318.0,596.3 318.5,596.2 319.0,596.2 319.5,596.1 320.0,596.1 320.5,596.1 321.0,596.0 321.5,596.0 322.0,595.9 322.5,595.9 323.0,595.9 323.5,595.8 324.0,595.8 324.5,595.7 325.0,595.7 325.5,595.7 326.0,595.6 326.5,595.6 327.0,595.5 327.5,595.5 328.0,595.5 328.5,595.4 329.0,595.4 329.5,595.3 330.0,595.3 330.5,595.6 331.0,596.0 331.5,596.3 332.0,596.7 332.5,597.0 333.0,597.4 333.5,597.7 334.0,598.1 334.5,598.4 335.0,598.8 335.5,599.1 336.0,599.4 336.5,599.8 337.0,600.1 337.5,600.3 338.0,600.6 338.5,600.8 339.0,601.1 339.5,601.3 340.0,601.6 340.5,601.8 341.0,602.1 341.5,602.3 342.0,602.5 342.5,602.8 342.5,602.8 342.0,602.8 341.5,602.8 341.0,602.8 340.5,602.8 340.0,602.8 339.5,602.8 339.0,602.8 338.5,602.8 338.0,602.9 337.5,602.9 337.0,602.9 336.5,602.9 336.0,602.9 335.5,602.9 335.0,602.9 334.5,602.9 334.0,602.9 333.5,602.9 333.0,602.9 332.5,603.0 332.0,603.0 331.5,603.0 331.0,603.0 330.5,603.0 330.0,603.0 329.5,603.0 329.0,603.0 328.5,603.0 328.0,603.0 327.5,602.9 327.0,602.9 326.5,602.9 326.0,602.9 325.5,602.9 325.0,602.9 324.5,602.9 324.0,602.9 323.5,602.9 323.0,602.8 322.5,602.8 322.0,602.8 321.5,602.8 321.0,602.8 320.5,602.8 320.0,602.8 319.5,602.8 319.0,602.8 318.5,602.8 318.0,602.7 317.5,602.7 317.0,602.7 316.5,602.7 316.0,602.7 315.5,602.7 315.0,602.7 314.5,602.7 314.0,602.7 313.5,602.6 313.0,602.6 312.5,602.6 312.0,602.6 311.5,602.6 311.0,602.5 310.5,602.4 310.0,602.4 309.5,602.3 309.0,602.2 308.5,602.1 308.0,602.0 307.5,601.9 307.0,601.9 306.5,601.8 306.0,601.7 305.5,601.6 305.0,601.5 304.5,601.4 304.0,601.3 303.5,601.3 303.0,601.2 302.5,601.1 302.0,601.0 301.5,600.9 301.0,600.8 300.5,600.8 300.0,600.7 299.5,600.6 299.0,600.5 298.5,600.4 298.0,600.4 297.5,600.3 297.0,600.2 296.5,600.1 296.0,600.0 295.5,600.0 295.0,599.9 294.5,599.8 294.0,599.7 293.5,599.6 293.0,599.6 292.5,599.5 292.0,599.5 291.5,599.5 291.0,599.6 290.5,599.6 290.0,599.6 289.5,599.6 289.0,599.7 288.5,599.7 288.0,599.7 287.5,599.7 287.0,599.8 286.5,599.8 286.0,599.8 285.5,599.8 285.0,599.8 284.5,599.9 284.0,599.9 283.5,599.9 283.0,599.9 282.5,600.0 282.0,600.0 281.5,600.0 281.0,600.0 280.5,600.0 280.0,600.1 279.5,600.1 279.0,600.1 278.5,600.1 278.0,600.2 277.5,600.2 277.0,600.2 276.5,600.2 276.0,600.3 275.5,600.3 275.3,600.3" fill="#FFE4E1"/>
<polygon points="342.5,602.8 342.5,602.8 343.0,603.0 343.5,603.3 344.0,603.5 344.5,603.8 345.0,604.0 345.5,604.3 346.0,604.5 346.5,604.8 347.0,605.0 347.5,605.1 348.0,605.3 348.5,605.4 349.0,605.5 349.5,605.6 350.0,605.8 350.5,605.9 351.0,606.0 351.5,606.2 352.0,606.3 352.5,606.4 353.0,606.5 353.5,606.7 354.0,606.8 354.5,606.9 355.0,607.1 355.5,607.2 356.0,607.3 356.5,607.4 357.0,607.6 357.5,607.6 358.0,607.6 358.5,607.6 359.0,607.6 359.5,607.6 360.0,607.6 360.5,607.6 361.0,607.6 361.5,607.6 362.0,607.6 362.5,607.6 363.0,607.6 363.5,607.6 364.0,607.7 364.5,608.4 365.0,609.0 365.5,609.6 366.0,610.2 366.5,610.9 367.0,611.5 367.5,612.1 368.0,612.7 368.5,613.4 369.0,614.0 369.5,614.6 370.0,615.2 370.5,615.9 371.0,616.2 371.5,616.4 372.0,616.6 372.5,616.8 373.0,617.0 373.5,617.2 374.0,617.4 374.5,617.6 375.0,617.8 375.5,618.0 376.0,618.2 376.5,618.4 377.0,618.6 377.5,618.8 378.0,619.0 378.5,619.2 379.0,619.4 379.5,619.6 380.0,619.7 380.5,619.8 381.0,620.0 381.5,620.1 382.0,620.2 382.5,620.3 383.0,620.5 383.5,620.6 384.0,620.7 384.5,620.8 385.0,621.0 385.5,621.1 386.0,621.2 386.5,621.3 387.0,621.4 387.5,621.5 388.0,621.6 388.5,621.6 389.0,621.7 389.5,621.8 390.0,621.9 390.5,622.0 391.0,622.0 391.5,622.1 392.0,622.2 392.5,622.3 393.0,622.4 393.5,622.5 394.0,622.5 394.5,622.6 395.0,622.7 395.5,622.8 396.0,622.9 396.5,623.2 397.0,623.6 397.5,623.9 398.0,624.3 398.5,624.7 399.0,625.1 399.5,625.5 400.0,625.8 400.5,626.2 401.0,626.6 401.5,627.0 402.0,627.3 402.5,627.7 403.0,628.1 403.5,628.4 404.0,628.8 404.5,629.1 405.0,629.5 405.5,629.8 406.0,630.2 406.5,630.5 407.0,630.8 407.5,631.2 408.0,631.5 408.5,631.9 409.0,632.2 409.5,632.6 410.0,632.9 410.5,633.3 411.0,633.6 411.5,633.9 412.0,634.1 412.5,634.3 413.0,634.5 413.5,634.7 414.0,634.9 414.5,635.1 415.0,635.2 415.5,635.4 416.0,635.6 416.5,635.8 417.0,636.0 417.5,636.2 418.0,636.4 418.5,636.7 419.0,637.1 419.5,637.4 420.0,637.8 420.5,638.1 421.0,638.5 421.5,638.9 422.0,639.2 422.5,639.6 423.0,639.9 423.5,640.3 424.0,640.7 424.5,641.0 425.0,641.4 425.5,641.7 426.0,642.1 426.5,642.5 427.0,642.8 427.5,643.2 428.0,643.6 428.5,643.9 429.0,644.3 429.5,644.6 430.0,645.0 430.5,645.3 431.0,645.6 431.5,645.9 432.0,646.2 432.5,646.5 433.0,646.8 433.5,647.1 434.0,647.4 434.5,647.6 435.0,647.9 435.5,648.2 436.0,648.5 436.5,648.8 437.0,649.1 437.5,649.4 438.0,649.7 438.5,650.0 439.0,650.1 439.5,650.2 440.0,650.3 440.5,650.3 441.0,650.4 441.5,650.5 442.0,650.6 442.5,650.7 443.0,650.8 443.5,650.8 444.0,650.9 444.5,651.0 445.0,651.1 445.5,651.2 446.0,651.3 446.5,651.3 447.0,651.4 447.5,651.5 448.0,651.6 448.5,651.7 449.0,651.6 449.5,651.6 450.0,651.5 450.5,651.4 451.0,651.3 451.5,651.2 452.0,651.1 452.5,651.1 453.0,651.0 453.5,650.9 454.0,650.8 454.5,650.7 455.0,650.6 455.5,650.6 456.0,650.5 456.5,650.4 457.0,650.3 457.5,650.2 458.0,650.1 458.5,650.0 459.0,649.8 459.5,649.3 460.0,648.8 460.5,648.3 461.0,647.8 461.5,647.3 462.0,646.8 462.5,646.3 463.0,645.8 463.5,645.3 464.0,644.8 464.5,644.3 465.0,643.8 465.5,643.3 466.0,642.8 466.5,642.3 467.0,641.8 467.5,641.3 468.0,640.7 468.5,640.1 469.0,639.5 469.5,639.0 470.0,638.4 470.5,637.8 471.0,637.2 471.5,636.6 472.0,636.1 472.5,635.5 473.0,634.9 473.5,634.3 474.0,633.7 474.4,633.3 474.4,633.3 474.0,633.4 473.5,633.4 473.0,633.4 472.5,633.4 472.0,633.5 471.5,633.5 471.0,633.5 470.5,633.5 470.0,633.6 469.5,633.6 469.0,633.6 468.5,633.7 468.0,633.7 467.5,633.7 467.0,633.7 466.5,633.8 466.0,633.8 465.5,633.8 465.0,633.8 464.5,633.9 464.0,633.9 463.5,633.9 463.0,633.9 462.5,633.9 462.0,633.9 461.5,633.9 461.0,633.9 460.5,633.9 460.0,633.9 459.5,633.9 459.0,633.9 458.5,633.9 458.0,633.9 457.5,633.9 457.0,633.9 456.5,633.9 456.0,633.9 455.5,633.9 455.0,633.9 454.5,633.9 454.0,633.9 453.5,633.8 453.0,633.4 452.5,633.0 452.0,632.6 451.5,632.3 451.0,631.9 450.5,631.5 450.0,631.3 449.5,631.1 449.0,630.8 448.5,630.6 448.0,630.4 447.5,630.2 447.0,630.0 446.5,629.8 446.0,629.6 445.5,629.4 445.0,629.1 444.5,628.9 444.0,628.7 443.5,628.5 443.0,628.3 442.5,628.1 442.0,627.9 441.5,627.7 441.0,627.4 440.5,627.2 440.0,627.0 439.5,626.9 439.0,626.7 438.5,626.6 438.0,626.4 437.5,626.3 437.0,626.1 436.5,626.0 436.0,625.8 435.5,625.7 435.0,625.5 434.5,625.4 434.0,625.2 433.5,625.1 433.0,624.9 432.5,624.8 432.0,624.6 431.5,624.5 431.0,624.3 430.5,624.2 430.0,624.0 429.5,623.7 429.0,623.5 428.5,623.2 428.0,623.0 427.5,622.7 427.0,622.4 426.5,622.2 426.0,621.9 425.5,621.7 425.0,621.4 424.5,621.1 424.0,620.9 423.5,620.6 423.0,620.4 422.5,620.1 422.0,619.8 421.5,619.6 421.0,619.3 420.5,619.1 420.0,618.8 419.5,618.5 419.0,618.3 418.5,618.0 418.0,617.8 417.5,617.6 417.0,617.3 416.5,617.1 416.0,616.9 415.5,616.7 415.0,616.5 414.5,616.3 414.0,616.1 413.5,615.9 413.0,615.7 412.5,615.5 412.0,615.3 411.5,615.1 411.0,614.8 410.5,614.6 410.0,614.4 409.5,614.2 409.0,614.0 408.5,613.8 408.0,613.6 407.5,613.4 407.0,613.1 406.5,612.9 406.0,612.6 405.5,612.4 405.0,612.1 404.5,611.9 404.0,611.6 403.5,611.4 403.0,611.1 402.5,610.9 402.0,610.6 401.5,610.4 401.0,610.1 400.5,609.9 400.0,609.6 399.5,609.4 399.0,609.1 398.5,608.9 398.0,608.6 397.5,608.4 397.0,608.2 396.5,608.0 396.0,607.7 395.5,607.5 395.0,607.3 394.5,607.1 394.0,606.9 393.5,606.7 393.0,606.5 392.5,606.3 392.0,606.1 391.5,605.8 391.0,605.6 390.5,605.4 390.0,605.2 389.5,605.0 389.0,604.8 388.5,604.6 388.0,604.4 387.5,604.1 387.0,603.9 386.5,603.6 386.0,603.4 385.5,603.1 385.0,602.9 384.5,602.6 384.0,602.4 383.5,602.1 383.0,601.9 382.5,601.6 382.0,601.4 381.5,601.1 381.0,600.9 380.5,600.8 380.0,600.7 379.5,600.7 379.0,600.6 378.5,600.6 378.0,600.5 377.5,600.5 377.0,600.4 376.5,600.4 376.0,600.3 375.5,600.3 375.0,600.3 374.5,600.2 374.0,600.2 373.5,600.1 373.0,600.1 372.5,600.0 372.0,600.0 371.5,599.9 371.0,599.9 370.5,599.8 370.0,599.8 369.5,599.7 369.0,599.7 368.5,599.6 368.0,599.6 367.5,599.5 367.0,599.5 366.5,599.4 366.0,599.4 365.5,599.4 365.0,599.3 364.5,599.3 364.0,599.2 363.5,599.4 363.0,599.6 362.5,599.9 362.0,600.1 361.5,600.4 361.0,600.6 360.5,600.9 360.0,601.1 359.5,601.3 359.0,601.6 358.5,601.8 358.0,602.1 357.5,602.3 357.0,602.5 356.5,602.5 356.0,602.5 355.5,602.5 355.0,602.5 354.5,602.5 354.0,602.6 353.5,602.6 353.0,602.6 352.5,602.6 352.0,602.6 351.5,602.6 351.0,602.6 350.5,602.6 350.0,602.6 349.5,602.6 349.0,602.6 348.5,602.7 348.0,602.7 347.5,602.7 347.0,602.7 346.5,602.7 346.0,602.7 345.5,602.7 345.0,602.7 344.5,602.7 344.0,602.7 343.5,602.8 343.0,602.8 342.5,602.8 342.5,602.8" fill="#BBFFFF"/>
<polygon points="474.4,633.3 474.5,633.2 475.0,632.6 475.5,632.0 476.0,631.4 476.5,630.9 477.0,630.3 477.5,629.7 478.0,629.3 478.5,628.8 479.0,628.4 479.5,627.9 480.0,627.5 480.5,627.0 481.0,626.6 481.5,626.1 482.0,625.7 482.5,625.2 483.0,624.8 483.5,624.3 484.0,623.9 484.5,623.6 485.0,623.4 485.5,623.2 486.0,623.0 486.5,622.9 487.0,622.7 487.5,622.5 488.0,622.3 488.5,622.1 489.0,621.9 489.5,621.8 490.0,621.6 490.5,621.4 491.0,621.2 491.5,621.3 492.0,621.4 492.5,621.4 493.0,621.5 493.5,621.6 494.0,621.7 494.5,621.7 495.0,621.8 495.5,621.9 496.0,622.0 496.5,622.0 497.0,622.1 497.5,622.2 498.0,622.3 498.5,622.3 499.0,622.4 499.5,622.5 500.0,622.9 500.5,623.3 501.0,623.7 501.5,624.1 502.0,624.5 502.5,624.9 503.0,625.3 503.5,625.7 504.0,626.1 504.5,626.5 505.0,626.9 505.5,627.4 506.0,627.8 506.5,628.2 507.0,628.7 507.5,629.2 508.0,629.7 508.5,630.2 509.0,630.7 509.5,631.2 510.0,631.7 510.5,632.2 511.0,632.7 511.5,633.2 512.0,633.7 512.5,634.2 513.0,634.7 513.5,635.2 514.0,635.7 514.5,636.2 515.0,636.6 515.5,636.9 516.0,637.2 516.5,637.5 517.0,637.9 517.1,637.9 517.1,637.9 517.0,637.9 516.5,637.8 516.0,637.7 515.5,637.7 515.0,637.6 514.5,637.5 514.0,637.4 513.5,637.3 513.0,637.2 512.5,637.2 512.0,637.1 511.5,637.0 511.0,636.9 510.5,636.8 510.0,636.7 509.5,636.7 509.0,636.6 508.5,636.5 508.0,636.4 507.5,636.4 507.0,636.3 506.5,636.3 506.0,636.2 505.5,636.2 505.0,636.2 504.5,636.1 504.0,636.1 503.5,636.0 503.0,636.0 502.5,636.0 502.0,635.9 501.5,635.9 501.0,635.9 500.5,635.8 500.0,635.8 499.5,635.7 499.0,635.7 498.5,635.7 498.0,635.6 497.5,635.5 497.0,635.4 496.5,635.3 496.0,635.2 495.5,635.1 495.0,635.0 494.5,634.9 494.0,634.8 493.5,634.7 493.0,634.6 492.5,634.5 492.0,634.4 491.5,634.3 491.0,634.2 490.5,634.1 490.0,634.0 489.5,633.9 489.0,633.9 488.5,633.8 488.0,633.8 487.5,633.7 487.0,633.7 486.5,633.6 486.0,633.6 485.5,633.5 485.0,633.4 484.5,633.4 484.0,633.3 483.5,633.3 483.0,633.2 482.5,633.2 482.0,633.1 481.5,633.1 481.0,633.0 480.5,633.0 480.0,633.0 479.5,633.1 479.0,633.1 478.5,633.1 478.0,633.1 477.5,633.2 477.0,633.2 476.5,633.2 476.0,633.3 475.5,633.3 475.0,633.3 474.5,633.3 474.4,633.3" fill="#FFE4E1"/>
<polygon points="517.1,637.9 517.5,638.2 518.0,638.5 518.5,638.8 519.0,639.1 519.5,639.4 520.0,639.8 520.5,640.1 521.0,640.4 521.5,640.7 522.0,640.8 522.5,640.8 523.0,640.9 523.5,640.9 524.0,641.0 524.5,641.0 525.0,641.1 525.5,641.1 526.0,641.2 526.5,641.2 527.0,641.3 527.5,641.3 528.0,641.4 528.5,641.4 529.0,641.5 529.5,641.5 530.0,641.6 530.5,641.6 531.0,641.6 531.5,641.6 532.0,641.6 532.5,641.6 533.0,641.6 533.5,641.6 534.0,641.6 534.5,641.6 535.0,641.7 535.5,641.7 536.0,641.7 536.5,641.7 537.0,641.7 537.5,641.7 538.0,641.7 538.5,641.7 539.0,641.7 539.5,641.6 540.0,641.4 540.5,641.1 541.0,640.9 541.5,640.6 542.0,640.4 542.5,640.1 543.0,639.9 543.5,639.6 544.0,639.4 544.5,639.1 545.0,638.9 545.5,638.6 546.0,638.4 546.5,638.1 547.0,637.9 547.5,637.6 548.0,637.4 548.5,637.1 549.0,636.8 549.5,636.3 550.0,635.8 550.5,635.3 551.0,634.8 551.5,634.3 552.0,633.8 552.5,633.3 552.6,633.2 552.6,633.2 552.5,633.2 552.0,633.4 551.5,633.6 551.0,633.8 550.5,634.0 550.0,634.2 549.5,634.4 549.0,634.6 548.5,634.7 548.0,634.9 547.5,635.1 547.0,635.3 546.5,635.5 546.0,635.7 545.5,635.9 545.0,636.1 544.5,636.2 544.0,636.4 543.5,636.6 543.0,636.8 542.5,637.0 542.0,637.0 541.5,637.0 541.0,637.1 540.5,637.1 540.0,637.1 539.5,637.1 539.0,637.1 538.5,637.2 538.0,637.2 537.5,637.2 537.0,637.2 536.5,637.2 536.0,637.3 535.5,637.3 535.0,637.3 534.5,637.3 534.0,637.3 533.5,637.4 533.0,637.4 532.5,637.4 532.0,637.4 531.5,637.4 531.0,637.5 530.5,637.5 530.0,637.5 529.5,637.5 529.0,637.6 528.5,637.6 528.0,637.6 527.5,637.6 527.0,637.7 526.5,637.7 526.0,637.7 525.5,637.7 525.0,637.8 524.5,637.8 524.0,637.8 523.5,637.8 523.0,637.9 522.5,637.9 522.0,637.9 521.5,637.9 521.0,638.0 520.5,638.0 520.0,638.0 519.5,638.0 519.0,638.1 518.5,638.1 518.0,638.1 517.5,638.0 517.1,637.9" fill="#BBFFFF"/>
<polygon points="552.6,633.2 553.0,632.8 553.5,632.3 554.0,631.8 554.5,631.3 555.0,630.8 555.5,630.3 556.0,629.8 556.5,629.3 557.0,628.6 557.5,627.9 558.0,627.2 558.5,626.5 559.0,625.8 559.5,625.1 560.0,624.4 560.5,623.7 561.0,623.0 561.5,622.3 562.0,621.6 562.5,620.9 563.0,620.2 563.5,619.5 564.0,618.8 564.5,618.1 565.0,617.4 565.5,616.7 566.0,616.1 566.5,615.4 567.0,614.7 567.5,614.1 568.0,613.4 568.5,612.7 569.0,612.1 569.5,611.4 570.0,610.8 570.5,610.1 571.0,609.4 571.5,608.8 572.0,608.1 572.5,607.4 573.0,606.8 573.5,606.1 574.0,605.5 574.5,605.0 575.0,604.5 575.5,604.0 576.0,603.5 576.5,603.0 577.0,602.5 577.5,602.0 578.0,601.5 578.5,601.0 579.0,600.5 579.5,600.0 580.0,599.5 580.5,599.0 581.0,598.5 581.5,598.0 582.0,597.5 582.5,597.0 583.0,596.5 583.5,596.1 584.0,595.6 584.5,595.2 585.0,594.8 585.5,594.4 586.0,594.0 586.5,593.6 587.0,593.1 587.5,592.7 588.0,592.3 588.5,591.9 589.0,591.5 589.5,591.1 590.0,590.7 590.5,590.2 591.0,589.8 591.5,589.4 592.0,589.0 592.5,588.6 593.0,588.4 593.5,588.3 594.0,588.2 594.5,588.0 595.0,587.9 595.5,587.8 596.0,587.7 596.5,587.5 597.0,587.4 597.5,587.3 598.0,587.2 598.5,587.1 599.0,586.9 599.5,586.8 600.0,586.7 600.5,586.6 601.0,586.4 601.5,586.3 602.0,586.2 602.5,586.0 603.0,585.9 603.5,585.7 604.0,585.5 604.5,585.3 605.0,585.2 605.5,585.0 606.0,584.8 606.5,584.7 607.0,584.5 607.5,584.3 608.0,584.2 608.5,584.0 609.0,583.8 609.5,583.6 610.0,583.5 610.5,583.3 611.0,583.1 611.5,583.0 612.0,582.8 612.5,582.6 613.0,582.5 613.5,582.3 614.0,582.1 614.5,582.0 615.0,581.8 615.5,581.6 616.0,581.5 616.5,581.3 617.0,581.2 617.5,581.0 618.0,580.8 618.5,580.7 619.0,580.5 619.5,580.3 620.0,580.2 620.5,580.0 621.0,579.8 621.5,579.7 622.0,579.5 622.5,579.3 623.0,579.2 623.5,579.0 624.0,578.8 624.5,578.7 625.0,578.5 625.5,578.3 626.0,578.1 626.5,578.0 627.0,577.8 627.5,577.6 628.0,577.5 628.5,577.3 629.0,577.1 629.5,577.0 630.0,576.8 630.5,576.8 631.0,576.8 631.5,576.9 632.0,576.9 632.5,576.9 633.0,576.9 633.5,576.9 634.0,577.0 634.5,577.0 635.0,577.0 635.5,577.0 636.0,577.1 636.5,577.1 637.0,577.1 637.5,577.1 638.0,577.1 638.5,577.2 639.0,577.2 639.5,577.2 640.0,577.3 640.5,577.4 641.0,577.4 641.5,577.5 642.0,577.6 642.5,577.7 643.0,577.7 643.5,577.8 644.0,577.9 644.5,577.9 645.0,578.0 645.5,578.1 646.0,578.2 646.5,578.2 647.0,578.3 647.5,578.4 648.0,578.5 648.5,578.5 649.0,578.6 649.5,578.7 650.0,578.8 650.5,578.8 651.0,578.8 651.5,578.7 652.0,578.7 652.5,578.7 653.0,578.6 653.5,578.6 654.0,578.6 654.5,578.5 655.0,578.5 655.5,578.5 656.0,578.4 656.5,578.4 657.0,578.4 657.5,578.3 658.0,578.3 658.5,578.4 659.0,578.6 659.5,578.8 660.0,578.9 660.5,579.1 661.0,579.3 661.5,579.4 662.0,579.6 662.5,579.8 663.0,580.0 663.5,580.1 664.0,580.3 664.5,580.5 665.0,580.7 665.5,580.8 666.0,581.0 666.5,581.3 667.0,581.6 667.5,581.8 668.0,582.1 668.5,582.4 669.0,582.7 669.5,583.0 670.0,583.3 670.5,583.5 671.0,583.8 671.5,584.1 672.0,584.4 672.5,584.7 673.0,584.9 673.5,585.2 674.0,585.5 674.3,585.6 674.3,585.6 674.0,585.7 673.5,585.7 673.0,585.7 672.5,585.8 672.0,585.8 671.5,585.9 671.0,585.9 670.5,586.0 670.0,586.0 669.5,586.0 669.0,586.1 668.5,586.1 668.0,586.2 667.5,586.2 667.0,586.5 666.5,586.7 666.0,587.0 665.5,587.2 665.0,587.5 664.5,587.7 664.0,587.9 663.5,588.2 663.0,588.4 662.5,588.7 662.0,588.9 661.5,589.1 661.0,589.4 660.5,589.6 660.0,589.9 659.5,590.1 659.0,590.3 658.5,590.5 658.0,590.7 657.5,591.0 657.0,591.2 656.5,591.4 656.0,591.6 655.5,591.8 655.0,592.1 654.5,592.3 654.0,592.5 653.5,592.7 653.0,593.0 652.5,593.2 652.0,593.4 651.5,593.6 651.0,593.8 650.5,594.1 650.0,594.3 649.5,594.5 649.0,594.7 648.5,594.9 648.0,595.1 647.5,595.3 647.0,595.5 646.5,595.8 646.0,596.0 645.5,596.2 645.0,596.4 644.5,596.6 644.0,596.8 643.5,597.0 643.0,597.2 642.5,597.4 642.0,597.6 641.5,597.8 641.0,598.0 640.5,598.2 640.0,598.5 639.5,598.7 639.0,598.9 638.5,599.2 638.0,599.4 637.5,599.7 637.0,600.0 636.5,600.2 636.0,600.5 635.5,600.7 635.0,601.0 634.5,601.3 634.0,601.5 633.5,601.8 633.0,602.0 632.5,602.3 632.0,602.6 631.5,602.8 631.0,603.1 630.5,603.3 630.0,603.6 629.5,603.9 629.0,604.1 628.5,604.4 628.0,604.6 627.5,604.9 627.0,605.2 626.5,605.4 626.0,605.7 625.5,606.0 625.0,606.2 624.5,606.5 624.0,606.7 623.5,607.0 623.0,607.2 622.5,607.5 622.0,607.7 621.5,607.9 621.0,608.2 620.5,608.4 620.0,608.7 619.5,608.9 619.0,609.1 618.5,609.4 618.0,609.6 617.5,609.9 617.0,610.1 616.5,610.3 616.0,610.6 615.5,610.8 615.0,611.1 614.5,611.3 614.0,611.5 613.5,611.7 613.0,611.8 612.5,612.0 612.0,612.2 611.5,612.4 611.0,612.6 610.5,612.8 610.0,612.9 609.5,613.1 609.0,613.3 608.5,613.5 608.0,613.7 607.5,613.9 607.0,614.0 606.5,614.2 606.0,614.4 605.5,614.6 605.0,614.8 604.5,615.0 604.0,615.1 603.5,615.3 603.0,615.5 602.5,615.7 602.0,615.9 601.5,616.0 601.0,616.2 600.5,616.4 600.0,616.6 599.5,616.8 599.0,617.0 598.5,617.1 598.0,617.2 597.5,617.4 597.0,617.5 596.5,617.6 596.0,617.7 595.5,617.9 595.0,618.0 594.5,618.1 594.0,618.2 593.5,618.4 593.0,618.5 592.5,618.6 592.0,618.8 591.5,618.9 591.0,619.0 590.5,619.1 590.0,619.3 589.5,619.4 589.0,619.5 588.5,619.6 588.0,619.8 587.5,619.9 587.0,620.0 586.5,620.2 586.0,620.3 585.5,620.4 585.0,620.5 584.5,620.7 584.0,620.8 583.5,620.9 583.0,621.0 582.5,621.2 582.0,621.3 581.5,621.4 581.0,621.6 580.5,621.8 580.0,622.0 579.5,622.1 579.0,622.3 578.5,622.5 578.0,622.7 577.5,622.8 577.0,623.0 576.5,623.2 576.0,623.4 575.5,623.6 575.0,623.7 574.5,623.9 574.0,624.1 573.5,624.3 573.0,624.4 572.5,624.6 572.0,624.8 571.5,625.0 571.0,625.1 570.5,625.3 570.0,625.5 569.5,625.7 569.0,625.8 568.5,626.0 568.0,626.2 567.5,626.4 567.0,626.5 566.5,626.7 566.0,626.9 565.5,627.1 565.0,627.4 564.5,627.6 564.0,627.9 563.5,628.1 563.0,628.4 562.5,628.6 562.0,628.9 561.5,629.1 561.0,629.4 560.5,629.6 560.0,629.8 559.5,630.1 559.0,630.3 558.5,630.6 558.0,630.8 557.5,631.1 557.0,631.3 556.5,631.6 556.0,631.8 555.5,632.1 555.0,632.3 554.5,632.5 554.0,632.7 553.5,632.9 553.0,633.1 552.6,633.2" fill="#FFE4E1"/>
<polygon points="674.3,585.6 674.5,585.7 675.0,586.0 675.5,586.2 676.0,586.5 676.5,586.7 677.0,587.0 677.5,587.2 678.0,587.5 678.5,587.7 679.0,587.9 679.5,588.2 680.0,588.4 680.5,588.7 681.0,588.9 681.5,589.2 682.0,589.4 682.5,589.7 683.0,589.9 683.5,590.2 684.0,590.4 684.5,590.7 685.0,590.9 685.5,591.2 686.0,591.4 686.5,591.7 687.0,591.9 687.5,592.2 688.0,592.5 688.5,592.7 689.0,593.0 689.5,593.2 690.0,593.5 690.5,593.7 691.0,594.0 691.5,594.2 692.0,594.5 692.5,594.7 693.0,595.0 693.5,595.2 694.0,595.5 694.5,595.8 695.0,596.0 695.5,596.2 696.0,596.5 696.5,596.8 697.0,597.0 697.5,597.2 698.0,597.5 698.5,597.8 699.0,598.0 699.5,598.2 700.0,598.5 700.5,598.7 701.0,598.9 701.5,599.1 702.0,599.3 702.5,599.5 703.0,599.7 703.5,599.9 704.0,600.1 704.5,600.3 705.0,600.5 705.5,600.7 706.0,600.9 706.5,601.1 707.0,601.3 707.5,601.5 708.0,601.7 708.5,601.9 709.0,602.0 709.5,602.1 710.0,602.3 710.5,602.4 711.0,602.5 711.5,602.6 712.0,602.8 712.5,602.9 713.0,603.0 713.5,603.2 714.0,603.3 714.5,603.4 715.0,603.5 715.5,603.7 716.0,603.8 716.5,603.9 717.0,604.0 717.5,604.2 718.0,604.3 718.5,604.4 719.0,604.5 719.5,604.6 720.0,604.7 720.5,604.8 721.0,604.9 721.5,605.0 722.0,605.1 722.5,605.1 723.0,605.2 723.5,605.3 724.0,605.4 724.5,605.5 725.0,605.6 725.5,605.7 726.0,605.8 726.5,605.9 727.0,606.0 727.5,606.1 728.0,606.2 728.5,606.3 729.0,606.4 729.5,606.5 730.0,606.6 730.5,606.7 731.0,606.8 731.5,606.9 732.0,607.0 732.5,607.1 733.0,607.2 733.5,607.2 734.0,607.3 734.5,607.4 735.0,607.5 735.5,607.6 736.0,607.7 736.5,607.8 737.0,607.9 737.5,608.0 738.0,608.1 738.5,608.2 739.0,608.3 739.5,608.4 740.0,608.4 740.5,608.6 741.0,608.7 741.5,608.9 742.0,609.0 742.5,609.1 743.0,609.3 743.5,609.4 744.0,609.6 744.5,609.7 745.0,609.9 745.5,610.0 746.0,610.2 746.5,610.3 747.0,610.5 747.5,610.6 748.0,610.8 748.5,610.9 749.0,611.2 749.5,611.6 750.0,612.0 750.5,612.5 751.0,612.9 751.5,613.3 752.0,613.7 752.5,614.2 753.0,614.6 753.5,615.0 754.0,615.5 754.5,615.9 755.0,616.3 755.5,616.8 756.0,617.2 756.5,617.6 757.0,618.0 757.5,618.5 758.0,618.9 758.5,619.3 759.0,619.8 759.5,620.2 760.0,620.6 760.5,621.0 761.0,621.5 761.5,622.0 762.0,622.5 762.5,623.0 763.0,623.5 763.5,624.0 764.0,624.5 764.5,625.0 765.0,625.5 765.5,626.0 766.0,626.6 766.5,627.1 767.0,627.6 767.5,628.1 768.0,628.6 768.5,629.1 769.0,629.6 769.5,630.1 770.0,630.6 770.5,631.1 771.0,631.6 771.5,632.1 772.0,632.6 772.5,633.1 773.0,633.6 773.5,634.1 774.0,634.6 774.5,635.1 775.0,635.6 775.5,636.1 776.0,636.6 776.5,637.0 777.0,637.5 777.5,638.0 778.0,638.5 778.5,639.0 779.0,639.5 779.5,640.0 780.0,640.5 780.5,641.0 781.0,641.5 781.5,642.0 782.0,642.4 782.5,642.8 783.0,643.2 783.5,643.6 784.0,644.1 784.5,644.5 785.0,644.9 785.5,645.3 786.0,645.7 786.5,646.1 787.0,646.6 787.5,647.0 788.0,647.4 788.5,647.8 789.0,648.2 789.5,648.6 790.0,649.1 790.5,649.5 791.0,649.9 791.5,650.3 792.0,650.1 792.5,649.8 793.0,649.5 793.5,649.1 794.0,648.8 794.5,648.5 795.0,648.1 795.5,647.8 796.0,647.5 796.5,647.1 797.0,646.8 797.5,646.5 798.0,646.1 798.5,645.8 799.0,645.5 799.5,645.1 800.0,644.8 800.5,644.5 801.0,644.1 801.5,643.8 802.0,643.5 802.5,643.1 803.0,642.7 803.5,642.3 804.0,642.0 804.5,641.6 805.0,641.2 805.5,640.8 806.0,640.5 806.5,640.1 807.0,639.7 807.5,639.3 808.0,639.0 808.5,638.6 809.0,638.2 809.5,637.8 810.0,637.5 810.5,637.1 811.0,636.7 811.5,636.3 812.0,636.0 812.5,635.3 813.0,634.7 813.5,634.0 814.0,633.3 814.5,632.6 815.0,631.9 815.5,631.2 816.0,630.5 816.5,629.8 817.0,629.2 817.5,628.5 818.0,627.8 818.5,627.1 819.0,626.4 819.5,625.9 820.0,625.3 820.5,624.8 821.0,624.2 821.5,623.7 822.0,623.1 822.1,623.0 822.1,623.0 822.0,623.0 821.5,623.0 821.0,622.9 820.5,622.8 820.0,622.8 819.5,622.7 819.0,622.7 818.5,622.6 818.0,622.5 817.5,622.5 817.0,622.4 816.5,622.3 816.0,622.3 815.5,622.2 815.0,622.2 814.5,622.1 814.0,622.1 813.5,622.1 813.0,622.1 812.5,622.0 812.0,622.0 811.5,622.0 811.0,622.0 810.5,621.9 810.0,621.9 809.5,621.9 809.0,621.9 808.5,621.8 808.0,621.8 807.5,621.8 807.0,621.8 806.5,621.7 806.0,621.7 805.5,621.7 805.0,621.6 804.5,621.6 804.0,621.6 803.5,621.6 803.0,621.5 802.5,621.5 802.0,621.5 801.5,621.5 801.0,621.4 800.5,621.4 800.0,621.4 799.5,621.4 799.0,621.3 798.5,621.3 798.0,621.3 797.5,621.3 797.0,621.3 796.5,621.2 796.0,621.2 795.5,621.2 795.0,621.2 794.5,621.2 794.0,621.1 793.5,621.1 793.0,621.1 792.5,621.1 792.0,621.1 791.5,621.1 791.0,621.0 790.5,621.0 790.0,621.0 789.5,620.8 789.0,620.6 788.5,620.3 788.0,620.1 787.5,619.9 787.0,619.7 786.5,619.4 786.0,619.2 785.5,619.0 785.0,618.7 784.5,618.5 784.0,618.3 783.5,618.0 783.0,617.8 782.5,617.6 782.0,617.3 781.5,617.1 781.0,616.8 780.5,616.5 780.0,616.2 779.5,616.0 779.0,615.7 778.5,615.4 778.0,615.1 777.5,614.8 777.0,614.5 776.5,614.2 776.0,613.9 775.5,613.6 775.0,613.3 774.5,613.0 774.0,612.7 773.5,612.5 773.0,612.2 772.5,611.9 772.0,611.6 771.5,611.3 771.0,611.0 770.5,610.7 770.0,610.4 769.5,610.1 769.0,609.8 768.5,609.5 768.0,609.2 767.5,608.9 767.0,608.6 766.5,608.4 766.0,608.1 765.5,607.8 765.0,607.5 764.5,607.2 764.0,606.9 763.5,606.6 763.0,606.3 762.5,606.0 762.0,605.7 761.5,605.4 761.0,605.1 760.5,604.8 760.0,604.5 759.5,604.3 759.0,604.0 758.5,603.7 758.0,603.4 757.5,603.1 757.0,602.8 756.5,602.5 756.0,602.3 755.5,602.0 755.0,601.7 754.5,601.4 754.0,601.1 753.5,600.8 753.0,600.5 752.5,600.2 752.0,600.0 751.5,599.7 751.0,599.4 750.5,599.1 750.0,598.9 749.5,598.7 749.0,598.5 748.5,598.4 748.0,598.2 747.5,598.0 747.0,597.8 746.5,597.6 746.0,597.4 745.5,597.2 745.0,597.1 744.5,596.9 744.0,596.7 743.5,596.5 743.0,596.3 742.5,596.1 742.0,595.9 741.5,595.7 741.0,595.6 740.5,595.4 740.0,595.2 739.5,595.1 739.0,595.0 738.5,594.9 738.0,594.8 737.5,594.7 737.0,594.6 736.5,594.5 736.0,594.3 735.5,594.2 735.0,594.1 734.5,594.0 734.0,593.9 733.5,593.8 733.0,593.7 732.5,593.6 732.0,593.4 731.5,593.3 731.0,593.2 730.5,593.1 730.0,593.0 729.5,592.9 729.0,592.8 728.5,592.6 728.0,592.5 727.5,592.4 727.0,592.3 726.5,592.2 726.0,592.0 725.5,591.9 725.0,591.8 724.5,591.7 724.0,591.5 723.5,591.4 723.0,591.3 722.5,591.2 722.0,591.1 721.5,590.9 721.0,590.8 720.5,590.7 720.0,590.6 719.5,590.5 719.0,590.3 718.5,590.2 718.0,590.1 717.5,590.0 717.0,589.9 716.5,589.8 716.0,589.7 715.5,589.7 715.0,589.6 714.5,589.5 714.0,589.4 713.5,589.3 713.0,589.3 712.5,589.2 712.0,589.1 711.5,589.0 711.0,588.9 710.5,588.9 710.0,588.8 709.5,588.7 709.0,588.6 708.5,588.5 708.0,588.5 707.5,588.4 707.0,588.3 706.5,588.2 706.0,588.1 705.5,588.1 705.0,588.0 704.5,587.9 704.0,587.8 703.5,587.7 703.0,587.7 702.5,587.6 702.0,587.5 701.5,587.4 701.0,587.3 700.5,587.3 700.0,587.2 699.5,587.1 699.0,587.0 698.5,586.9 698.0,586.9 697.5,586.8 697.0,586.7 696.5,586.7 696.0,586.6 695.5,586.5 695.0,586.5 694.5,586.4 694.0,586.3 693.5,586.3 693.0,586.2 692.5,586.1 692.0,586.0 691.5,586.0 691.0,585.9 690.5,585.8 690.0,585.8 689.5,585.7 689.0,585.7 688.5,585.7 688.0,585.7 687.5,585.7 687.0,585.6 686.5,585.6 686.0,585.6 685.5,585.6 685.0,585.6 684.5,585.6 684.0,585.6 683.5,585.6 683.0,585.5 682.5,585.5 682.0,585.5 681.5,585.5 681.0,585.5 680.5,585.5 680.0,585.5 679.5,585.5 679.0,585.4 678.5,585.4 678.0,585.4 677.5,585.4 677.0,585.4 676.5,585.4 676.0,585.5 675.5,585.5 675.0,585.6 674.5,585.6 674.3,585.6" fill="#BBFFFF"/>
<polygon points="822.1,623.0 822.5,622.6 823.0,622.0 823.5,621.5 824.0,621.0 824.5,620.4 825.0,619.9 825.5,619.3 826.0,618.8 826.5,618.2 827.0,617.7 827.5,617.1 828.0,616.6 828.5,616.1 829.0,615.5 829.5,615.2 830.0,615.0 830.5,614.9 831.0,614.7 831.5,614.5 832.0,614.4 832.5,614.2 833.0,614.0 833.5,613.9 834.0,613.7 834.5,613.6 835.0,613.4 835.5,613.2 836.0,613.1 836.5,612.9 837.0,612.7 837.5,612.6 838.0,612.4 838.5,612.2 839.0,612.1 839.5,611.9 840.0,611.8 840.5,611.8 841.0,611.7 841.5,611.7 842.0,611.6 842.5,611.5 843.0,611.5 843.5,611.4 844.0,611.3 844.5,611.3 845.0,611.2 845.5,611.2 846.0,611.1 846.5,611.0 847.0,611.0 847.5,610.9 848.0,610.8 848.5,610.8 849.0,610.7 849.5,610.7 850.0,610.6 850.5,610.5 851.0,610.5 851.5,610.4 852.0,610.3 852.5,610.3 853.0,610.2 853.5,610.2 854.0,610.3 854.5,610.3 855.0,610.3 855.5,610.4 856.0,610.4 856.5,610.5 857.0,610.5 857.5,610.5 858.0,610.6 858.5,610.6 859.0,610.7 859.5,610.7 860.0,610.7 860.5,610.8 861.0,610.8 861.5,610.9 862.0,610.9 862.5,610.9 863.0,611.0 863.5,611.1 864.0,611.6 864.5,612.1 865.0,612.6 865.5,613.1 866.0,613.6 866.5,614.1 867.0,614.6 867.5,615.2 868.0,615.7 868.5,616.2 869.0,616.7 869.5,617.2 870.0,617.7 870.5,618.2 871.0,618.7 871.0,626.4 870.5,626.3 870.0,626.2 869.5,626.2 869.0,626.1 868.5,626.0 868.0,625.9 867.5,625.8 867.0,625.8 866.5,625.7 866.0,625.6 865.5,625.5 865.0,625.5 864.5,625.4 864.0,625.3 863.5,625.2 863.0,625.2 862.5,625.1 862.0,625.0 861.5,624.9 861.0,624.9 860.5,624.8 860.0,624.7 859.5,624.7 859.0,624.6 858.5,624.6 858.0,624.5 857.5,624.5 857.0,624.5 856.5,624.4 856.0,624.4 855.5,624.4 855.0,624.3 854.5,624.3 854.0,624.2 853.5,624.2 853.0,624.2 852.5,624.1 852.0,624.1 851.5,624.0 851.0,624.0 850.5,624.0 850.0,623.9 849.5,623.9 849.0,623.9 848.5,623.9 848.0,623.9 847.5,624.0 847.0,624.0 846.5,624.0 846.0,624.0 845.5,624.0 845.0,624.0 844.5,624.1 844.0,624.1 843.5,624.1 843.0,624.1 842.5,624.1 842.0,624.1 841.5,624.1 841.0,624.2 840.5,624.2 840.0,624.2 839.5,624.2 839.0,624.2 838.5,624.2 838.0,624.2 837.5,624.3 837.0,624.3 836.5,624.3 836.0,624.3 835.5,624.3 835.0,624.3 834.5,624.3 834.0,624.4 833.5,624.4 833.0,624.4 832.5,624.4 832.0,624.3 831.5,624.3 831.0,624.2 830.5,624.1 830.0,624.1 829.5,624.0 829.0,623.9 828.5,623.9 828.0,623.8 827.5,623.7 827.0,623.7 826.5,623.6 826.0,623.6 825.5,623.5 825.0,623.4 824.5,623.4 824.0,623.3 823.5,623.2 823.0,623.2 822.5,623.1 822.1,623.0" fill="#FFE4E1"/>
<polygon points="0.0,322.0 0.5,322.0 1.0,322.0 1.5,326.5 2.0,331.0 2.5,335.5 3.0,340.0 3.5,340.5 4.0,341.0 4.5,341.5 5.0,342.0 5.5,342.8 6.0,343.5 6.5,344.2 7.0,345.0 7.5,340.5 8.0,336.0 8.5,331.5 9.0,327.0 9.5,328.0 10.0,329.0 10.5,330.0 11.0,331.0 11.5,326.2 12.0,321.5 12.5,316.8 13.0,312.0 13.5,310.5 14.0,309.0 14.5,307.5 15.0,306.0 15.5,299.5 16.0,293.0 16.5,286.5 17.0,280.0 17.5,283.0 18.0,286.0 18.5,289.0 19.0,292.0 19.5,288.2 20.0,284.5 20.5,280.8 21.0,277.0 21.5,276.8 22.0,276.5 22.5,276.2 23.0,276.0 23.5,275.8 24.0,275.5 24.5,275.2 25.0,275.0 25.5,275.2 26.0,275.5 26.5,275.8 27.0,276.0 27.5,276.5 28.0,277.0 28.5,277.5 29.0,278.0 29.5,280.0 30.0,282.0 30.5,284.0 31.0,286.0 31.5,285.5 32.0,285.0 32.5,284.5 33.0,284.0 33.5,281.8 34.0,279.5 34.5,277.2 35.0,275.0 35.5,273.2 36.0,271.5 36.5,269.8 37.0,268.0 37.5,268.0 38.0,268.0 38.5,268.0 39.0,268.0 39.5,271.0 40.0,274.0 40.5,277.0 41.0,280.0 41.5,283.2 42.0,286.5 42.5,289.8 43.0,293.0 43.4,296.0 43.4,296.0 43.0,296.6 42.5,297.4 42.0,298.1 41.5,298.9 41.0,299.6 40.5,300.4 40.0,301.2 39.5,301.9 39.0,302.7 38.5,303.4 38.0,304.2 37.5,305.0 37.0,305.8 36.5,306.7 36.0,307.6 35.5,308.4 35.0,309.3 34.5,310.2 34.0,311.0 33.5,311.9 33.0,312.8 32.5,313.6 32.0,314.5 31.5,315.4 31.0,316.2 30.5,317.0 30.0,317.8 29.5,318.6 29.0,319.4 28.5,320.2 28.0,321.0 27.5,321.8 27.0,322.6 26.5,323.4 26.0,324.2 25.5,325.0 25.0,325.8 24.5,326.6 24.0,327.4 23.5,328.2 23.0,328.9 22.5,329.6 22.0,330.3 21.5,331.0 21.0,331.7 20.5,332.4 20.0,333.1 19.5,333.8 19.0,334.5 18.5,335.2 18.0,335.9 17.5,336.6 17.0,337.3 16.5,337.9 16.0,338.6 15.5,339.3 15.0,339.8 14.5,340.3 14.0,340.8 13.5,341.3 13.0,341.8 12.5,342.3 12.0,342.8 11.5,343.3 11.0,343.8 10.5,344.3 10.0,344.8 9.5,345.3 9.0,345.8 8.5,346.3 8.0,346.8 7.5,347.0 7.0,347.0 6.5,347.0 6.0,347.0 5.5,347.0 5.0,347.0 4.5,347.0 4.0,347.0 3.5,347.0 3.0,347.0 2.5,347.0 2.0,347.0 1.5,347.0 1.0,347.0 0.5,347.0 0.0,347.0" fill="#D2B48C"/>
<polygon points="43.4,296.0 43.5,297.0 44.0,301.0 44.5,305.0 45.0,309.0 45.5,306.2 46.0,303.5 46.5,300.8 47.0,298.0 47.5,296.8 48.0,295.5 48.5,294.2 49.0,293.0 49.5,293.5 50.0,294.0 50.5,294.5 51.0,295.0 51.5,294.8 52.0,294.5 52.5,294.2 53.0,294.0 53.5,294.5 54.0,295.0 54.5,295.5 55.0,296.0 55.0,287.9 54.5,287.7 54.0,288.0 53.5,288.2 53.0,288.5 52.5,288.7 52.0,289.0 51.5,289.2 51.0,289.5 50.5,289.7 50.0,290.0 49.5,290.4 49.0,290.9 48.5,291.3 48.0,291.7 47.5,292.2 47.0,292.6 46.5,293.0 46.0,293.5 45.5,293.9 45.0,294.4 44.5,294.8 44.0,295.2 43.5,295.9 43.4,296.0" fill="#40E0D0"/>
<polygon points="56.0,510.0 56.5,510.0 57.0,517.8 57.5,525.6 58.0,533.4 58.5,541.2 59.0,549.0 59.5,549.0 60.0,549.0 60.5,549.0 61.0,549.0 61.5,543.8 62.0,538.5 62.5,533.2 63.0,528.0 63.5,530.0 64.0,532.0 64.5,534.0 65.0,536.0 65.5,539.8 66.0,543.5 66.5,547.2 67.0,551.0 67.5,553.0 68.0,555.0 68.5,557.0 69.0,559.0 69.5,560.5 70.0,562.0 70.5,563.5 71.0,565.0 71.5,561.5 72.0,558.0 72.5,554.5 73.0,551.0 73.5,556.2 74.0,561.5 74.5,566.8 75.0,572.0 75.5,577.2 76.0,582.5 76.5,587.8 77.0,593.0 77.5,592.5 78.0,592.0 78.5,591.5 79.0,591.0 79.5,585.2 80.0,579.5 80.5,573.8 81.0,568.0 81.5,567.5 82.0,567.0 82.5,566.5 83.0,566.0 83.5,561.8 84.0,557.5 84.5,553.2 85.0,549.0 85.5,555.0 86.0,561.0 86.5,567.0 87.0,573.0 87.5,574.2 88.0,575.5 88.5,576.8 89.0,578.0 89.5,575.5 90.0,573.0 90.5,570.5 91.0,568.0 91.5,566.0 92.0,564.0 92.5,562.0 93.0,560.0 93.5,559.5 94.0,559.0 94.5,558.5 95.0,558.0 95.5,564.0 96.0,570.0 96.5,576.0 97.0,582.0 97.5,584.0 98.0,586.0 98.5,588.0 99.0,590.0 99.5,585.8 100.0,581.5 100.5,577.2 101.0,573.0 101.5,571.8 102.0,570.5 102.5,569.2 103.0,568.0 103.5,567.5 104.0,567.0 104.5,566.5 105.0,566.0 105.5,566.2 106.0,566.5 106.5,566.8 107.0,567.0 107.3,565.3 107.3,565.3 107.0,565.2 106.5,565.0 106.0,564.9 105.5,564.7 105.0,564.5 104.5,564.1 104.0,563.5 103.5,562.9 103.0,562.3 102.5,561.8 102.0,561.2 101.5,560.6 101.0,560.1 100.5,559.5 100.0,558.9 99.5,558.3 99.0,556.6 98.5,553.0 98.0,549.4 97.5,545.8 97.0,542.2 96.5,538.7 96.0,535.1 95.5,531.5 95.0,527.9 94.5,524.3 94.0,520.8 93.5,517.2 93.0,513.6 92.5,510.0 92.0,506.4 91.5,502.9 91.0,499.4 90.5,496.2 90.0,493.1 89.5,489.9 89.0,486.8 88.5,483.7 88.0,480.5 87.5,477.4 87.0,474.2 86.5,471.1 86.0,468.0 85.5,464.8 85.0,461.7 84.5,458.5 84.0,455.4 83.5,452.3 83.0,449.1 82.5,445.9 82.0,442.4 81.5,438.9 81.0,435.4 80.5,431.9 80.0,428.4 79.5,424.9 79.0,421.4 78.5,417.9 78.0,414.4 77.5,410.8 77.0,407.3 76.5,403.8 76.0,400.3 75.5,396.8 75.0,393.3 74.5,389.8 74.0,386.3 73.5,382.8 73.0,379.3 72.5,376.1 72.0,373.0 71.5,369.9 71.0,366.8 70.5,363.7 70.0,360.6 69.5,357.5 69.0,354.4 68.5,351.3 68.0,348.2 67.5,345.1 67.0,342.1 66.5,339.1 66.0,336.1 65.5,333.1 65.0,330.1 64.5,327.1 64.0,324.1 63.5,321.1 63.0,318.1 62.5,315.2 62.0,312.7 61.5,310.2 61.0,307.7 60.5,305.2 60.0,302.8 59.5,300.3 59.0,297.8 58.5,295.3 58.0,292.8 57.5,291.7 57.0,290.9 56.5,290.2 56.0,289.4" fill="#40E0D0"/>
<polygon points="107.3,565.3 107.5,564.5 108.0,562.0 108.5,559.5 109.0,557.0 109.5,560.2 110.0,563.5 110.5,566.5 110.5,566.5 110.0,566.4 109.5,566.2 109.0,566.0 108.5,565.8 108.0,565.6 107.5,565.4 107.3,565.3" fill="#D2B48C"/>
<polygon points="110.5,566.5 110.5,566.8 111.0,570.0 111.5,570.0 112.0,570.0 112.5,570.0 113.0,570.0 113.5,567.8 113.5,567.7 113.5,567.7 113.5,567.7 113.0,567.5 112.5,567.3 112.0,567.1 111.5,566.9 111.0,566.7 110.5,566.5 110.5,566.5" fill="#40E0D0"/>
<polygon points="113.5,567.7 114.0,565.5 114.5,563.2 115.0,561.0 115.5,564.0 116.0,567.0 116.3,568.7 116.3,568.7 116.0,568.6 115.5,568.4 115.0,568.2 114.5,568.0 114.0,567.9 113.5,567.7" fill="#D2B48C"/>
<polygon points="116.3,568.7 116.5,570.0 117.0,573.0 117.5,572.2 118.0,571.5 118.5,570.8 119.0,570.0 119.5,579.8 120.0,589.5 120.5,599.2 121.0,609.0 121.5,611.2 122.0,613.5 122.5,615.8 123.0,618.0 123.5,619.5 124.0,621.0 124.5,622.5 125.0,624.0 125.5,616.8 126.0,609.5 126.5,602.2 127.0,595.0 127.5,599.8 128.0,604.5 128.5,609.2 129.0,614.0 129.5,609.5 130.0,605.0 130.5,600.5 131.0,596.0 131.5,591.5 132.0,587.0 132.5,582.5 132.8,579.6 132.8,579.6 132.5,579.5 132.0,579.4 131.5,579.3 131.0,579.2 130.5,579.1 130.0,579.0 129.5,578.6 129.0,578.2 128.5,577.8 128.0,577.4 127.5,577.0 127.0,576.5 126.5,576.1 126.0,575.7 125.5,575.3 125.0,574.9 124.5,574.5 124.0,574.1 123.5,573.7 123.0,573.3 122.5,572.9 122.0,572.4 121.5,572.0 121.0,571.6 120.5,571.2 120.0,570.8 119.5,570.4 119.0,570.0 118.5,569.6 118.0,569.4 117.5,569.2 117.0,569.0 116.5,568.8 116.3,568.7" fill="#40E0D0"/>
<polygon points="132.8,579.6 133.0,578.0 133.3,579.7 133.3,579.7 133.0,579.6 132.8,579.6" fill="#D2B48C"/>
<polygon points="133.3,579.7 133.5,581.2 134.0,584.5 134.5,587.8 135.0,591.0 135.5,588.8 136.0,586.5 136.5,584.2 137.0,582.0 137.1,580.4 137.1,580.4 137.0,580.4 136.5,580.3 136.0,580.2 135.5,580.1 135.0,580.0 134.5,579.9 134.0,579.8 133.5,579.7 133.3,579.7" fill="#40E0D0"/>
<polygon points="137.1,580.4 137.5,576.5 138.0,571.0 138.5,565.5 139.0,560.0 139.5,565.5 140.0,571.0 140.5,576.5 140.9,581.2 140.9,581.2 140.5,581.1 140.0,581.0 139.5,580.9 139.0,580.8 138.5,580.7 138.0,580.6 137.5,580.5 137.1,580.4" fill="#D2B48C"/>
<polygon points="140.9,581.2 141.0,582.0 141.5,584.2 142.0,586.5 142.5,588.8 143.0,591.0 143.5,589.8 144.0,588.5 144.5,587.2 145.0,586.0 145.5,586.2 146.0,586.5 146.5,586.8 147.0,587.0 147.5,590.5 148.0,594.0 148.5,597.5 149.0,601.0 149.5,601.2 150.0,601.5 150.5,601.8 151.0,602.0 151.5,597.5 152.0,593.0 152.5,588.5 152.7,586.8 152.7,586.8 152.5,586.7 152.0,586.4 151.5,586.1 151.0,585.8 150.5,585.5 150.0,585.2 149.5,585.0 149.0,584.8 148.5,584.5 148.0,584.2 147.5,584.0 147.0,583.8 146.5,583.5 146.0,583.2 145.5,583.0 145.0,582.8 144.5,582.5 144.0,582.2 143.5,582.0 143.0,581.8 142.5,581.5 142.0,581.4 141.5,581.3 141.0,581.2 140.9,581.2" fill="#40E0D0"/>
<polygon points="152.7,586.8 153.0,584.0 153.5,580.2 154.0,576.5 154.5,572.8 155.0,569.0 155.5,578.2 156.0,587.5 156.1,588.8 156.1,588.8 156.0,588.7 155.5,588.4 155.0,588.1 154.5,587.8 154.0,587.6 153.5,587.3 153.0,587.0 152.7,586.8" fill="#D2B48C"/>
<polygon points="156.1,588.8 156.5,596.8 157.0,606.0 157.5,604.2 158.0,602.5 158.5,600.8 159.0,599.0 159.5,600.8 160.0,602.5 160.5,604.2 161.0,606.0 161.5,611.5 162.0,617.0 162.5,622.5 163.0,628.0 163.5,619.8 164.0,611.5 164.5,603.2 165.0,595.0 165.5,595.0 166.0,595.0 166.5,595.0 167.0,595.0 167.5,595.0 168.0,595.0 168.5,595.0 169.0,595.0 169.2,593.2 169.2,593.2 169.0,593.3 168.5,593.5 168.0,593.8 167.5,594.0 167.0,594.3 166.5,594.5 166.0,594.8 165.5,594.5 165.0,594.2 164.5,593.9 164.0,593.6 163.5,593.3 163.0,593.0 162.5,592.6 162.0,592.3 161.5,592.0 161.0,591.7 160.5,591.4 160.0,591.1 159.5,590.8 159.0,590.5 158.5,590.2 158.0,589.9 157.5,589.6 157.0,589.3 156.5,589.0 156.1,588.8" fill="#40E0D0"/>
<polygon points="169.2,593.2 169.5,591.0 170.0,587.0 170.5,583.0 171.0,579.0 171.5,576.8 172.0,574.5 172.5,572.2 173.0,570.0 173.5,573.0 174.0,576.0 174.5,579.0 175.0,582.0 175.5,582.0 176.0,582.0 176.5,582.0 177.0,582.0 177.5,577.0 178.0,572.0 178.5,567.0 179.0,562.0 179.5,566.2 180.0,570.5 180.5,574.8 181.0,579.0 181.5,580.2 182.0,581.5 182.5,582.8 183.0,584.0 183.5,580.8 184.0,577.5 184.5,574.2 185.0,571.0 185.5,568.8 186.0,566.5 186.5,564.2 187.0,562.0 187.5,562.2 188.0,562.5 188.5,562.8 189.0,563.0 189.5,562.8 190.0,562.5 190.5,562.2 191.0,562.0 191.5,570.2 192.0,578.5 192.5,586.2 192.5,586.2 192.0,586.4 191.5,586.6 191.0,586.7 190.5,586.9 190.0,587.1 189.5,587.2 189.0,587.4 188.5,587.6 188.0,587.7 187.5,587.9 187.0,588.0 186.5,588.2 186.0,588.4 185.5,588.5 185.0,588.7 184.5,588.9 184.0,589.0 183.5,589.2 183.0,589.3 182.5,589.4 182.0,589.5 181.5,589.6 181.0,589.7 180.5,589.8 180.0,589.8 179.5,589.9 179.0,590.0 178.5,590.1 178.0,590.2 177.5,590.3 177.0,590.4 176.5,590.4 176.0,590.5 175.5,590.6 175.0,590.7 174.5,590.8 174.0,590.9 173.5,591.0 173.0,591.3 172.5,591.5 172.0,591.8 171.5,592.0 171.0,592.3 170.5,592.5 170.0,592.8 169.5,593.0 169.2,593.2" fill="#D2B48C"/>
<polygon points="192.5,586.2 192.5,586.8 193.0,595.0 193.5,595.5 194.0,596.0 194.5,596.5 195.0,597.0 195.5,599.2 196.0,601.5 196.5,603.8 197.0,606.0 197.5,607.8 198.0,609.5 198.5,611.2 199.0,613.0 199.5,615.2 200.0,617.5 200.5,619.8 201.0,622.0 201.5,618.5 202.0,615.0 202.5,611.5 203.0,608.0 203.5,607.0 204.0,606.0 204.5,605.0 205.0,604.0 205.5,607.8 206.0,611.5 206.5,615.2 207.0,619.0 207.5,622.8 208.0,626.5 208.5,630.2 209.0,634.0 209.5,631.2 210.0,628.5 210.5,625.8 211.0,623.0 211.5,623.5 212.0,624.0 212.5,624.5 213.0,625.0 213.5,625.2 214.0,625.5 214.5,625.8 215.0,626.0 215.5,624.8 216.0,623.5 216.5,622.2 217.0,621.0 217.5,618.8 218.0,616.5 218.5,614.2 219.0,612.0 219.5,613.5 220.0,615.0 220.5,616.5 221.0,618.0 221.5,619.2 222.0,620.5 222.5,621.8 223.0,623.0 223.5,623.8 224.0,624.5 224.5,625.2 225.0,626.0 225.5,626.5 226.0,627.0 226.5,627.5 227.0,628.0 227.5,628.5 228.0,629.0 228.5,629.5 229.0,630.0 229.5,632.5 230.0,635.0 230.5,637.5 231.0,640.0 231.5,639.2 232.0,638.5 232.5,637.8 233.0,637.0 233.5,637.8 234.0,638.5 234.5,639.2 235.0,640.0 235.5,638.0 236.0,636.0 236.5,634.0 237.0,632.0 237.5,635.0 238.0,638.0 238.5,641.0 239.0,644.0 239.5,639.8 240.0,635.5 240.5,631.2 241.0,627.0 241.5,627.2 242.0,627.5 242.5,627.8 243.0,628.0 243.5,628.2 244.0,628.5 244.5,628.8 245.0,629.0 245.4,625.2 245.4,625.2 245.0,624.8 244.5,624.5 244.0,624.1 243.5,623.7 243.0,623.3 242.5,622.9 242.0,622.6 241.5,622.2 241.0,621.8 240.5,621.4 240.0,621.0 239.5,620.6 239.0,620.3 238.5,619.9 238.0,619.5 237.5,619.1 237.0,618.7 236.5,618.4 236.0,617.8 235.5,617.0 235.0,616.3 234.5,615.5 234.0,614.8 233.5,614.1 233.0,613.3 232.5,612.6 232.0,611.9 231.5,611.1 231.0,610.4 230.5,609.6 230.0,608.9 229.5,608.5 229.0,608.0 228.5,607.6 228.0,607.1 227.5,606.7 227.0,606.2 226.5,605.8 226.0,605.4 225.5,604.9 225.0,604.5 224.5,604.0 224.0,603.6 223.5,603.1 223.0,602.7 222.5,602.2 222.0,601.8 221.5,601.4 221.0,600.9 220.5,600.5 220.0,600.0 219.5,599.6 219.0,599.1 218.5,598.7 218.0,598.3 217.5,597.8 217.0,597.2 216.5,596.6 216.0,596.0 215.5,595.4 215.0,594.8 214.5,594.2 214.0,593.6 213.5,593.0 213.0,592.4 212.5,591.8 212.0,591.2 211.5,590.5 211.0,589.9 210.5,589.3 210.0,588.7 209.5,588.4 209.0,588.3 208.5,588.1 208.0,588.0 207.5,587.8 207.0,587.7 206.5,587.5 206.0,587.4 205.5,587.2 205.0,587.1 204.5,586.9 204.0,586.8 203.5,586.6 203.0,586.5 202.5,586.3 202.0,586.2 201.5,586.2 201.0,586.2 200.5,586.2 200.0,586.2 199.5,586.2 199.0,586.2 198.5,586.2 198.0,586.2 197.5,586.2 197.0,586.2 196.5,586.2 196.0,586.2 195.5,586.2 195.0,586.2 194.5,586.2 194.0,586.2 193.5,586.2 193.0,586.2 192.5,586.2 192.5,586.2" fill="#40E0D0"/>
<polygon points="245.4,625.2 245.5,624.8 246.0,620.5 246.5,616.2 247.0,612.0 247.5,608.2 248.0,604.5 248.5,600.8 249.0,597.0 249.5,600.0 250.0,603.0 250.5,606.0 251.0,609.0 251.5,607.2 252.0,605.5 252.5,603.8 253.0,602.0 253.5,598.5 254.0,595.0 254.5,591.5 255.0,588.0 255.5,585.8 256.0,583.5 256.5,581.2 257.0,579.0 257.5,579.8 258.0,580.5 258.5,581.2 259.0,582.0 259.5,579.2 260.0,576.5 260.5,573.8 261.0,571.0 261.5,573.0 262.0,575.0 262.5,577.0 263.0,579.0 263.5,577.0 264.0,575.0 264.5,573.0 265.0,571.0 265.5,571.5 266.0,572.0 266.5,572.5 267.0,573.0 267.5,575.0 268.0,577.0 268.5,579.0 269.0,581.0 269.5,580.8 270.0,580.5 270.5,580.2 271.0,580.0 271.5,579.0 272.0,578.0 272.5,577.0 273.0,576.0 273.5,579.0 274.0,582.0 274.5,585.0 275.0,588.0 275.5,588.2 276.0,588.5 276.5,588.8 277.0,589.0 277.5,587.0 278.0,585.0 278.5,583.0 279.0,581.0 279.5,584.0 280.0,587.0 280.5,590.0 281.0,593.0 281.1,593.7 281.1,593.7 281.0,593.8 280.5,594.3 280.0,594.8 279.5,595.4 279.0,596.0 278.5,596.6 278.0,597.1 277.5,597.7 277.0,598.3 276.5,598.9 276.0,599.5 275.5,600.1 275.0,600.7 274.5,601.2 274.0,601.8 273.5,602.4 273.0,603.0 272.5,603.6 272.0,604.2 271.5,604.8 271.0,605.3 270.5,605.9 270.0,606.4 269.5,606.9 269.0,607.4 268.5,607.9 268.0,608.4 267.5,608.9 267.0,609.4 266.5,609.9 266.0,610.4 265.5,610.9 265.0,611.4 264.5,611.9 264.0,612.4 263.5,612.9 263.0,613.4 262.5,613.9 262.0,614.4 261.5,614.9 261.0,615.4 260.5,615.8 260.0,616.3 259.5,616.8 259.0,617.2 258.5,617.7 258.0,618.2 257.5,618.6 257.0,619.1 256.5,619.6 256.0,620.0 255.5,620.5 255.0,620.9 254.5,621.4 254.0,621.9 253.5,622.3 253.0,622.8 252.5,623.3 252.0,623.7 251.5,624.2 251.0,624.7 250.5,625.1 250.0,625.3 249.5,625.3 249.0,625.3 248.5,625.3 248.0,625.3 247.5,625.3 247.0,625.3 246.5,625.3 246.0,625.3 245.5,625.2 245.4,625.2" fill="#D2B48C"/>
<polygon points="281.1,593.7 281.5,597.0 282.0,601.0 282.5,605.0 283.0,609.0 283.5,608.2 284.0,607.5 284.5,606.8 285.0,606.0 285.5,603.0 286.0,600.0 286.5,597.0 287.0,594.0 287.5,592.8 288.0,591.5 288.5,590.2 289.0,589.0 289.5,589.2 290.0,589.5 290.5,589.8 291.0,590.0 291.5,591.8 292.0,593.5 292.5,595.2 293.0,597.0 293.5,595.0 294.0,593.0 294.5,591.0 295.0,589.0 295.5,590.2 296.0,591.5 296.5,592.8 297.0,594.0 297.5,591.0 298.0,588.0 298.3,586.1 298.3,586.1 298.0,586.0 297.5,585.9 297.0,585.7 296.5,585.6 296.0,585.5 295.5,585.5 295.0,585.6 294.5,585.8 294.0,586.0 293.5,586.1 293.0,586.3 292.5,586.5 292.0,586.6 291.5,586.8 291.0,587.0 290.5,587.1 290.0,587.3 289.5,587.4 289.0,587.6 288.5,587.8 288.0,587.9 287.5,588.1 287.0,588.3 286.5,588.4 286.0,588.8 285.5,589.3 285.0,589.8 284.5,590.3 284.0,590.8 283.5,591.3 283.0,591.8 282.5,592.3 282.0,592.8 281.5,593.3 281.1,593.7" fill="#40E0D0"/>
<polygon points="298.3,586.1 298.5,585.0 299.0,582.0 299.5,582.0 300.0,582.0 300.5,582.0 301.0,582.0 301.5,584.5 302.0,587.0 302.0,587.0 301.5,586.9 301.0,586.7 300.5,586.6 300.0,586.5 299.5,586.4 299.0,586.2 298.5,586.1 298.3,586.1" fill="#D2B48C"/>
<polygon points="302.0,587.0 302.0,587.0 302.5,589.5 303.0,592.0 303.5,596.8 304.0,601.5 304.5,606.2 305.0,611.0 305.5,613.2 306.0,615.5 306.5,617.8 307.0,620.0 307.5,613.0 308.0,606.0 308.5,599.0 308.9,593.4 308.9,593.4 308.5,593.3 308.0,593.0 307.5,592.5 307.0,592.0 306.5,591.5 306.0,591.0 305.5,590.5 305.0,590.0 304.5,589.5 304.0,589.0 303.5,588.5 303.0,588.0 302.5,587.5 302.0,587.0 302.0,587.0" fill="#40E0D0"/>
<polygon points="308.9,593.4 309.0,592.0 309.3,593.6 309.3,593.6 309.0,593.5 308.9,593.4" fill="#D2B48C"/>
<polygon points="309.3,593.6 309.5,594.8 310.0,597.5 310.5,600.2 311.0,603.0 311.5,603.2 312.0,603.5 312.5,603.8 313.0,604.0 313.5,602.0 314.0,600.0 314.5,598.0 315.0,596.0 315.1,595.5 315.1,595.5 315.0,595.4 314.5,595.3 314.0,595.1 313.5,594.9 313.0,594.8 312.5,594.6 312.0,594.5 311.5,594.3 311.0,594.1 310.5,594.0 310.0,593.8 309.5,593.6 309.3,593.6" fill="#40E0D0"/>
<polygon points="315.1,595.5 315.5,592.5 316.0,589.0 316.5,585.5 317.0,582.0 317.5,585.0 318.0,588.0 318.5,591.0 319.0,594.0 319.5,594.5 320.0,595.0 320.5,595.5 321.0,596.0 321.0,596.0 321.0,596.0 321.0,596.0 320.5,596.1 320.0,596.1 319.5,596.1 319.0,596.2 318.5,596.2 318.0,596.3 317.5,596.3 317.0,596.1 316.5,595.9 316.0,595.8 315.5,595.6 315.1,595.5" fill="#D2B48C"/>
<polygon points="321.0,596.0 321.5,598.0 322.0,600.0 322.5,602.0 323.0,604.0 323.5,602.8 324.0,601.5 324.5,600.2 325.0,599.0 325.5,596.5 325.7,595.6 325.7,595.6 325.5,595.7 325.0,595.7 324.5,595.7 324.0,595.8 323.5,595.8 323.0,595.9 322.5,595.9 322.0,595.9 321.5,596.0 321.0,596.0" fill="#40E0D0"/>
<polygon points="325.7,595.6 326.0,594.0 326.5,591.5 327.0,589.0 327.5,590.5 328.0,592.0 328.5,593.5 329.0,595.0 329.2,595.4 329.2,595.4 329.0,595.4 328.5,595.4 328.0,595.5 327.5,595.5 327.0,595.5 326.5,595.6 326.0,595.6 325.7,595.6" fill="#D2B48C"/>
<polygon points="329.2,595.4 329.5,596.0 330.0,597.0 330.5,598.0 331.0,599.0 331.5,601.2 332.0,603.5 332.5,605.8 333.0,608.0 333.5,611.0 334.0,614.0 334.5,617.0 335.0,620.0 335.5,622.5 336.0,625.0 336.5,627.5 337.0,630.0 337.5,630.2 338.0,630.5 338.5,630.8 339.0,631.0 339.5,629.5 340.0,628.0 340.5,626.5 341.0,625.0 341.5,624.2 342.0,623.5 342.5,622.8 343.0,622.0 343.5,621.5 344.0,621.0 344.5,620.5 345.0,620.0 345.5,618.5 346.0,617.0 346.5,615.5 347.0,614.0 347.5,611.5 348.0,609.0 348.5,606.5 348.7,605.4 348.7,605.4 348.5,605.4 348.0,605.3 347.5,605.1 347.0,605.0 346.5,604.8 346.0,604.5 345.5,604.3 345.0,604.0 344.5,603.8 344.0,603.5 343.5,603.3 343.0,603.0 342.5,602.8 342.0,602.5 341.5,602.3 341.0,602.1 340.5,601.8 340.0,601.6 339.5,601.3 339.0,601.1 338.5,600.8 338.0,600.6 337.5,600.3 337.0,600.1 336.5,599.8 336.0,599.4 335.5,599.1 335.0,598.8 334.5,598.4 334.0,598.1 333.5,597.7 333.0,597.4 332.5,597.0 332.0,596.7 331.5,596.3 331.0,596.0 330.5,595.6 330.0,595.3 329.5,595.3 329.2,595.4" fill="#40E0D0"/>
<polygon points="348.7,605.4 349.0,604.0 349.2,605.6 349.2,605.6 349.0,605.5 348.7,605.4" fill="#D2B48C"/>
<polygon points="349.2,605.6 349.5,608.5 350.0,613.0 350.5,617.5 351.0,622.0 351.5,622.0 352.0,622.0 352.5,622.0 353.0,622.0 353.5,621.2 354.0,620.5 354.5,619.8 355.0,619.0 355.5,617.2 356.0,615.5 356.5,613.8 357.0,612.0 357.5,609.2 357.8,607.6 357.8,607.6 357.5,607.6 357.0,607.6 356.5,607.4 356.0,607.3 355.5,607.2 355.0,607.1 354.5,606.9 354.0,606.8 353.5,606.7 353.0,606.5 352.5,606.4 352.0,606.3 351.5,606.2 351.0,606.0 350.5,605.9 350.0,605.8 349.5,605.6 349.2,605.6" fill="#40E0D0"/>
<polygon points="357.8,607.6 358.0,606.5 358.5,603.8 359.0,601.0 359.5,601.0 360.0,601.0 360.5,601.0 361.0,601.0 361.5,600.8 362.0,600.5 362.5,600.2 363.0,600.0 363.5,602.2 364.0,604.5 364.5,606.8 365.0,609.0 365.0,609.0 364.5,608.4 364.0,607.7 363.5,607.6 363.0,607.6 362.5,607.6 362.0,607.6 361.5,607.6 361.0,607.6 360.5,607.6 360.0,607.6 359.5,607.6 359.0,607.6 358.5,607.6 358.0,607.6 357.8,607.6" fill="#D2B48C"/>
<polygon points="365.0,609.0 365.0,609.0 365.5,610.0 366.0,611.0 366.5,612.0 367.0,613.0 367.5,623.0 368.0,633.0 368.5,643.0 369.0,653.0 369.5,653.0 370.0,653.0 370.5,653.0 371.0,653.0 371.5,650.2 372.0,647.5 372.5,644.8 373.0,642.0 373.5,638.8 374.0,635.5 374.5,632.2 375.0,629.0 375.5,628.0 376.0,627.0 376.5,626.0 377.0,625.0 377.5,624.2 378.0,623.5 378.5,622.8 379.0,622.0 379.5,621.8 380.0,621.5 380.5,621.2 381.0,621.0 381.5,621.8 382.0,622.5 382.5,623.2 383.0,624.0 383.5,625.2 384.0,626.5 384.5,627.8 385.0,629.0 385.5,628.5 386.0,628.0 386.5,627.5 387.0,627.0 387.5,627.5 388.0,628.0 388.5,628.5 389.0,629.0 389.5,630.2 390.0,631.5 390.5,632.8 391.0,634.0 391.5,633.8 392.0,633.5 392.5,633.2 393.0,633.0 393.5,634.0 394.0,635.0 394.5,636.0 395.0,637.0 395.5,638.2 396.0,639.5 396.5,640.8 397.0,642.0 397.5,642.5 398.0,643.0 398.5,643.5 399.0,644.0 399.5,642.5 400.0,641.0 400.5,639.5 401.0,638.0 401.5,635.8 402.0,633.5 402.5,631.2 403.0,629.0 403.5,632.2 404.0,635.5 404.5,638.8 405.0,642.0 405.5,642.2 406.0,642.5 406.5,642.8 407.0,643.0 407.5,641.8 408.0,640.5 408.5,639.2 409.0,638.0 409.5,639.0 410.0,640.0 410.5,641.0 411.0,642.0 411.5,642.5 412.0,643.0 412.5,643.5 413.0,644.0 413.5,643.2 414.0,642.5 414.5,641.8 415.0,641.0 415.5,643.2 416.0,645.5 416.5,647.8 417.0,650.0 417.5,654.5 418.0,659.0 418.5,663.5 419.0,668.0 419.5,665.2 420.0,662.5 420.5,659.8 421.0,657.0 421.5,656.0 422.0,655.0 422.5,654.0 423.0,653.0 423.5,653.0 424.0,653.0 424.5,653.0 425.0,653.0 425.5,653.5 426.0,654.0 426.5,654.5 427.0,655.0 427.5,657.0 428.0,659.0 428.5,661.0 429.0,663.0 429.5,663.8 430.0,664.5 430.5,665.2 431.0,666.0 431.5,664.0 432.0,662.0 432.5,660.0 433.0,658.0 433.5,659.0 434.0,660.0 434.5,661.0 435.0,662.0 435.5,660.8 436.0,659.5 436.5,658.2 437.0,657.0 437.5,656.5 438.0,656.0 438.5,655.5 439.0,655.0 439.5,654.5 440.0,654.0 440.5,653.5 441.0,653.0 441.5,650.5 441.5,650.5 441.0,650.4 440.5,650.3 440.0,650.3 439.5,650.2 439.0,650.1 438.5,650.0 438.0,649.7 437.5,649.4 437.0,649.1 436.5,648.8 436.0,648.5 435.5,648.2 435.0,647.9 434.5,647.6 434.0,647.4 433.5,647.1 433.0,646.8 432.5,646.5 432.0,646.2 431.5,645.9 431.0,645.6 430.5,645.3 430.0,645.0 429.5,644.6 429.0,644.3 428.5,643.9 428.0,643.6 427.5,643.2 427.0,642.8 426.5,642.5 426.0,642.1 425.5,641.7 425.0,641.4 424.5,641.0 424.0,640.7 423.5,640.3 423.0,639.9 422.5,639.6 422.0,639.2 421.5,638.9 421.0,638.5 420.5,638.1 420.0,637.8 419.5,637.4 419.0,637.1 418.5,636.7 418.0,636.4 417.5,636.2 417.0,636.0 416.5,635.8 416.0,635.6 415.5,635.4 415.0,635.2 414.5,635.1 414.0,634.9 413.5,634.7 413.0,634.5 412.5,634.3 412.0,634.1 411.5,633.9 411.0,633.6 410.5,633.3 410.0,632.9 409.5,632.6 409.0,632.2 408.5,631.9 408.0,631.5 407.5,631.2 407.0,630.8 406.5,630.5 406.0,630.2 405.5,629.8 405.0,629.5 404.5,629.1 404.0,628.8 403.5,628.4 403.0,628.1 402.5,627.7 402.0,627.3 401.5,627.0 401.0,626.6 400.5,626.2 400.0,625.8 399.5,625.5 399.0,625.1 398.5,624.7 398.0,624.3 397.5,623.9 397.0,623.6 396.5,623.2 396.0,622.9 395.5,622.8 395.0,622.7 394.5,622.6 394.0,622.5 393.5,622.5 393.0,622.4 392.5,622.3 392.0,622.2 391.5,622.1 391.0,622.0 390.5,622.0 390.0,621.9 389.5,621.8 389.0,621.7 388.5,621.6 388.0,621.6 387.5,621.5 387.0,621.4 386.5,621.3 386.0,621.2 385.5,621.1 385.0,621.0 384.5,620.8 384.0,620.7 383.5,620.6 383.0,620.5 382.5,620.3 382.0,620.2 381.5,620.1 381.0,620.0 380.5,619.8 380.0,619.7 379.5,619.6 379.0,619.4 378.5,619.2 378.0,619.0 377.5,618.8 377.0,618.6 376.5,618.4 376.0,618.2 375.5,618.0 375.0,617.8 374.5,617.6 374.0,617.4 373.5,617.2 373.0,617.0 372.5,616.8 372.0,616.6 371.5,616.4 371.0,616.2 370.5,615.9 370.0,615.2 369.5,614.6 369.0,614.0 368.5,613.4 368.0,612.7 367.5,612.1 367.0,611.5 366.5,610.9 366.0,610.2 365.5,609.6 365.0,609.0 365.0,609.0" fill="#40E0D0"/>
<polygon points="441.5,650.5 441.5,650.2 442.0,647.5 442.5,644.8 443.0,642.0 443.5,643.8 444.0,645.5 444.5,647.2 445.0,649.0 445.5,650.2 445.9,651.2 445.9,651.2 445.5,651.2 445.0,651.1 444.5,651.0 444.0,650.9 443.5,650.8 443.0,650.8 442.5,650.7 442.0,650.6 441.5,650.5 441.5,650.5" fill="#D2B48C"/>
<polygon points="445.9,651.2 446.0,651.5 446.5,652.8 447.0,654.0 447.4,651.5 447.4,651.5 447.0,651.4 446.5,651.3 446.0,651.3 445.9,651.2" fill="#40E0D0"/>
<polygon points="447.4,651.5 447.5,651.0 448.0,648.0 448.5,645.0 449.0,642.0 449.5,640.0 450.0,638.0 450.5,636.0 451.0,634.0 451.5,635.0 452.0,636.0 452.5,637.0 453.0,638.0 453.5,634.8 454.0,631.5 454.5,628.2 455.0,625.0 455.5,624.5 456.0,624.0 456.5,623.5 457.0,623.0 457.5,622.8 458.0,622.5 458.5,622.2 459.0,622.0 459.5,623.5 460.0,625.0 460.5,626.5 461.0,628.0 461.5,625.8 462.0,623.5 462.5,621.2 463.0,619.0 463.5,619.0 464.0,619.0 464.5,619.0 465.0,619.0 465.5,620.0 466.0,621.0 466.5,622.0 467.0,623.0 467.5,621.2 468.0,619.5 468.5,617.8 469.0,616.0 469.5,613.8 470.0,611.5 470.5,609.2 471.0,607.0 471.5,606.5 472.0,606.0 472.5,605.5 473.0,605.0 473.5,605.8 474.0,606.5 474.5,607.2 475.0,608.0 475.5,610.2 476.0,612.5 476.5,614.8 477.0,617.0 477.5,616.2 478.0,615.5 478.5,614.8 479.0,614.0 479.5,614.0 480.0,614.0 480.5,614.0 481.0,614.0 481.5,616.2 482.0,618.5 482.5,620.8 483.0,623.0 483.5,624.2 483.5,624.3 483.5,624.3 483.5,624.3 483.0,624.8 482.5,625.2 482.0,625.7 481.5,626.1 481.0,626.6 480.5,627.0 480.0,627.5 479.5,627.9 479.0,628.4 478.5,628.8 478.0,629.3 477.5,629.7 477.0,630.3 476.5,630.9 476.0,631.4 475.5,632.0 475.0,632.6 474.5,633.2 474.0,633.7 473.5,634.3 473.0,634.9 472.5,635.5 472.0,636.1 471.5,636.6 471.0,637.2 470.5,637.8 470.0,638.4 469.5,639.0 469.0,639.5 468.5,640.1 468.0,640.7 467.5,641.3 467.0,641.8 466.5,642.3 466.0,642.8 465.5,643.3 465.0,643.8 464.5,644.3 464.0,644.8 463.5,645.3 463.0,645.8 462.5,646.3 462.0,646.8 461.5,647.3 461.0,647.8 460.5,648.3 460.0,648.8 459.5,649.3 459.0,649.8 458.5,650.0 458.0,650.1 457.5,650.2 457.0,650.3 456.5,650.4 456.0,650.5 455.5,650.6 455.0,650.6 454.5,650.7 454.0,650.8 453.5,650.9 453.0,651.0 452.5,651.1 452.0,651.1 451.5,651.2 451.0,651.3 450.5,651.4 450.0,651.5 449.5,651.6 449.0,651.6 448.5,651.7 448.0,651.6 447.5,651.5 447.4,651.5" fill="#D2B48C"/>
<polygon points="483.5,624.3 484.0,625.5 484.5,626.8 485.0,628.0 485.5,628.2 486.0,628.5 486.5,628.8 487.0,629.0 487.5,628.5 488.0,628.0 488.5,627.5 489.0,627.0 489.5,625.5 490.0,624.0 490.5,622.5 490.9,621.2 490.9,621.2 490.5,621.4 490.0,621.6 489.5,621.8 489.0,621.9 488.5,622.1 488.0,622.3 487.5,622.5 487.0,622.7 486.5,622.9 486.0,623.0 485.5,623.2 485.0,623.4 484.5,623.6 484.0,623.9 483.5,624.3" fill="#40E0D0"/>
<polygon points="490.9,621.2 491.0,621.0 491.0,621.2 491.0,621.2 491.0,621.2 490.9,621.2" fill="#D2B48C"/>
<polygon points="491.0,621.2 491.5,625.8 492.0,630.5 492.5,635.2 493.0,640.0 493.5,641.2 494.0,642.5 494.5,643.8 495.0,645.0 495.5,642.5 496.0,640.0 496.5,637.5 497.0,635.0 497.5,634.8 498.0,634.5 498.5,634.2 499.0,634.0 499.5,633.5 500.0,633.0 500.5,632.5 501.0,632.0 501.5,634.2 502.0,636.5 502.5,638.8 503.0,641.0 503.5,643.2 504.0,645.5 504.5,647.8 505.0,650.0 505.5,651.0 506.0,652.0 506.5,653.0 507.0,654.0 507.5,653.0 508.0,652.0 508.5,651.0 509.0,650.0 509.5,648.5 510.0,647.0 510.5,645.5 511.0,644.0 511.5,643.8 512.0,643.5 512.5,643.2 513.0,643.0 513.5,644.8 514.0,646.5 514.5,648.2 515.0,650.0 515.5,651.8 516.0,653.5 516.5,655.2 517.0,657.0 517.5,656.8 518.0,656.5 518.5,656.2 519.0,656.0 519.5,655.2 520.0,654.5 520.5,653.8 521.0,653.0 521.5,650.8 522.0,648.5 522.5,646.2 523.0,644.0 523.5,642.8 524.0,641.5 524.2,641.0 524.2,641.0 524.0,641.0 523.5,640.9 523.0,640.9 522.5,640.8 522.0,640.8 521.5,640.7 521.0,640.4 520.5,640.1 520.0,639.8 519.5,639.4 519.0,639.1 518.5,638.8 518.0,638.5 517.5,638.2 517.0,637.9 516.5,637.5 516.0,637.2 515.5,636.9 515.0,636.6 514.5,636.2 514.0,635.7 513.5,635.2 513.0,634.7 512.5,634.2 512.0,633.7 511.5,633.2 511.0,632.7 510.5,632.2 510.0,631.7 509.5,631.2 509.0,630.7 508.5,630.2 508.0,629.7 507.5,629.2 507.0,628.7 506.5,628.2 506.0,627.8 505.5,627.4 505.0,626.9 504.5,626.5 504.0,626.1 503.5,625.7 503.0,625.3 502.5,624.9 502.0,624.5 501.5,624.1 501.0,623.7 500.5,623.3 500.0,622.9 499.5,622.5 499.0,622.4 498.5,622.3 498.0,622.3 497.5,622.2 497.0,622.1 496.5,622.0 496.0,622.0 495.5,621.9 495.0,621.8 494.5,621.7 494.0,621.7 493.5,621.6 493.0,621.5 492.5,621.4 492.0,621.4 491.5,621.3 491.0,621.2" fill="#40E0D0"/>
<polygon points="524.2,641.0 524.5,640.2 525.0,639.0 525.5,637.8 526.0,636.5 526.5,635.2 527.0,634.0 527.5,635.2 528.0,636.5 528.5,637.8 529.0,639.0 529.5,638.2 530.0,637.5 530.5,636.8 531.0,636.0 531.5,637.0 532.0,638.0 532.5,639.0 533.0,640.0 533.5,638.0 534.0,636.0 534.5,634.0 535.0,632.0 535.5,631.0 536.0,630.0 536.5,629.0 537.0,628.0 537.5,626.5 538.0,625.0 538.5,623.5 539.0,622.0 539.5,622.5 540.0,623.0 540.5,623.5 541.0,624.0 541.5,623.5 542.0,623.0 542.5,622.5 543.0,622.0 543.5,621.5 544.0,621.0 544.5,620.5 545.0,620.0 545.5,621.8 546.0,623.5 546.5,625.2 547.0,627.0 547.5,624.8 548.0,622.5 548.5,620.2 549.0,618.0 549.5,618.0 550.0,618.0 550.5,618.0 551.0,618.0 551.5,613.8 552.0,609.5 552.5,605.2 553.0,601.0 553.5,600.2 554.0,599.5 554.5,598.8 555.0,598.0 555.5,594.0 556.0,590.0 556.5,586.0 557.0,582.0 557.5,582.5 558.0,583.0 558.5,583.5 559.0,584.0 559.5,584.8 560.0,585.5 560.5,586.2 561.0,587.0 561.5,587.5 562.0,588.0 562.5,588.5 563.0,589.0 563.5,589.8 564.0,590.5 564.5,591.2 565.0,592.0 565.5,594.2 566.0,596.5 566.5,598.8 567.0,601.0 567.5,597.2 568.0,593.5 568.5,589.8 569.0,586.0 569.5,585.2 570.0,584.5 570.5,583.8 571.0,583.0 571.5,584.5 572.0,586.0 572.5,587.5 573.0,589.0 573.5,589.5 574.0,590.0 574.5,590.5 575.0,591.0 575.5,593.0 576.0,595.0 576.5,597.0 577.0,599.0 577.5,599.2 578.0,599.5 578.5,599.8 579.0,600.0 579.5,597.2 580.0,594.5 580.5,591.8 581.0,589.0 581.5,584.2 582.0,579.5 582.5,574.8 583.0,570.0 583.5,572.2 584.0,574.5 584.5,576.8 585.0,579.0 585.5,578.5 586.0,578.0 586.5,577.5 587.0,577.0 587.5,579.8 588.0,582.5 588.5,585.2 589.0,588.0 589.5,588.0 590.0,588.0 590.5,588.0 591.0,588.0 591.5,586.0 592.0,584.0 592.5,582.0 593.0,580.0 593.5,584.8 593.9,588.2 593.9,588.2 593.5,588.3 593.0,588.4 592.5,588.6 592.0,589.0 591.5,589.4 591.0,589.8 590.5,590.2 590.0,590.7 589.5,591.1 589.0,591.5 588.5,591.9 588.0,592.3 587.5,592.7 587.0,593.1 586.5,593.6 586.0,594.0 585.5,594.4 585.0,594.8 584.5,595.2 584.0,595.6 583.5,596.1 583.0,596.5 582.5,597.0 582.0,597.5 581.5,598.0 581.0,598.5 580.5,599.0 580.0,599.5 579.5,600.0 579.0,600.5 578.5,601.0 578.0,601.5 577.5,602.0 577.0,602.5 576.5,603.0 576.0,603.5 575.5,604.0 575.0,604.5 574.5,605.0 574.0,605.5 573.5,606.1 573.0,606.8 572.5,607.4 572.0,608.1 571.5,608.8 571.0,609.4 570.5,610.1 570.0,610.8 569.5,611.4 569.0,612.1 568.5,612.7 568.0,613.4 567.5,614.1 567.0,614.7 566.5,615.4 566.0,616.1 565.5,616.7 565.0,617.4 564.5,618.1 564.0,618.8 563.5,619.5 563.0,620.2 562.5,620.9 562.0,621.6 561.5,622.3 561.0,623.0 560.5,623.7 560.0,624.4 559.5,625.1 559.0,625.8 558.5,626.5 558.0,627.2 557.5,627.9 557.0,628.6 556.5,629.3 556.0,629.8 555.5,630.3 555.0,630.8 554.5,631.3 554.0,631.8 553.5,632.3 553.0,632.8 552.5,633.3 552.0,633.8 551.5,634.3 551.0,634.8 550.5,635.3 550.0,635.8 549.5,636.3 549.0,636.8 548.5,637.1 548.0,637.4 547.5,637.6 547.0,637.9 546.5,638.1 546.0,638.4 545.5,638.6 545.0,638.9 544.5,639.1 544.0,639.4 543.5,639.6 543.0,639.9 542.5,640.1 542.0,640.4 541.5,640.6 541.0,640.9 540.5,641.1 540.0,641.4 539.5,641.6 539.0,641.7 538.5,641.7 538.0,641.7 537.5,641.7 537.0,641.7 536.5,641.7 536.0,641.7 535.5,641.7 535.0,641.7 534.5,641.6 534.0,641.6 533.5,641.6 533.0,641.6 532.5,641.6 532.0,641.6 531.5,641.6 531.0,641.6 530.5,641.6 530.0,641.6 529.5,641.5 529.0,641.5 528.5,641.4 528.0,641.4 527.5,641.3 527.0,641.3 526.5,641.2 526.0,641.2 525.5,641.1 525.0,641.1 524.5,641.0 524.2,641.0" fill="#D2B48C"/>
<polygon points="593.9,588.2 594.0,589.5 594.5,594.2 595.0,599.0 595.5,596.0 596.0,593.0 596.5,590.0 596.9,587.4 596.9,587.4 596.5,587.5 596.0,587.7 595.5,587.8 595.0,587.9 594.5,588.0 594.0,588.2 593.9,588.2" fill="#40E0D0"/>
<polygon points="596.9,587.4 597.0,587.0 597.2,587.4 597.2,587.4 597.0,587.4 596.9,587.4" fill="#D2B48C"/>
<polygon points="597.2,587.4 597.5,588.0 598.0,589.0 598.5,590.0 599.0,591.0 599.5,588.8 600.0,586.7 600.0,586.7 599.5,586.8 599.0,586.9 598.5,587.1 598.0,587.2 597.5,587.3 597.2,587.4" fill="#40E0D0"/>
<polygon points="600.0,586.7 600.0,586.5 600.5,584.2 601.0,582.0 601.5,582.0 602.0,582.0 602.5,582.0 603.0,582.0 603.5,580.8 604.0,579.5 604.5,578.2 605.0,577.0 605.5,576.8 606.0,576.5 606.5,576.2 607.0,576.0 607.5,576.0 608.0,576.0 608.5,576.0 609.0,576.0 609.5,579.8 610.0,583.5 610.0,583.5 609.5,583.6 609.0,583.8 608.5,584.0 608.0,584.2 607.5,584.3 607.0,584.5 606.5,584.7 606.0,584.8 605.5,585.0 605.0,585.2 604.5,585.3 604.0,585.5 603.5,585.7 603.0,585.9 602.5,586.0 602.0,586.2 601.5,586.3 601.0,586.4 600.5,586.6 600.0,586.7 600.0,586.7" fill="#D2B48C"/>
<polygon points="610.0,583.5 610.0,583.5 610.5,587.2 611.0,591.0 611.5,588.8 612.0,586.5 612.5,584.2 612.9,582.5 612.9,582.5 612.5,582.6 612.0,582.8 611.5,583.0 611.0,583.1 610.5,583.3 610.0,583.5 610.0,583.5" fill="#40E0D0"/>
<polygon points="612.9,582.5 613.0,582.0 613.5,580.0 614.0,578.0 614.5,576.0 615.0,574.0 615.5,570.5 616.0,567.0 616.5,563.5 617.0,560.0 617.5,559.8 618.0,559.5 618.5,559.2 619.0,559.0 619.5,562.0 620.0,565.0 620.5,568.0 621.0,571.0 621.5,571.8 622.0,572.5 622.5,573.2 623.0,574.0 623.5,572.8 624.0,571.5 624.5,570.2 625.0,569.0 625.5,568.0 626.0,567.0 626.5,566.0 627.0,565.0 627.5,566.5 628.0,568.0 628.5,569.5 629.0,571.0 629.5,573.2 630.0,575.5 630.3,576.8 630.3,576.8 630.0,576.8 629.5,577.0 629.0,577.1 628.5,577.3 628.0,577.5 627.5,577.6 627.0,577.8 626.5,578.0 626.0,578.1 625.5,578.3 625.0,578.5 624.5,578.7 624.0,578.8 623.5,579.0 623.0,579.2 622.5,579.3 622.0,579.5 621.5,579.7 621.0,579.8 620.5,580.0 620.0,580.2 619.5,580.3 619.0,580.5 618.5,580.7 618.0,580.8 617.5,581.0 617.0,581.2 616.5,581.3 616.0,581.5 615.5,581.6 615.0,581.8 614.5,582.0 614.0,582.1 613.5,582.3 613.0,582.5 612.9,582.5" fill="#D2B48C"/>
<polygon points="630.3,576.8 630.5,577.8 631.0,580.0 631.5,580.2 632.0,580.5 632.5,580.8 633.0,581.0 633.5,581.8 634.0,582.5 634.5,583.2 635.0,584.0 635.5,587.8 636.0,591.5 636.5,595.2 637.0,599.0 637.5,596.5 638.0,594.0 638.5,591.5 639.0,589.0 639.5,590.0 640.0,591.0 640.5,592.0 641.0,593.0 641.5,591.8 642.0,590.5 642.5,589.2 643.0,588.0 643.5,587.8 644.0,587.5 644.5,587.2 645.0,587.0 645.5,586.5 646.0,586.0 646.5,585.5 647.0,585.0 647.5,584.5 648.0,584.0 648.5,583.5 649.0,583.0 649.5,580.8 649.9,578.7 649.9,578.7 649.5,578.7 649.0,578.6 648.5,578.5 648.0,578.5 647.5,578.4 647.0,578.3 646.5,578.2 646.0,578.2 645.5,578.1 645.0,578.0 644.5,577.9 644.0,577.9 643.5,577.8 643.0,577.7 642.5,577.7 642.0,577.6 641.5,577.5 641.0,577.4 640.5,577.4 640.0,577.3 639.5,577.2 639.0,577.2 638.5,577.2 638.0,577.1 637.5,577.1 637.0,577.1 636.5,577.1 636.0,577.1 635.5,577.0 635.0,577.0 634.5,577.0 634.0,577.0 633.5,576.9 633.0,576.9 632.5,576.9 632.0,576.9 631.5,576.9 631.0,576.8 630.5,576.8 630.3,576.8" fill="#40E0D0"/>
<polygon points="649.9,578.7 650.0,578.5 650.5,576.2 651.0,574.0 651.5,575.2 652.0,576.5 652.5,577.8 652.9,578.6 652.9,578.6 652.5,578.7 652.0,578.7 651.5,578.7 651.0,578.8 650.5,578.8 650.0,578.8 649.9,578.7" fill="#D2B48C"/>
<polygon points="652.9,578.6 653.0,579.0 653.2,578.6 653.2,578.6 653.0,578.6 652.9,578.6" fill="#40E0D0"/>
<polygon points="653.2,578.6 653.5,578.0 654.0,577.0 654.5,576.0 655.0,575.0 655.5,576.2 656.0,577.5 656.4,578.4 656.4,578.4 656.0,578.4 655.5,578.5 655.0,578.5 654.5,578.5 654.0,578.6 653.5,578.6 653.2,578.6" fill="#D2B48C"/>
<polygon points="656.4,578.4 656.5,578.8 657.0,580.0 657.5,582.2 658.0,584.5 658.5,586.8 659.0,589.0 659.5,589.5 660.0,590.0 660.5,590.5 661.0,591.0 661.5,588.8 662.0,586.5 662.5,584.2 663.0,582.0 663.5,583.5 664.0,585.0 664.5,586.5 665.0,588.0 665.5,588.0 666.0,588.0 666.5,588.0 667.0,588.0 667.5,589.2 668.0,590.5 668.5,591.8 669.0,593.0 669.5,593.5 670.0,594.0 670.5,594.5 671.0,595.0 671.5,597.5 672.0,600.0 672.5,602.5 673.0,605.0 673.5,604.2 674.0,603.5 674.5,602.8 675.0,602.0 675.5,600.8 676.0,599.5 676.5,598.2 677.0,597.0 677.5,600.8 678.0,604.5 678.5,608.2 679.0,612.0 679.5,613.8 680.0,615.5 680.5,617.2 681.0,619.0 681.5,615.8 682.0,612.5 682.5,609.2 683.0,606.0 683.5,604.5 684.0,603.0 684.5,601.5 685.0,600.0 685.5,599.5 686.0,599.0 686.5,598.5 687.0,598.0 687.5,597.0 688.0,596.0 688.5,595.0 689.0,594.0 689.5,593.8 690.0,593.5 690.0,593.5 690.0,593.5 690.0,593.5 689.5,593.2 689.0,593.0 688.5,592.7 688.0,592.5 687.5,592.2 687.0,591.9 686.5,591.7 686.0,591.4 685.5,591.2 685.0,590.9 684.5,590.7 684.0,590.4 683.5,590.2 683.0,589.9 682.5,589.7 682.0,589.4 681.5,589.2 681.0,588.9 680.5,588.7 680.0,588.4 679.5,588.2 679.0,587.9 678.5,587.7 678.0,587.5 677.5,587.2 677.0,587.0 676.5,586.7 676.0,586.5 675.5,586.2 675.0,586.0 674.5,585.7 674.0,585.5 673.5,585.2 673.0,584.9 672.5,584.7 672.0,584.4 671.5,584.1 671.0,583.8 670.5,583.5 670.0,583.3 669.5,583.0 669.0,582.7 668.5,582.4 668.0,582.1 667.5,581.8 667.0,581.6 666.5,581.3 666.0,581.0 665.5,580.8 665.0,580.7 664.5,580.5 664.0,580.3 663.5,580.1 663.0,580.0 662.5,579.8 662.0,579.6 661.5,579.4 661.0,579.3 660.5,579.1 660.0,578.9 659.5,578.8 659.0,578.6 658.5,578.4 658.0,578.3 657.5,578.3 657.0,578.4 656.5,578.4 656.4,578.4" fill="#40E0D0"/>
<polygon points="690.0,593.5 690.5,593.2 691.0,593.0 691.4,594.2 691.4,594.2 691.0,594.0 690.5,593.7 690.0,593.5" fill="#D2B48C"/>
<polygon points="691.4,594.2 691.5,594.5 692.0,596.0 692.5,597.5 693.0,599.0 693.5,602.8 694.0,606.5 694.5,610.2 695.0,614.0 695.5,611.5 696.0,609.0 696.5,606.5 697.0,604.0 697.5,604.0 698.0,604.0 698.5,604.0 699.0,604.0 699.5,603.0 700.0,602.0 700.5,601.0 701.0,600.0 701.5,602.0 702.0,604.0 702.5,606.0 703.0,608.0 703.5,609.0 704.0,610.0 704.5,611.0 705.0,612.0 705.5,606.8 706.0,601.5 706.1,600.9 706.1,600.9 706.0,600.9 705.5,600.7 705.0,600.5 704.5,600.3 704.0,600.1 703.5,599.9 703.0,599.7 702.5,599.5 702.0,599.3 701.5,599.1 701.0,598.9 700.5,598.7 700.0,598.5 699.5,598.2 699.0,598.0 698.5,597.8 698.0,597.5 697.5,597.2 697.0,597.0 696.5,596.8 696.0,596.5 695.5,596.2 695.0,596.0 694.5,595.8 694.0,595.5 693.5,595.2 693.0,595.0 692.5,594.7 692.0,594.5 691.5,594.2 691.4,594.2" fill="#40E0D0"/>
<polygon points="706.1,600.9 706.5,596.2 707.0,591.0 707.5,592.8 708.0,594.5 708.5,596.2 709.0,598.0 709.5,597.2 710.0,596.5 710.5,595.8 711.0,595.0 711.5,596.2 712.0,597.5 712.5,598.8 713.0,600.0 713.4,603.1 713.4,603.1 713.0,603.0 712.5,602.9 712.0,602.8 711.5,602.6 711.0,602.5 710.5,602.4 710.0,602.3 709.5,602.1 709.0,602.0 708.5,601.9 708.0,601.7 707.5,601.5 707.0,601.3 706.5,601.1 706.1,600.9" fill="#D2B48C"/>
<polygon points="713.4,603.1 713.5,604.2 714.0,608.5 714.5,612.8 715.0,617.0 715.5,616.2 716.0,615.5 716.5,614.8 717.0,614.0 717.5,614.5 718.0,615.0 718.5,615.5 719.0,616.0 719.5,615.0 720.0,614.0 720.5,613.0 721.0,612.0 721.5,615.2 722.0,618.5 722.5,621.8 723.0,625.0 723.5,623.8 724.0,622.5 724.5,621.2 725.0,620.0 725.5,620.0 726.0,620.0 726.5,620.0 727.0,620.0 727.5,618.0 728.0,616.0 728.5,614.0 729.0,612.0 729.5,610.0 730.0,608.0 730.3,606.7 730.3,606.7 730.0,606.6 729.5,606.5 729.0,606.4 728.5,606.3 728.0,606.2 727.5,606.1 727.0,606.0 726.5,605.9 726.0,605.8 725.5,605.7 725.0,605.6 724.5,605.5 724.0,605.4 723.5,605.3 723.0,605.2 722.5,605.1 722.0,605.1 721.5,605.0 721.0,604.9 720.5,604.8 720.0,604.7 719.5,604.6 719.0,604.5 718.5,604.4 718.0,604.3 717.5,604.2 717.0,604.0 716.5,603.9 716.0,603.8 715.5,603.7 715.0,603.5 714.5,603.4 714.0,603.3 713.5,603.2 713.4,603.1" fill="#40E0D0"/>
<polygon points="730.3,606.7 730.5,606.0 731.0,604.0 731.5,606.0 731.7,606.9 731.7,606.9 731.5,606.9 731.0,606.8 730.5,606.7 730.3,606.7" fill="#D2B48C"/>
<polygon points="731.7,606.9 732.0,608.0 732.5,610.0 733.0,612.0 733.5,609.8 734.0,607.5 734.0,607.3 734.0,607.3 734.0,607.3 733.5,607.2 733.0,607.2 732.5,607.1 732.0,607.0 731.7,606.9" fill="#40E0D0"/>
<polygon points="734.0,607.3 734.5,605.2 735.0,603.0 735.5,605.2 736.0,607.5 736.0,607.7 736.0,607.7 736.0,607.7 735.5,607.6 735.0,607.5 734.5,607.4 734.0,607.3" fill="#D2B48C"/>
<polygon points="736.0,607.7 736.5,609.8 737.0,612.0 737.5,612.2 738.0,612.5 738.5,612.8 739.0,613.0 739.5,610.8 740.0,608.5 740.0,608.4 740.0,608.4 740.0,608.4 739.5,608.4 739.0,608.3 738.5,608.2 738.0,608.1 737.5,608.0 737.0,607.9 736.5,607.8 736.0,607.7" fill="#40E0D0"/>
<polygon points="740.0,608.4 740.5,606.2 741.0,604.0 741.5,603.8 742.0,603.5 742.5,603.2 743.0,603.0 743.5,604.2 744.0,605.5 744.5,606.8 745.0,608.0 745.5,610.0 745.5,610.0 745.5,610.0 745.5,610.0 745.0,609.9 744.5,609.7 744.0,609.6 743.5,609.4 743.0,609.3 742.5,609.1 742.0,609.0 741.5,608.9 741.0,608.7 740.5,608.6 740.0,608.4" fill="#D2B48C"/>
<polygon points="745.5,610.0 746.0,612.0 746.5,614.0 747.0,616.0 747.5,620.2 748.0,624.5 748.5,628.8 749.0,633.0 749.5,634.8 750.0,636.5 750.5,638.2 751.0,640.0 751.5,639.8 752.0,639.5 752.5,639.2 753.0,639.0 753.5,640.5 754.0,642.0 754.5,643.5 755.0,645.0 755.5,643.5 756.0,642.0 756.5,640.5 757.0,639.0 757.5,638.0 758.0,637.0 758.5,636.0 759.0,635.0 759.5,637.5 760.0,640.0 760.5,642.5 761.0,645.0 761.5,646.8 762.0,648.5 762.5,650.2 763.0,652.0 763.5,652.2 764.0,652.5 764.5,652.8 765.0,653.0 765.5,659.2 766.0,665.5 766.5,671.8 767.0,678.0 767.5,676.0 768.0,674.0 768.5,672.0 769.0,670.0 769.5,672.0 770.0,674.0 770.5,676.0 771.0,678.0 771.5,674.2 772.0,670.5 772.5,666.8 773.0,663.0 773.5,661.2 774.0,659.5 774.5,657.8 775.0,656.0 775.5,655.8 776.0,655.5 776.5,655.2 777.0,655.0 777.5,656.0 778.0,657.0 778.5,658.0 779.0,659.0 779.5,656.5 780.0,654.0 780.5,651.5 781.0,649.0 781.5,649.0 782.0,649.0 782.5,649.0 783.0,649.0 783.5,651.8 784.0,654.5 784.5,657.2 785.0,660.0 785.5,658.2 786.0,656.5 786.5,654.8 787.0,653.0 787.5,652.8 788.0,652.5 788.5,652.2 789.0,652.0 789.2,648.4 789.2,648.4 789.0,648.2 788.5,647.8 788.0,647.4 787.5,647.0 787.0,646.6 786.5,646.1 786.0,645.7 785.5,645.3 785.0,644.9 784.5,644.5 784.0,644.1 783.5,643.6 783.0,643.2 782.5,642.8 782.0,642.4 781.5,642.0 781.0,641.5 780.5,641.0 780.0,640.5 779.5,640.0 779.0,639.5 778.5,639.0 778.0,638.5 777.5,638.0 777.0,637.5 776.5,637.0 776.0,636.6 775.5,636.1 775.0,635.6 774.5,635.1 774.0,634.6 773.5,634.1 773.0,633.6 772.5,633.1 772.0,632.6 771.5,632.1 771.0,631.6 770.5,631.1 770.0,630.6 769.5,630.1 769.0,629.6 768.5,629.1 768.0,628.6 767.5,628.1 767.0,627.6 766.5,627.1 766.0,626.6 765.5,626.0 765.0,625.5 764.5,625.0 764.0,624.5 763.5,624.0 763.0,623.5 762.5,623.0 762.0,622.5 761.5,622.0 761.0,621.5 760.5,621.0 760.0,620.6 759.5,620.2 759.0,619.8 758.5,619.3 758.0,618.9 757.5,618.5 757.0,618.0 756.5,617.6 756.0,617.2 755.5,616.8 755.0,616.3 754.5,615.9 754.0,615.5 753.5,615.0 753.0,614.6 752.5,614.2 752.0,613.7 751.5,613.3 751.0,612.9 750.5,612.5 750.0,612.0 749.5,611.6 749.0,611.2 748.5,610.9 748.0,610.8 747.5,610.6 747.0,610.5 746.5,610.3 746.0,610.2 745.5,610.0" fill="#40E0D0"/>
<polygon points="789.2,648.4 789.5,644.0 790.0,636.0 790.5,628.0 791.0,620.0 791.5,621.0 792.0,622.0 792.5,623.0 793.0,624.0 793.5,618.8 794.0,613.5 794.5,608.2 795.0,603.0 795.5,604.5 796.0,606.0 796.5,607.5 797.0,609.0 797.5,607.2 798.0,605.5 798.5,603.8 799.0,602.0 799.5,600.0 800.0,598.0 800.5,596.0 801.0,594.0 801.5,597.8 802.0,601.5 802.5,605.2 803.0,609.0 803.5,609.5 804.0,610.0 804.5,610.5 805.0,611.0 805.5,613.5 806.0,616.0 806.5,618.5 807.0,621.0 807.5,620.0 808.0,619.0 808.5,618.0 809.0,617.0 809.5,616.0 810.0,615.0 810.5,614.0 811.0,613.0 811.5,612.2 812.0,611.5 812.5,610.8 813.0,610.0 813.5,610.0 814.0,610.0 814.5,610.0 815.0,610.0 815.5,613.5 816.0,617.0 816.5,620.5 817.0,624.0 817.5,622.2 818.0,620.5 818.5,618.8 819.0,617.0 819.5,613.0 820.0,609.0 820.5,605.0 821.0,601.0 821.5,600.8 822.0,600.5 822.5,600.2 823.0,600.0 823.5,604.0 824.0,608.0 824.5,612.0 825.0,616.0 825.5,613.2 826.0,610.5 826.5,607.8 827.0,605.0 827.5,609.8 828.0,614.5 828.2,616.4 828.2,616.4 828.0,616.6 827.5,617.1 827.0,617.7 826.5,618.2 826.0,618.8 825.5,619.3 825.0,619.9 824.5,620.4 824.0,621.0 823.5,621.5 823.0,622.0 822.5,622.6 822.0,623.1 821.5,623.7 821.0,624.2 820.5,624.8 820.0,625.3 819.5,625.9 819.0,626.4 818.5,627.1 818.0,627.8 817.5,628.5 817.0,629.2 816.5,629.8 816.0,630.5 815.5,631.2 815.0,631.9 814.5,632.6 814.0,633.3 813.5,634.0 813.0,634.7 812.5,635.3 812.0,636.0 811.5,636.3 811.0,636.7 810.5,637.1 810.0,637.5 809.5,637.8 809.0,638.2 808.5,638.6 808.0,639.0 807.5,639.3 807.0,639.7 806.5,640.1 806.0,640.5 805.5,640.8 805.0,641.2 804.5,641.6 804.0,642.0 803.5,642.3 803.0,642.7 802.5,643.1 802.0,643.5 801.5,643.8 801.0,644.1 800.5,644.5 800.0,644.8 799.5,645.1 799.0,645.5 798.5,645.8 798.0,646.1 797.5,646.5 797.0,646.8 796.5,647.1 796.0,647.5 795.5,647.8 795.0,648.1 794.5,648.5 794.0,648.8 793.5,649.1 793.0,649.5 792.5,649.8 792.0,650.1 791.5,650.3 791.0,649.9 790.5,649.5 790.0,649.1 789.5,648.6 789.2,648.4" fill="#D2B48C"/>
<polygon points="828.2,616.4 828.5,619.2 829.0,624.0 829.5,622.8 830.0,621.5 830.5,620.2 831.0,619.0 831.5,621.2 832.0,623.5 832.5,625.8 833.0,628.0 833.5,622.0 834.0,616.0 834.2,613.7 834.2,613.7 834.0,613.7 833.5,613.9 833.0,614.0 832.5,614.2 832.0,614.4 831.5,614.5 831.0,614.7 830.5,614.9 830.0,615.0 829.5,615.2 829.0,615.5 828.5,616.1 828.2,616.4" fill="#40E0D0"/>
<polygon points="834.2,613.7 834.5,610.0 835.0,604.0 835.5,608.5 836.0,613.0 836.0,613.1 836.0,613.1 836.0,613.1 835.5,613.2 835.0,613.4 834.5,613.6 834.2,613.7" fill="#D2B48C"/>
<polygon points="836.0,613.1 836.5,617.5 837.0,622.0 837.5,616.0 837.8,612.5 837.8,612.5 837.5,612.6 837.0,612.7 836.5,612.9 836.0,613.1" fill="#40E0D0"/>
<polygon points="837.8,612.5 838.0,610.0 838.5,604.0 839.0,598.0 839.5,599.5 840.0,601.0 840.5,602.5 841.0,604.0 841.5,604.0 842.0,604.0 842.5,604.0 843.0,604.0 843.5,605.0 844.0,606.0 844.5,607.0 845.0,608.0 845.5,607.0 846.0,606.0 846.5,605.0 847.0,604.0 847.5,603.5 848.0,603.0 848.5,602.5 849.0,602.0 849.5,601.0 850.0,600.0 850.5,599.0 851.0,598.0 851.5,597.8 852.0,597.5 852.5,597.2 853.0,597.0 853.5,604.8 853.9,610.3 853.9,610.3 853.5,610.2 853.0,610.2 852.5,610.3 852.0,610.3 851.5,610.4 851.0,610.5 850.5,610.5 850.0,610.6 849.5,610.7 849.0,610.7 848.5,610.8 848.0,610.8 847.5,610.9 847.0,611.0 846.5,611.0 846.0,611.1 845.5,611.2 845.0,611.2 844.5,611.3 844.0,611.3 843.5,611.4 843.0,611.5 842.5,611.5 842.0,611.6 841.5,611.7 841.0,611.7 840.5,611.8 840.0,611.8 839.5,611.9 839.0,612.1 838.5,612.2 838.0,612.4 837.8,612.5" fill="#D2B48C"/>
<polygon points="853.9,610.3 854.0,612.5 854.5,620.2 855.0,628.0 855.5,625.8 856.0,623.5 856.5,621.2 857.0,619.0 857.5,617.2 858.0,615.5 858.5,613.8 859.0,612.0 859.5,613.8 860.0,615.5 860.5,617.2 861.0,619.0 861.5,620.8 862.0,622.5 862.5,624.2 863.0,626.0 863.5,630.5 864.0,635.0 864.5,639.5 865.0,644.0 865.5,643.5 866.0,643.0 866.5,642.5 867.0,642.0 867.5,642.0 868.0,642.0 868.5,642.0 869.0,642.0 869.5,642.0 870.0,642.0 870.5,642.0 871.0,642.0 871.0,618.7 870.5,618.2 870.0,617.7 869.5,617.2 869.0,616.7 868.5,616.2 868.0,615.7 867.5,615.2 867.0,614.6 866.5,614.1 866.0,613.6 865.5,613.1 865.0,612.6 864.5,612.1 864.0,611.6 863.5,611.1 863.0,611.0 862.5,610.9 862.0,610.9 861.5,610.9 861.0,610.8 860.5,610.8 860.0,610.7 859.5,610.7 859.0,610.7 858.5,610.6 858.0,610.6 857.5,610.5 857.0,610.5 856.5,610.5 856.0,610.4 855.5,610.4 855.0,610.3 854.5,610.3 854.0,610.3 853.9,610.3" fill="#40E0D0"/>
<polyline points="1.0,382.2 24.3,371.3 54.7,359.1 72.9,368.9 97.2,383.4 121.4,400.4 145.7,417.4 170.0,436.9 194.3,461.2 200.0,466.5 225.3,496.0 250.7,525.6 267.6,540.0 276.0,551.0 298.9,579.0 308.2,590.0 330.0,594.0 363.9,599.2 397.8,606.8 430.0,612.3 455.4,618.6 480.8,618.6 504.6,618.6 530.0,625.7 558.2,628.4 592.6,624.5 630.0,619.8 669.1,612.0 692.6,607.3 730.0,603.5 764.2,603.4 807.0,605.0 849.7,609.3 870.3,611.0" fill="none" stroke="#C0C0C0" stroke-width="1" shape-rendering="crispEdges"/>
<polyline points="1.0,387.1 24.3,384.7 54.7,381.0 72.9,387.1 97.2,393.2 121.4,400.4 145.7,410.2 170.0,419.9 194.3,429.6 200.0,432.7 242.2,449.6 284.5,466.5 326.7,483.4 369.0,500.3 411.2,519.3 453.4,544.6 480.8,559.0 506.3,575.0 530.0,589.0 550.3,602.6 570.7,610.4 600.4,611.2 630.0,611.2 661.3,610.4 692.6,611.2 730.0,610.5 764.2,612.8 798.4,615.3 832.6,616.2 870.3,617.0" fill="none" stroke="#D2B48C" stroke-width="1" shape-rendering="crispEdges"/>
<rect x="56" y="234" width="1" height="489" fill="#C0C0C0"/>
<polyline points="0.0,347.0 7.8,347.0 15.6,339.2 23.5,328.2 31.3,315.7 37.6,304.8 43.8,295.4 50.1,289.9 54.8,287.6 57.9,292.3 62.6,315.7 67.3,343.9 72.9,378.6 82.6,446.6 91.1,500.0 99.2,558.0 104.8,564.4 118.4,569.5 130.0,579.0 142.5,581.5 150.3,585.4 158.2,590.0 166.0,594.8 173.8,590.9 183.2,589.3 192.6,586.2 202.0,586.2 209.8,588.5 217.6,597.9 230.0,608.9 236.3,618.2 245.6,625.3 250.3,625.3 261.3,615.1 270.7,605.7 280.0,594.8 286.3,588.5 295.7,585.4 302.0,587.0 308.2,593.2 317.6,596.3 330.0,595.3 336.8,600.0 347.0,605.0 357.1,607.6 363.9,607.6 370.7,616.1 379.2,619.5 385.9,621.2 396.1,622.9 402.9,628.0 411.4,633.9 418.1,636.4 430.0,645.0 438.5,650.0 448.6,651.7 458.8,650.0 467.3,641.5 477.5,629.7 484.2,623.7 491.0,621.2 499.5,622.5 506.3,628.0 514.7,636.4 521.5,640.7 530.0,641.6 539.4,641.7 548.8,637.0 556.6,629.2 564.4,618.2 573.8,605.7 583.2,596.3 592.6,588.5 602.0,586.2 611.4,583.0 620.8,579.9 630.0,576.8 639.4,577.2 650.3,578.8 658.2,578.3 666.0,581.0 673.8,585.4 683.2,590.0 692.6,594.8 700.4,598.7 708.2,601.8 717.6,604.2 730.0,606.6 740.3,608.5 748.8,611.0 760.8,621.3 771.0,631.6 781.3,641.8 791.6,650.4 801.8,643.6 812.1,635.9 819.0,626.4 829.2,615.3 839.5,611.9 853.2,610.2 863.4,611.0 871.1,618.8" fill="none" stroke="#009900" stroke-width="3" stroke-linejoin="round" shape-rendering="crispEdges"/>
<polyline points="0.0,362.7 7.8,359.5 15.6,353.3 25.0,345.5 32.9,337.6 40.7,332.9 46.9,331.4 53.2,328.2 56.0,325.1 57.9,329.8 65.7,340.8 80.2,366.4 97.2,393.2 114.2,427.2 131.2,461.2 150.6,500.0 165.0,532.0 176.0,564.0 181.6,576.0 187.9,578.3 195.7,580.7 208.2,585.4 217.6,590.0 230.0,594.0 237.8,597.9 245.6,602.6 261.3,601.0 277.0,600.2 292.6,599.5 302.0,601.0 311.4,602.6 330.0,603.0 357.1,602.5 363.9,599.2 380.8,600.8 387.6,604.2 397.8,608.5 408.0,613.6 418.1,617.8 430.0,624.0 440.2,627.1 450.3,631.4 453.7,633.9 463.9,633.9 480.8,633.0 489.3,633.9 497.8,635.6 508.0,636.4 518.1,638.1 530.0,637.5 542.5,637.0 555.0,632.3 566.0,626.9 581.6,621.4 598.9,617.0 614.5,611.3 623.9,606.8 630.0,603.6 639.4,598.7 648.8,594.8 659.7,590.0 667.6,586.2 677.0,585.4 689.5,585.7 698.9,587.0 708.2,588.5 717.6,590.0 730.0,593.0 740.3,595.3 750.5,599.1 760.8,605.0 771.0,611.0 781.3,617.0 789.9,621.0 798.4,621.3 815.5,622.2 832.6,624.4 849.7,623.9 860.0,624.7 871.1,626.4" fill="none" stroke="#0000FF" stroke-width="3" stroke-linejoin="round" shape-rendering="crispEdges"/>
<g shape-rendering="crispEdges"><rect x="0" y="322" width="2" height="22" fill="#FF0000"/><rect x="2" y="326" width="2" height="14" fill="#0000FF"/><rect x="4" y="337" width="2" height="5" fill="#0000FF"/><rect x="6" y="340" width="2" height="5" fill="#0000FF"/><rect x="8" y="327" width="2" height="21" fill="#FF0000"/><rect x="10" y="325" width="2" height="6" fill="#0000FF"/><rect x="12" y="312" width="2" height="17" fill="#FF0000"/><rect x="14" y="306" width="2" height="6" fill="#FF0000"/><rect x="16" y="280" width="2" height="26" fill="#FF0000"/><rect x="18" y="280" width="2" height="12" fill="#0000FF"/><rect x="19" y="276" width="1" height="4" fill="#0000FF"/><rect x="20" y="277" width="2" height="6" fill="#FF0000"/><rect x="22" y="276" width="2" height="4" fill="#FF0000"/><rect x="24" y="275" width="2" height="4" fill="#FF0000"/><rect x="26" y="276" width="2" height="2" fill="#FF0000"/><rect x="27" y="264" width="1" height="12" fill="#FF0000"/><rect x="28" y="272" width="2" height="6" fill="#0000FF"/><rect x="30" y="277" width="2" height="9" fill="#0000FF"/><rect x="32" y="279" width="2" height="5" fill="#0000FF"/><rect x="34" y="275" width="2" height="7" fill="#FF0000"/><rect x="36" y="268" width="2" height="12" fill="#FF0000"/><rect x="38" y="268" width="2" height="11" fill="#FF0000"/><rect x="39" y="266" width="1" height="2" fill="#FF0000"/><rect x="40" y="268" width="2" height="12" fill="#0000FF"/><rect x="42" y="281" width="2" height="12" fill="#0000FF"/><rect x="44" y="293" width="2" height="16" fill="#0000FF"/><rect x="46" y="298" width="2" height="10" fill="#FF0000"/><rect x="48" y="293" width="2" height="14" fill="#FF0000"/><rect x="50" y="292" width="2" height="3" fill="#0000FF"/><rect x="52" y="292" width="2" height="2" fill="#0000FF"/><rect x="54" y="293" width="2" height="3" fill="#0000FF"/><rect x="56" y="292" width="2" height="218" fill="#0000FF"/><rect x="58" y="512" width="2" height="37" fill="#0000FF"/><rect x="60" y="529" width="2" height="20" fill="#0000FF"/><rect x="62" y="528" width="2" height="21" fill="#FF0000"/><rect x="64" y="518" width="2" height="18" fill="#0000FF"/><rect x="65" y="516" width="1" height="2" fill="#0000FF"/><rect x="66" y="533" width="2" height="18" fill="#0000FF"/><rect x="68" y="534" width="2" height="25" fill="#0000FF"/><rect x="70" y="539" width="2" height="26" fill="#0000FF"/><rect x="72" y="551" width="2" height="14" fill="#FF0000"/><rect x="74" y="557" width="2" height="15" fill="#0000FF"/><rect x="76" y="570" width="2" height="23" fill="#0000FF"/><rect x="78" y="572" width="2" height="19" fill="#0000FF"/><rect x="80" y="568" width="2" height="13" fill="#FF0000"/><rect x="82" y="566" width="2" height="15" fill="#FF0000"/><rect x="84" y="549" width="2" height="19" fill="#FF0000"/><rect x="86" y="549" width="2" height="24" fill="#0000FF"/><rect x="88" y="570" width="2" height="8" fill="#0000FF"/><rect x="90" y="568" width="2" height="10" fill="#FF0000"/><rect x="92" y="560" width="2" height="23" fill="#FF0000"/><rect x="94" y="558" width="2" height="24" fill="#FF0000"/><rect x="96" y="558" width="2" height="24" fill="#0000FF"/><rect x="98" y="568" width="2" height="22" fill="#0000FF"/><rect x="100" y="573" width="2" height="12" fill="#FF0000"/><rect x="102" y="568" width="2" height="13" fill="#FF0000"/><rect x="104" y="566" width="2" height="6" fill="#FF0000"/><rect x="106" y="567" width="2" height="2" fill="#FF0000"/><rect x="108" y="557" width="2" height="11" fill="#FF0000"/><rect x="109" y="550" width="1" height="7" fill="#FF0000"/><rect x="110" y="550" width="2" height="20" fill="#0000FF"/><rect x="112" y="565" width="2" height="5" fill="#0000FF"/><rect x="114" y="561" width="2" height="7" fill="#FF0000"/><rect x="116" y="565" width="2" height="8" fill="#0000FF"/><rect x="118" y="570" width="2" height="6" fill="#FF0000"/><rect x="120" y="576" width="2" height="33" fill="#0000FF"/><rect x="122" y="593" width="2" height="25" fill="#0000FF"/><rect x="124" y="605" width="2" height="19" fill="#0000FF"/><rect x="125" y="624" width="1" height="1" fill="#0000FF"/><rect x="126" y="595" width="2" height="24" fill="#FF0000"/><rect x="128" y="602" width="2" height="12" fill="#0000FF"/><rect x="130" y="596" width="2" height="14" fill="#FF0000"/><rect x="132" y="578" width="2" height="19" fill="#FF0000"/><rect x="134" y="578" width="2" height="13" fill="#0000FF"/><rect x="136" y="582" width="2" height="9" fill="#FF0000"/><rect x="138" y="560" width="2" height="24" fill="#FF0000"/><rect x="140" y="567" width="2" height="15" fill="#0000FF"/><rect x="141" y="562" width="1" height="5" fill="#0000FF"/><rect x="142" y="582" width="2" height="9" fill="#0000FF"/><rect x="144" y="583" width="2" height="3" fill="#0000FF"/><rect x="146" y="584" width="2" height="3" fill="#0000FF"/><rect x="148" y="591" width="2" height="10" fill="#0000FF"/><rect x="149" y="601" width="1" height="2" fill="#0000FF"/><rect x="150" y="595" width="2" height="7" fill="#0000FF"/><rect x="152" y="584" width="2" height="12" fill="#FF0000"/><rect x="154" y="569" width="2" height="19" fill="#FF0000"/><rect x="155" y="567" width="1" height="2" fill="#FF0000"/><rect x="156" y="578" width="2" height="28" fill="#0000FF"/><rect x="158" y="599" width="2" height="11" fill="#FF0000"/><rect x="160" y="595" width="2" height="11" fill="#0000FF"/><rect x="162" y="606" width="2" height="22" fill="#0000FF"/><rect x="163" y="628" width="1" height="1" fill="#0000FF"/><rect x="164" y="595" width="2" height="31" fill="#FF0000"/><rect x="166" y="595" width="2" height="17" fill="#FF0000"/><rect x="168" y="587" width="2" height="8" fill="#0000FF"/><rect x="170" y="579" width="2" height="12" fill="#FF0000"/><rect x="172" y="570" width="2" height="10" fill="#FF0000"/><rect x="174" y="565" width="2" height="17" fill="#0000FF"/><rect x="176" y="567" width="2" height="15" fill="#0000FF"/><rect x="178" y="562" width="2" height="17" fill="#FF0000"/><rect x="180" y="571" width="2" height="8" fill="#0000FF"/><rect x="182" y="571" width="2" height="13" fill="#0000FF"/><rect x="184" y="571" width="2" height="11" fill="#FF0000"/><rect x="186" y="562" width="2" height="12" fill="#FF0000"/><rect x="188" y="563" width="2" height="12" fill="#FF0000"/><rect x="190" y="562" width="2" height="9" fill="#FF0000"/><rect x="192" y="562" width="2" height="33" fill="#0000FF"/><rect x="193" y="561" width="1" height="1" fill="#0000FF"/><rect x="194" y="578" width="2" height="19" fill="#0000FF"/><rect x="196" y="595" width="2" height="11" fill="#0000FF"/><rect x="198" y="600" width="2" height="13" fill="#0000FF"/><rect x="200" y="608" width="2" height="14" fill="#0000FF"/><rect x="202" y="608" width="2" height="5" fill="#FF0000"/><rect x="204" y="604" width="2" height="9" fill="#FF0000"/><rect x="206" y="602" width="2" height="17" fill="#0000FF"/><rect x="208" y="618" width="2" height="16" fill="#0000FF"/><rect x="210" y="623" width="2" height="9" fill="#FF0000"/><rect x="212" y="625" width="2" height="5" fill="#FF0000"/><rect x="214" y="626" width="2" height="9" fill="#FF0000"/><rect x="216" y="621" width="2" height="9" fill="#FF0000"/><rect x="218" y="612" width="2" height="11" fill="#FF0000"/><rect x="220" y="613" width="2" height="5" fill="#0000FF"/><rect x="222" y="613" width="2" height="10" fill="#0000FF"/><rect x="224" y="615" width="2" height="11" fill="#0000FF"/><rect x="226" y="618" width="2" height="10" fill="#0000FF"/><rect x="228" y="619" width="2" height="11" fill="#0000FF"/><rect x="230" y="627" width="2" height="13" fill="#0000FF"/><rect x="232" y="630" width="2" height="7" fill="#0000FF"/><rect x="234" y="634" width="2" height="6" fill="#0000FF"/><rect x="236" y="632" width="2" height="7" fill="#FF0000"/><rect x="238" y="634" width="2" height="10" fill="#0000FF"/><rect x="239" y="644" width="1" height="1" fill="#0000FF"/><rect x="240" y="627" width="2" height="12" fill="#FF0000"/><rect x="242" y="628" width="2" height="11" fill="#FF0000"/><rect x="244" y="629" width="2" height="7" fill="#FF0000"/><rect x="246" y="612" width="2" height="20" fill="#FF0000"/><rect x="248" y="597" width="2" height="18" fill="#FF0000"/><rect x="250" y="597" width="2" height="12" fill="#0000FF"/><rect x="252" y="602" width="2" height="5" fill="#FF0000"/><rect x="254" y="588" width="2" height="15" fill="#FF0000"/><rect x="256" y="579" width="2" height="10" fill="#FF0000"/><rect x="258" y="577" width="2" height="5" fill="#0000FF"/><rect x="260" y="571" width="2" height="10" fill="#FF0000"/><rect x="262" y="571" width="2" height="8" fill="#0000FF"/><rect x="264" y="571" width="2" height="2" fill="#FF0000"/><rect x="266" y="567" width="2" height="6" fill="#0000FF"/><rect x="267" y="566" width="1" height="1" fill="#0000FF"/><rect x="268" y="572" width="2" height="9" fill="#0000FF"/><rect x="270" y="573" width="2" height="7" fill="#0000FF"/><rect x="272" y="576" width="2" height="5" fill="#FF0000"/><rect x="274" y="573" width="2" height="15" fill="#0000FF"/><rect x="276" y="582" width="2" height="7" fill="#0000FF"/><rect x="278" y="581" width="2" height="7" fill="#FF0000"/><rect x="280" y="583" width="2" height="10" fill="#0000FF"/><rect x="282" y="592" width="2" height="17" fill="#0000FF"/><rect x="284" y="594" width="2" height="12" fill="#0000FF"/><rect x="286" y="594" width="2" height="9" fill="#FF0000"/><rect x="288" y="589" width="2" height="8" fill="#FF0000"/><rect x="290" y="590" width="2" height="4" fill="#FF0000"/><rect x="292" y="589" width="2" height="8" fill="#0000FF"/><rect x="294" y="589" width="2" height="6" fill="#FF0000"/><rect x="296" y="589" width="2" height="5" fill="#0000FF"/><rect x="298" y="582" width="2" height="11" fill="#FF0000"/><rect x="300" y="582" width="2" height="7" fill="#FF0000"/><rect x="302" y="582" width="2" height="10" fill="#0000FF"/><rect x="304" y="592" width="2" height="19" fill="#0000FF"/><rect x="306" y="609" width="2" height="11" fill="#0000FF"/><rect x="308" y="592" width="2" height="28" fill="#FF0000"/><rect x="310" y="592" width="2" height="11" fill="#0000FF"/><rect x="312" y="595" width="2" height="9" fill="#0000FF"/><rect x="314" y="596" width="2" height="8" fill="#FF0000"/><rect x="316" y="582" width="2" height="14" fill="#FF0000"/><rect x="317" y="581" width="1" height="1" fill="#FF0000"/><rect x="318" y="582" width="2" height="12" fill="#0000FF"/><rect x="320" y="591" width="2" height="5" fill="#0000FF"/><rect x="322" y="596" width="2" height="8" fill="#0000FF"/><rect x="324" y="599" width="2" height="5" fill="#FF0000"/><rect x="326" y="589" width="2" height="11" fill="#FF0000"/><rect x="328" y="588" width="2" height="7" fill="#0000FF"/><rect x="329" y="583" width="1" height="5" fill="#0000FF"/><rect x="330" y="594" width="2" height="5" fill="#0000FF"/><rect x="332" y="596" width="2" height="12" fill="#0000FF"/><rect x="334" y="596" width="2" height="24" fill="#0000FF"/><rect x="336" y="614" width="2" height="16" fill="#0000FF"/><rect x="338" y="620" width="2" height="11" fill="#0000FF"/><rect x="340" y="625" width="2" height="6" fill="#FF0000"/><rect x="342" y="622" width="2" height="5" fill="#FF0000"/><rect x="344" y="620" width="2" height="5" fill="#FF0000"/><rect x="346" y="614" width="2" height="7" fill="#FF0000"/><rect x="348" y="604" width="2" height="12" fill="#FF0000"/><rect x="350" y="609" width="2" height="13" fill="#0000FF"/><rect x="352" y="618" width="2" height="4" fill="#0000FF"/><rect x="354" y="619" width="2" height="6" fill="#FF0000"/><rect x="356" y="612" width="2" height="10" fill="#FF0000"/><rect x="358" y="601" width="2" height="12" fill="#FF0000"/><rect x="360" y="601" width="2" height="8" fill="#FF0000"/><rect x="362" y="600" width="2" height="10" fill="#FF0000"/><rect x="364" y="599" width="2" height="10" fill="#0000FF"/><rect x="366" y="600" width="2" height="13" fill="#0000FF"/><rect x="368" y="616" width="2" height="37" fill="#0000FF"/><rect x="369" y="653" width="1" height="5" fill="#0000FF"/><rect x="370" y="630" width="2" height="23" fill="#0000FF"/><rect x="372" y="642" width="2" height="11" fill="#FF0000"/><rect x="374" y="629" width="2" height="13" fill="#FF0000"/><rect x="376" y="625" width="2" height="4" fill="#FF0000"/><rect x="378" y="622" width="2" height="3" fill="#FF0000"/><rect x="380" y="621" width="2" height="4" fill="#FF0000"/><rect x="382" y="621" width="2" height="3" fill="#0000FF"/><rect x="384" y="623" width="2" height="6" fill="#0000FF"/><rect x="386" y="627" width="2" height="5" fill="#FF0000"/><rect x="388" y="625" width="2" height="4" fill="#0000FF"/><rect x="390" y="628" width="2" height="6" fill="#0000FF"/><rect x="392" y="630" width="2" height="3" fill="#0000FF"/><rect x="394" y="632" width="2" height="5" fill="#0000FF"/><rect x="396" y="634" width="2" height="8" fill="#0000FF"/><rect x="398" y="640" width="2" height="4" fill="#0000FF"/><rect x="400" y="638" width="2" height="7" fill="#FF0000"/><rect x="402" y="629" width="2" height="11" fill="#FF0000"/><rect x="404" y="634" width="2" height="8" fill="#0000FF"/><rect x="406" y="638" width="2" height="5" fill="#0000FF"/><rect x="408" y="638" width="2" height="6" fill="#FF0000"/><rect x="410" y="638" width="2" height="4" fill="#0000FF"/><rect x="412" y="641" width="2" height="3" fill="#0000FF"/><rect x="414" y="641" width="2" height="2" fill="#FF0000"/><rect x="416" y="641" width="2" height="9" fill="#0000FF"/><rect x="418" y="650" width="2" height="18" fill="#0000FF"/><rect x="419" y="668" width="1" height="1" fill="#0000FF"/><rect x="420" y="657" width="2" height="10" fill="#FF0000"/><rect x="422" y="653" width="2" height="6" fill="#FF0000"/><rect x="424" y="653" width="2" height="5" fill="#FF0000"/><rect x="426" y="650" width="2" height="5" fill="#0000FF"/><rect x="428" y="653" width="2" height="10" fill="#0000FF"/><rect x="430" y="658" width="2" height="8" fill="#0000FF"/><rect x="432" y="658" width="2" height="8" fill="#FF0000"/><rect x="434" y="655" width="2" height="7" fill="#0000FF"/><rect x="436" y="657" width="2" height="5" fill="#FF0000"/><rect x="438" y="655" width="2" height="3" fill="#FF0000"/><rect x="440" y="653" width="2" height="4" fill="#FF0000"/><rect x="442" y="642" width="2" height="13" fill="#FF0000"/><rect x="444" y="642" width="2" height="7" fill="#0000FF"/><rect x="446" y="645" width="2" height="9" fill="#0000FF"/><rect x="448" y="642" width="2" height="12" fill="#FF0000"/><rect x="450" y="634" width="2" height="8" fill="#FF0000"/><rect x="452" y="634" width="2" height="4" fill="#0000FF"/><rect x="454" y="625" width="2" height="13" fill="#FF0000"/><rect x="456" y="623" width="2" height="4" fill="#FF0000"/><rect x="458" y="622" width="2" height="3" fill="#FF0000"/><rect x="460" y="621" width="2" height="7" fill="#0000FF"/><rect x="462" y="619" width="2" height="5" fill="#FF0000"/><rect x="464" y="619" width="2" height="2" fill="#FF0000"/><rect x="466" y="617" width="2" height="6" fill="#0000FF"/><rect x="468" y="616" width="2" height="5" fill="#FF0000"/><rect x="470" y="607" width="2" height="10" fill="#FF0000"/><rect x="472" y="605" width="2" height="5" fill="#FF0000"/><rect x="474" y="605" width="2" height="3" fill="#0000FF"/><rect x="476" y="607" width="2" height="10" fill="#0000FF"/><rect x="478" y="614" width="2" height="5" fill="#FF0000"/><rect x="480" y="614" width="2" height="5" fill="#FF0000"/><rect x="482" y="613" width="2" height="10" fill="#0000FF"/><rect x="484" y="621" width="2" height="7" fill="#0000FF"/><rect x="486" y="625" width="2" height="4" fill="#0000FF"/><rect x="488" y="627" width="2" height="5" fill="#FF0000"/><rect x="490" y="621" width="2" height="6" fill="#FF0000"/><rect x="492" y="621" width="2" height="19" fill="#0000FF"/><rect x="494" y="635" width="2" height="10" fill="#0000FF"/><rect x="495" y="645" width="1" height="1" fill="#0000FF"/><rect x="496" y="635" width="2" height="9" fill="#FF0000"/><rect x="498" y="634" width="2" height="10" fill="#FF0000"/><rect x="500" y="632" width="2" height="3" fill="#FF0000"/><rect x="502" y="632" width="2" height="9" fill="#0000FF"/><rect x="504" y="640" width="2" height="10" fill="#0000FF"/><rect x="506" y="650" width="2" height="4" fill="#0000FF"/><rect x="508" y="650" width="2" height="4" fill="#FF0000"/><rect x="510" y="644" width="2" height="8" fill="#FF0000"/><rect x="512" y="643" width="2" height="2" fill="#FF0000"/><rect x="514" y="643" width="2" height="7" fill="#0000FF"/><rect x="516" y="650" width="2" height="7" fill="#0000FF"/><rect x="517" y="657" width="1" height="1" fill="#0000FF"/><rect x="518" y="656" width="2" height="2" fill="#FF0000"/><rect x="520" y="653" width="2" height="5" fill="#FF0000"/><rect x="522" y="644" width="2" height="12" fill="#FF0000"/><rect x="524" y="639" width="2" height="6" fill="#FF0000"/><rect x="526" y="634" width="2" height="6" fill="#FF0000"/><rect x="528" y="634" width="2" height="5" fill="#0000FF"/><rect x="530" y="636" width="2" height="4" fill="#FF0000"/><rect x="532" y="637" width="2" height="3" fill="#0000FF"/><rect x="534" y="632" width="2" height="7" fill="#FF0000"/><rect x="536" y="628" width="2" height="7" fill="#FF0000"/><rect x="538" y="622" width="2" height="9" fill="#FF0000"/><rect x="540" y="622" width="2" height="2" fill="#0000FF"/><rect x="542" y="622" width="2" height="2" fill="#FF0000"/><rect x="544" y="620" width="2" height="3" fill="#FF0000"/><rect x="546" y="620" width="2" height="7" fill="#0000FF"/><rect x="548" y="618" width="2" height="4" fill="#FF0000"/><rect x="550" y="618" width="2" height="2" fill="#FF0000"/><rect x="552" y="601" width="2" height="18" fill="#FF0000"/><rect x="554" y="598" width="2" height="3" fill="#FF0000"/><rect x="556" y="582" width="2" height="17" fill="#FF0000"/><rect x="558" y="582" width="2" height="2" fill="#0000FF"/><rect x="559" y="577" width="1" height="5" fill="#0000FF"/><rect x="560" y="582" width="2" height="5" fill="#0000FF"/><rect x="562" y="583" width="2" height="6" fill="#0000FF"/><rect x="564" y="589" width="2" height="3" fill="#0000FF"/><rect x="566" y="591" width="2" height="10" fill="#0000FF"/><rect x="568" y="586" width="2" height="15" fill="#FF0000"/><rect x="570" y="583" width="2" height="3" fill="#FF0000"/><rect x="571" y="575" width="1" height="8" fill="#FF0000"/><rect x="572" y="583" width="2" height="6" fill="#0000FF"/><rect x="574" y="587" width="2" height="4" fill="#0000FF"/><rect x="576" y="588" width="2" height="11" fill="#0000FF"/><rect x="578" y="596" width="2" height="4" fill="#0000FF"/><rect x="580" y="589" width="2" height="11" fill="#FF0000"/><rect x="582" y="570" width="2" height="19" fill="#FF0000"/><rect x="584" y="570" width="2" height="9" fill="#0000FF"/><rect x="586" y="577" width="2" height="10" fill="#FF0000"/><rect x="588" y="577" width="2" height="11" fill="#0000FF"/><rect x="590" y="585" width="2" height="3" fill="#0000FF"/><rect x="592" y="580" width="2" height="8" fill="#FF0000"/><rect x="594" y="582" width="2" height="17" fill="#0000FF"/><rect x="596" y="587" width="2" height="12" fill="#FF0000"/><rect x="598" y="587" width="2" height="4" fill="#0000FF"/><rect x="600" y="582" width="2" height="11" fill="#FF0000"/><rect x="602" y="582" width="2" height="2" fill="#FF0000"/><rect x="604" y="577" width="2" height="6" fill="#FF0000"/><rect x="606" y="576" width="2" height="4" fill="#FF0000"/><rect x="608" y="576" width="2" height="3" fill="#FF0000"/><rect x="610" y="576" width="2" height="15" fill="#0000FF"/><rect x="612" y="582" width="2" height="9" fill="#FF0000"/><rect x="614" y="574" width="2" height="9" fill="#FF0000"/><rect x="616" y="560" width="2" height="9" fill="#FF0000"/><rect x="617" y="555" width="1" height="5" fill="#FF0000"/><rect x="618" y="559" width="2" height="4" fill="#FF0000"/><rect x="620" y="561" width="2" height="10" fill="#0000FF"/><rect x="622" y="570" width="2" height="4" fill="#0000FF"/><rect x="624" y="569" width="2" height="5" fill="#FF0000"/><rect x="626" y="565" width="2" height="5" fill="#FF0000"/><rect x="628" y="567" width="2" height="4" fill="#0000FF"/><rect x="630" y="570" width="2" height="10" fill="#0000FF"/><rect x="632" y="578" width="2" height="3" fill="#0000FF"/><rect x="634" y="579" width="2" height="5" fill="#0000FF"/><rect x="636" y="583" width="2" height="16" fill="#0000FF"/><rect x="638" y="589" width="2" height="10" fill="#FF0000"/><rect x="640" y="593" width="2" height="4" fill="#FF0000"/><rect x="642" y="588" width="2" height="7" fill="#FF0000"/><rect x="644" y="587" width="2" height="5" fill="#FF0000"/><rect x="646" y="585" width="2" height="6" fill="#FF0000"/><rect x="648" y="583" width="2" height="5" fill="#FF0000"/><rect x="650" y="574" width="2" height="10" fill="#FF0000"/><rect x="652" y="576" width="2" height="3" fill="#0000FF"/><rect x="654" y="575" width="2" height="5" fill="#FF0000"/><rect x="656" y="575" width="2" height="5" fill="#0000FF"/><rect x="657" y="567" width="1" height="8" fill="#0000FF"/><rect x="658" y="578" width="2" height="11" fill="#0000FF"/><rect x="660" y="587" width="2" height="4" fill="#0000FF"/><rect x="662" y="582" width="2" height="9" fill="#FF0000"/><rect x="664" y="580" width="2" height="8" fill="#0000FF"/><rect x="666" y="582" width="2" height="6" fill="#0000FF"/><rect x="668" y="585" width="2" height="8" fill="#0000FF"/><rect x="670" y="588" width="2" height="7" fill="#0000FF"/><rect x="672" y="592" width="2" height="13" fill="#0000FF"/><rect x="674" y="602" width="2" height="6" fill="#FF0000"/><rect x="675" y="608" width="1" height="8" fill="#FF0000"/><rect x="676" y="597" width="2" height="11" fill="#FF0000"/><rect x="678" y="597" width="2" height="15" fill="#0000FF"/><rect x="680" y="610" width="2" height="9" fill="#0000FF"/><rect x="682" y="606" width="2" height="10" fill="#FF0000"/><rect x="684" y="600" width="2" height="10" fill="#FF0000"/><rect x="686" y="598" width="2" height="10" fill="#FF0000"/><rect x="688" y="594" width="2" height="5" fill="#FF0000"/><rect x="690" y="593" width="2" height="5" fill="#FF0000"/><rect x="692" y="593" width="2" height="6" fill="#0000FF"/><rect x="694" y="598" width="2" height="16" fill="#0000FF"/><rect x="696" y="604" width="2" height="10" fill="#FF0000"/><rect x="698" y="604" width="2" height="4" fill="#FF0000"/><rect x="700" y="600" width="2" height="6" fill="#FF0000"/><rect x="702" y="599" width="2" height="9" fill="#0000FF"/><rect x="704" y="608" width="2" height="4" fill="#0000FF"/><rect x="706" y="591" width="2" height="21" fill="#FF0000"/><rect x="708" y="590" width="2" height="8" fill="#0000FF"/><rect x="710" y="595" width="2" height="5" fill="#FF0000"/><rect x="712" y="594" width="2" height="6" fill="#0000FF"/><rect x="714" y="599" width="2" height="18" fill="#0000FF"/><rect x="716" y="610" width="2" height="4" fill="#0000FF"/><rect x="718" y="610" width="2" height="6" fill="#0000FF"/><rect x="720" y="612" width="2" height="4" fill="#FF0000"/><rect x="722" y="615" width="2" height="10" fill="#0000FF"/><rect x="723" y="625" width="1" height="1" fill="#0000FF"/><rect x="724" y="620" width="2" height="4" fill="#FF0000"/><rect x="726" y="620" width="2" height="4" fill="#FF0000"/><rect x="728" y="612" width="2" height="8" fill="#FF0000"/><rect x="730" y="604" width="2" height="8" fill="#FF0000"/><rect x="732" y="604" width="2" height="8" fill="#0000FF"/><rect x="734" y="603" width="2" height="9" fill="#FF0000"/><rect x="736" y="604" width="2" height="8" fill="#0000FF"/><rect x="738" y="608" width="2" height="5" fill="#0000FF"/><rect x="740" y="604" width="2" height="9" fill="#FF0000"/><rect x="742" y="603" width="2" height="6" fill="#FF0000"/><rect x="743" y="598" width="1" height="5" fill="#FF0000"/><rect x="744" y="604" width="2" height="4" fill="#0000FF"/><rect x="746" y="606" width="2" height="10" fill="#0000FF"/><rect x="748" y="616" width="2" height="17" fill="#0000FF"/><rect x="750" y="630" width="2" height="10" fill="#0000FF"/><rect x="752" y="633" width="2" height="6" fill="#0000FF"/><rect x="754" y="637" width="2" height="8" fill="#0000FF"/><rect x="756" y="639" width="2" height="6" fill="#FF0000"/><rect x="758" y="635" width="2" height="5" fill="#FF0000"/><rect x="760" y="633" width="2" height="12" fill="#0000FF"/><rect x="762" y="643" width="2" height="9" fill="#0000FF"/><rect x="764" y="647" width="2" height="6" fill="#0000FF"/><rect x="766" y="653" width="2" height="25" fill="#0000FF"/><rect x="768" y="670" width="2" height="8" fill="#FF0000"/><rect x="770" y="670" width="2" height="8" fill="#0000FF"/><rect x="771" y="678" width="1" height="16" fill="#0000FF"/><rect x="772" y="663" width="2" height="10" fill="#FF0000"/><rect x="774" y="656" width="2" height="9" fill="#FF0000"/><rect x="776" y="655" width="2" height="2" fill="#FF0000"/><rect x="778" y="655" width="2" height="4" fill="#0000FF"/><rect x="780" y="649" width="2" height="10" fill="#FF0000"/><rect x="782" y="649" width="2" height="3" fill="#FF0000"/><rect x="784" y="648" width="2" height="12" fill="#0000FF"/><rect x="786" y="653" width="2" height="7" fill="#FF0000"/><rect x="788" y="652" width="2" height="4" fill="#FF0000"/><rect x="790" y="620" width="2" height="33" fill="#FF0000"/><rect x="792" y="617" width="2" height="7" fill="#0000FF"/><rect x="794" y="603" width="2" height="26" fill="#FF0000"/><rect x="796" y="603" width="2" height="6" fill="#0000FF"/><rect x="798" y="602" width="2" height="5" fill="#FF0000"/><rect x="800" y="594" width="2" height="10" fill="#FF0000"/><rect x="802" y="596" width="2" height="13" fill="#0000FF"/><rect x="804" y="608" width="2" height="3" fill="#0000FF"/><rect x="806" y="611" width="2" height="10" fill="#0000FF"/><rect x="808" y="617" width="2" height="4" fill="#FF0000"/><rect x="810" y="613" width="2" height="5" fill="#FF0000"/><rect x="811" y="601" width="1" height="12" fill="#FF0000"/><rect x="812" y="610" width="2" height="5" fill="#FF0000"/><rect x="814" y="610" width="2" height="4" fill="#FF0000"/><rect x="816" y="610" width="2" height="14" fill="#0000FF"/><rect x="818" y="617" width="2" height="7" fill="#FF0000"/><rect x="820" y="601" width="2" height="16" fill="#FF0000"/><rect x="822" y="600" width="2" height="4" fill="#FF0000"/><rect x="824" y="599" width="2" height="17" fill="#0000FF"/><rect x="826" y="605" width="2" height="11" fill="#FF0000"/><rect x="828" y="603" width="2" height="21" fill="#0000FF"/><rect x="830" y="619" width="2" height="9" fill="#FF0000"/><rect x="832" y="618" width="2" height="10" fill="#0000FF"/><rect x="834" y="604" width="2" height="24" fill="#FF0000"/><rect x="836" y="611" width="2" height="11" fill="#0000FF"/><rect x="838" y="598" width="2" height="14" fill="#FF0000"/><rect x="840" y="591" width="2" height="13" fill="#0000FF"/><rect x="841" y="590" width="1" height="1" fill="#0000FF"/><rect x="842" y="599" width="2" height="5" fill="#0000FF"/><rect x="844" y="602" width="2" height="6" fill="#0000FF"/><rect x="846" y="604" width="2" height="4" fill="#FF0000"/><rect x="848" y="602" width="2" height="3" fill="#FF0000"/><rect x="849" y="591" width="1" height="11" fill="#FF0000"/><rect x="850" y="598" width="2" height="5" fill="#FF0000"/><rect x="852" y="597" width="2" height="4" fill="#FF0000"/><rect x="853" y="593" width="1" height="4" fill="#FF0000"/><rect x="854" y="596" width="2" height="32" fill="#0000FF"/><rect x="856" y="619" width="2" height="10" fill="#FF0000"/><rect x="858" y="612" width="2" height="11" fill="#FF0000"/><rect x="860" y="611" width="2" height="8" fill="#0000FF"/><rect x="862" y="616" width="2" height="10" fill="#0000FF"/><rect x="864" y="626" width="2" height="18" fill="#0000FF"/><rect x="866" y="642" width="2" height="2" fill="#FF0000"/><rect x="868" y="642" width="2" height="2" fill="#FF0000"/><rect x="870" y="642" width="2" height="2" fill="#FF0000"/></g>
<g shape-rendering="crispEdges" fill="#FF0000"><rect x="9" y="241" width="6" height="3"/><rect x="8" y="242" width="8" height="1"/></g>
<g shape-rendering="crispEdges"><rect x="0" y="30" width="947" height="1" fill="#000"/><rect x="0" y="130" width="947" height="1" fill="#000"/><rect x="0" y="233" width="947" height="1" fill="#000"/><rect x="0" y="723" width="947" height="1" fill="#000"/><rect x="0" y="742" width="893" height="1" fill="#000"/><rect x="892" y="31" width="1" height="99" fill="#000"/><rect x="892" y="133" width="1" height="100" fill="#000"/><rect x="892" y="236" width="1" height="507" fill="#000"/><rect x="892" y="34" width="6" height="1" fill="#000"/><rect x="892" y="43" width="3" height="1" fill="#000"/><rect x="892" y="52" width="3" height="1" fill="#000"/><rect x="892" y="62" width="3" height="1" fill="#000"/><rect x="892" y="71" width="3" height="1" fill="#000"/><rect x="892" y="80" width="6" height="1" fill="#000"/><rect x="892" y="89" width="3" height="1" fill="#000"/><rect x="892" y="98" width="3" height="1" fill="#000"/><rect x="892" y="108" width="3" height="1" fill="#000"/><rect x="892" y="117" width="3" height="1" fill="#000"/><rect x="892" y="126" width="6" height="1" fill="#000"/><rect x="892" y="136" width="6" height="1" fill="#000"/><rect x="892" y="147" width="3" height="1" fill="#000"/><rect x="892" y="157" width="6" height="1" fill="#000"/><rect x="892" y="168" width="3" height="1" fill="#000"/><rect x="892" y="178" width="6" height="1" fill="#000"/><rect x="892" y="189" width="3" height="1" fill="#000"/><rect x="892" y="200" width="6" height="1" fill="#000"/><rect x="892" y="210" width="3" height="1" fill="#000"/><rect x="892" y="221" width="6" height="1" fill="#000"/><rect x="892" y="253" width="6" height="1" fill="#000"/><rect x="892" y="275" width="3" height="1" fill="#000"/><rect x="892" y="297" width="3" height="1" fill="#000"/><rect x="892" y="318" width="3" height="1" fill="#000"/><rect x="892" y="340" width="3" height="1" fill="#000"/><rect x="892" y="361" width="6" height="1" fill="#000"/><rect x="892" y="383" width="3" height="1" fill="#000"/><rect x="892" y="405" width="3" height="1" fill="#000"/><rect x="892" y="426" width="3" height="1" fill="#000"/><rect x="892" y="448" width="3" height="1" fill="#000"/><rect x="892" y="469" width="6" height="1" fill="#000"/><rect x="892" y="491" width="3" height="1" fill="#000"/><rect x="892" y="512" width="3" height="1" fill="#000"/><rect x="892" y="534" width="3" height="1" fill="#000"/><rect x="892" y="556" width="3" height="1" fill="#000"/><rect x="892" y="577" width="6" height="1" fill="#000"/><rect x="892" y="599" width="3" height="1" fill="#000"/><rect x="892" y="620" width="3" height="1" fill="#000"/><rect x="892" y="642" width="3" height="1" fill="#000"/><rect x="892" y="663" width="3" height="1" fill="#000"/><rect x="892" y="685" width="6" height="1" fill="#000"/><rect x="892" y="707" width="3" height="1" fill="#000"/><rect x="50" y="724" width="1" height="4" fill="#000"/><rect x="56" y="724" width="1" height="4" fill="#000"/><rect x="119" y="724" width="1" height="4" fill="#000"/><rect x="235" y="724" width="1" height="4" fill="#000"/><rect x="361" y="724" width="1" height="4" fill="#000"/><rect x="487" y="724" width="1" height="4" fill="#000"/><rect x="614" y="724" width="1" height="4" fill="#000"/><rect x="740" y="724" width="1" height="4" fill="#000"/><rect x="866" y="724" width="1" height="4" fill="#000"/></g><g fill="#000" stroke="#000" stroke-width="1" shape-rendering="crispEdges"><ellipse cx="87" cy="12.5" rx="5.5" ry="3" fill="none"/><rect stroke="none" x="86" y="16" width="1" height="4"/><rect stroke="none" x="80" y="20" width="13" height="1"/><rect stroke="none" x="100" y="8" width="5" height="1"/><rect stroke="none" x="96" y="10" width="13" height="1"/><ellipse cx="102.5" cy="14" rx="4" ry="1.5" fill="none"/><rect stroke="none" x="96" y="17" width="13" height="1"/><rect stroke="none" x="102" y="18" width="1" height="4"/><ellipse cx="870" cy="12.5" rx="5.5" ry="3" fill="none"/><rect stroke="none" x="869" y="16" width="1" height="4"/><rect stroke="none" x="863" y="20" width="13" height="1"/><rect stroke="none" x="883" y="8" width="5" height="1"/><rect stroke="none" x="879" y="10" width="13" height="1"/><ellipse cx="885.5" cy="14" rx="4" ry="1.5" fill="none"/><rect stroke="none" x="879" y="17" width="13" height="1"/><rect stroke="none" x="885" y="18" width="1" height="4"/><rect stroke="none" x="365" y="9" width="7" height="1"/><rect stroke="none" x="365" y="9" width="1" height="11"/><rect stroke="none" x="365" y="19" width="9" height="1"/><rect stroke="none" x="375" y="8" width="1" height="14"/><rect stroke="none" x="376" y="13" width="3" height="1"/><ellipse cx="388" cy="11" rx="5.5" ry="2.5" fill="none"/><rect stroke="none" x="381" y="15" width="14" height="1"/><rect stroke="none" x="387" y="16" width="1" height="6"/><rect stroke="none" x="398" y="8" width="12" height="1"/><line x1="403.5" y1="9.5" x2="397.5" y2="12.5"/><line x1="403.5" y1="9.5" x2="409.5" y2="12.5"/><rect stroke="none" x="403" y="12" width="1" height="3"/><rect stroke="none" x="397" y="15" width="14" height="1"/><rect stroke="none" x="398" y="18" width="1" height="4"/><rect stroke="none" x="398" y="21" width="12" height="1"/><rect stroke="none" x="419" y="9" width="1" height="2"/><line x1="419.5" y1="10.5" x2="413.5" y2="15.5"/><line x1="419.5" y1="10.5" x2="425.5" y2="15.5"/><rect stroke="none" x="413" y="20" width="13" height="1"/><rect stroke="none" x="436" y="8" width="1" height="2"/><line x1="436.5" y1="9.5" x2="432.5" y2="15.5"/><line x1="436.5" y1="9.5" x2="440.5" y2="15.5"/><rect stroke="none" x="443" y="8" width="1" height="10"/><rect stroke="none" x="444" y="12" width="2" height="1"/><rect stroke="none" x="434" y="18" width="1" height="4"/><rect stroke="none" x="434" y="21" width="10" height="1"/><ellipse cx="452.5" cy="11.5" rx="3" ry="3" fill="none"/><rect stroke="none" x="459" y="8" width="1" height="8"/><rect stroke="none" x="456" y="11" width="3" height="1"/><rect stroke="none" x="450" y="16" width="1" height="6"/><rect stroke="none" x="459" y="16" width="1" height="6"/><rect stroke="none" x="450" y="18" width="10" height="1"/><rect stroke="none" x="450" y="21" width="10" height="1"/><rect stroke="none" x="465" y="9" width="8" height="1"/><line x1="468.5" y1="10" x2="464.5" y2="19.5"/><line x1="468.5" y1="13" x2="472.5" y2="19.5"/><rect stroke="none" x="475" y="8" width="1" height="14"/><rect stroke="none" x="487" y="8" width="1" height="2"/><line x1="487.5" y1="9.5" x2="481.5" y2="12.5"/><line x1="487.5" y1="9.5" x2="493.5" y2="12.5"/><rect stroke="none" x="481" y="15" width="14" height="1"/><rect stroke="none" x="487" y="16" width="1" height="6"/><rect stroke="none" x="571" y="8" width="1" height="5"/><rect stroke="none" x="581" y="8" width="1" height="5"/><rect stroke="none" x="571" y="9" width="11" height="1"/><rect stroke="none" x="571" y="12" width="11" height="1"/><rect stroke="none" x="570" y="15" width="13" height="1"/><rect stroke="none" x="576" y="16" width="1" height="2"/><rect stroke="none" x="571" y="18" width="1" height="3"/><rect stroke="none" x="572" y="21" width="11" height="1"/><rect stroke="none" x="504" y="11" width="2" height="11"/><rect stroke="none" x="505" y="10" width="2" height="1"/><rect stroke="none" x="505" y="22" width="2" height="1"/><rect stroke="none" x="512" y="18" width="2" height="2"/><rect stroke="none" x="516" y="10" width="2" height="10"/><rect stroke="none" x="518" y="10" width="3" height="2"/><rect stroke="none" x="518" y="18" width="3" height="2"/><rect stroke="none" x="521" y="12" width="2" height="6"/><rect stroke="none" x="520" y="11" width="2" height="1"/><rect stroke="none" x="520" y="18" width="2" height="1"/><rect stroke="none" x="529" y="10" width="2" height="9"/><rect stroke="none" x="526" y="18" width="4" height="2"/><rect stroke="none" x="525" y="16" width="2" height="2"/><rect stroke="none" x="533" y="10" width="2" height="10"/><rect stroke="none" x="541" y="11" width="2" height="11"/><rect stroke="none" x="540" y="10" width="2" height="1"/><rect stroke="none" x="540" y="22" width="2" height="1"/><rect stroke="none" x="549" y="18" width="2" height="2"/><rect stroke="none" x="548" y="20" width="2" height="1"/><rect stroke="none" x="563" y="10" width="2" height="10"/><rect stroke="none" x="561" y="11" width="2" height="2"/></g>
</svg>
<div class="t" style="left:899px;top:75px;font-size:11px;font-weight:normal;color:#000;">50</div><div class="t" style="left:899px;top:121px;font-size:11px;font-weight:normal;color:#000;">0</div><div class="t" style="left:899px;top:131px;font-size:11px;font-weight:normal;color:#000;">10</div><div class="t" style="left:899px;top:152px;font-size:11px;font-weight:normal;color:#000;">0</div><div class="t" style="left:899px;top:173px;font-size:11px;font-weight:normal;color:#000;">-10</div><div class="t" style="left:899px;top:194px;font-size:11px;font-weight:normal;color:#000;">-20</div><div class="t" style="left:899px;top:216px;font-size:11px;font-weight:normal;color:#000;">-30</div><div class="t" style="left:899px;top:248px;font-size:11px;font-weight:normal;color:#000;">12600.00</div><div class="t" style="left:899px;top:356px;font-size:11px;font-weight:normal;color:#000;">12550.00</div><div class="t" style="left:899px;top:463.5px;font-size:11px;font-weight:normal;color:#000;">12500.00</div><div class="t" style="left:899px;top:571px;font-size:11px;font-weight:normal;color:#000;">12450.00</div><div class="t" style="left:899px;top:679px;font-size:11px;font-weight:normal;color:#000;">12400.00</div><div class="t" style="left:895px;top:635px;width:52px;height:14px;background:#7B7BF0;"></div><div class="t" style="left:898px;top:637px;font-size:11px;font-weight:normal;color:#fff;letter-spacing:-0.15px;">12,419.86</div><div class="t" style="left:904.5px;top:651.5px;font-size:11px;font-weight:normal;color:#0000FF;letter-spacing:0.2px;">-1.28%</div><div class="t" style="left:1px;top:731px;font-size:12px;font-weight:bold;color:#000;">5/29</div><div class="t" style="left:51px;top:731px;font-size:12px;font-weight:bold;color:#000;">5/30</div><div class="t c" style="left:99.5px;top:730.5px;width:40px;font-size:11.5px;">10</div><div class="t c" style="left:215.5px;top:730.5px;width:40px;font-size:11.5px;">11</div><div class="t c" style="left:341.5px;top:730.5px;width:40px;font-size:11.5px;">12</div><div class="t c" style="left:467.5px;top:730.5px;width:40px;font-size:11.5px;">13</div><div class="t c" style="left:594px;top:730.5px;width:40px;font-size:11.5px;">14</div><div class="t c" style="left:720px;top:730.5px;width:40px;font-size:11.5px;">15</div><div class="t c" style="left:846px;top:730.5px;width:40px;font-size:11.5px;">16</div><div class="t" style="left:2px;top:8px;font-size:14px;font-weight:bold;color:#000;">2012-05-29</div><div class="t" style="left:114.5px;top:8px;font-size:14px;font-weight:bold;color:#000;">3:37:00</div><div class="t" style="left:786px;top:8px;font-size:14px;font-weight:bold;color:#000;">2012-05-30</div><div class="t" style="left:897px;top:8px;font-size:14px;font-weight:bold;color:#000;">4:04:00</div><div class="t" style="left:775.5px;top:748.5px;font-size:13px;font-weight:bold;color:#000;letter-spacing:0.2px;word-spacing:0.6px;">Daishin Securities Co. Ltd.</div>
</body></html>
